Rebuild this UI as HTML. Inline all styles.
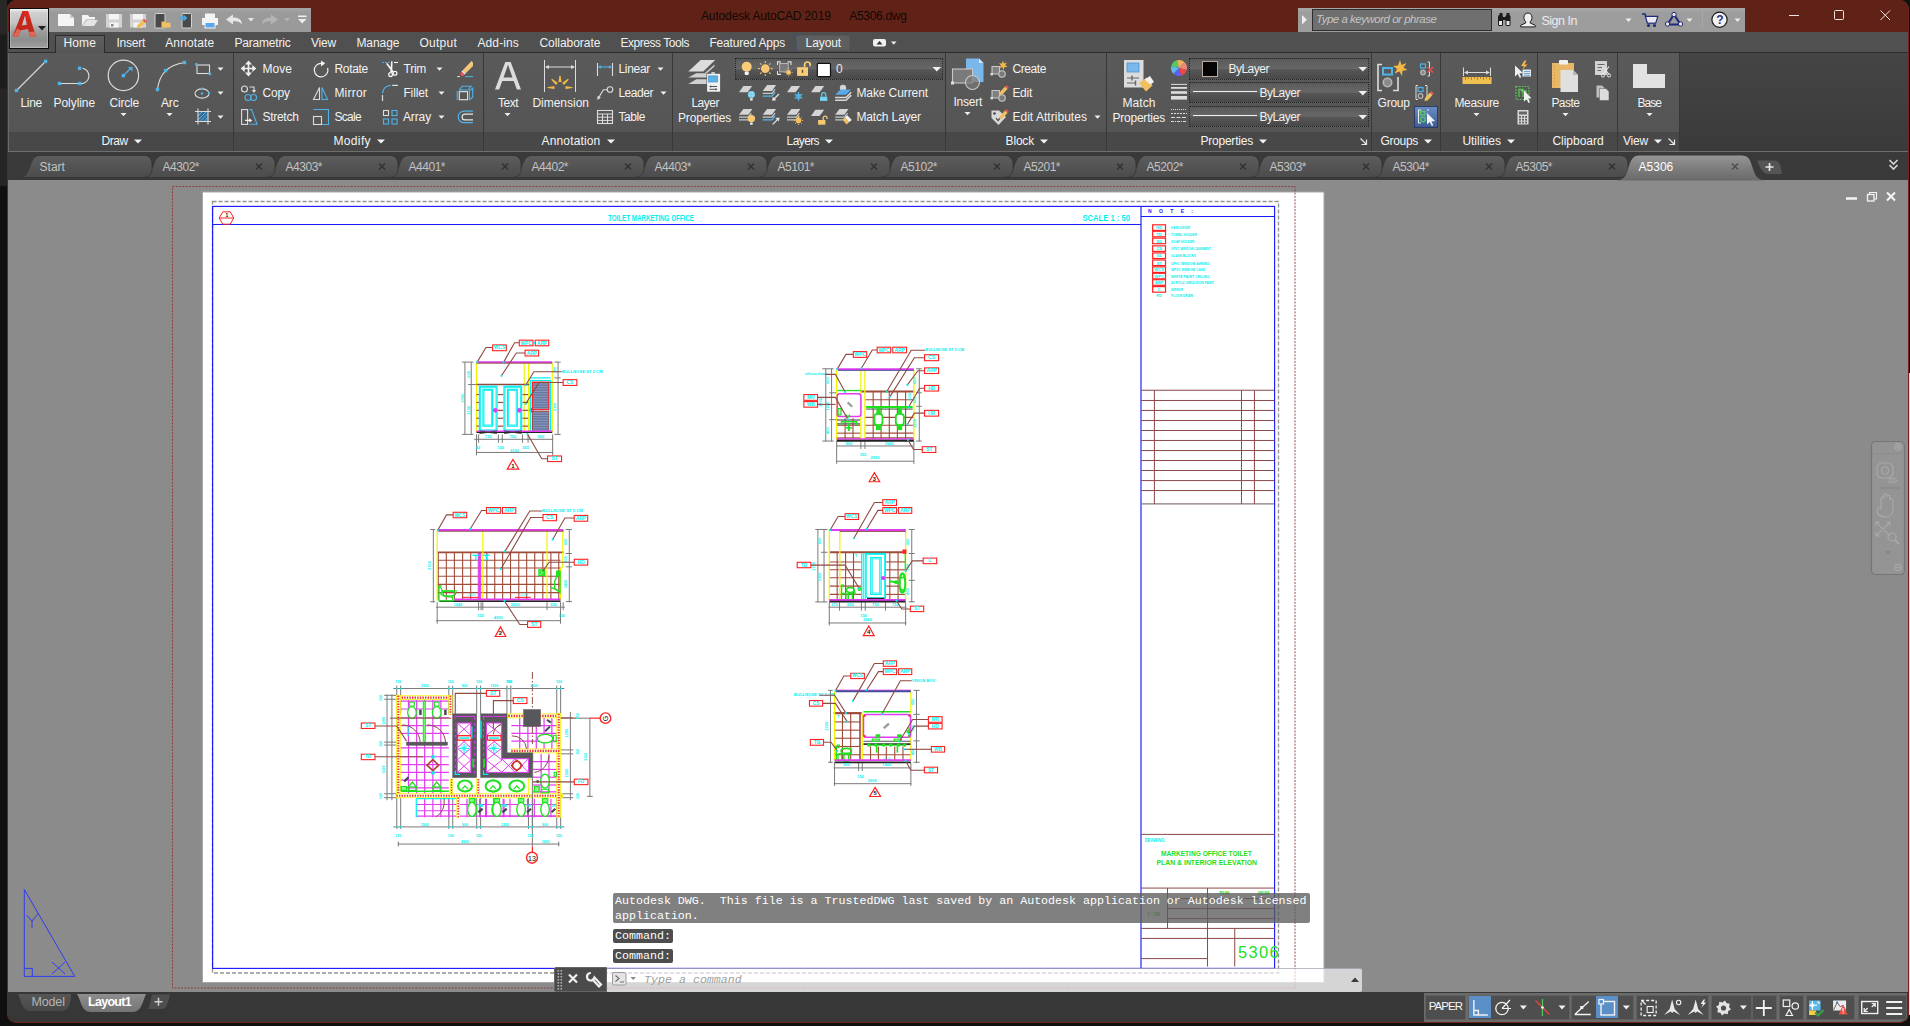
<!DOCTYPE html>
<html>
<head>
<meta charset="utf-8">
<title>Autodesk AutoCAD 2019 - A5306.dwg</title>
<style>
*{box-sizing:border-box;margin:0;padding:0}
html,body{width:1910px;height:1026px;overflow:hidden;background:#101010;font-family:"Liberation Sans",sans-serif;}
.a{position:absolute}
#win{position:absolute;left:7px;top:0;width:1902px;height:1023px;background:#3b3b3b;border-left:1px solid #6b2519;border-right:1px solid #6b2519;border-bottom:1px solid #6b2519;border-radius:9px;overflow:hidden}
#leftstrip{position:absolute;left:0;top:0;width:7px;height:1026px;background:#181818}
#inner{position:absolute;left:-8px;top:0;width:1910px;height:1026px}
.t{position:absolute;white-space:pre;line-height:14px;font-size:12px;color:#f2f2f2}
svg{position:absolute;left:0;top:0;overflow:visible}
</style>
</head>
<body>
<div id="leftstrip" style="background:linear-gradient(#282828 0,#282828 34px,#1c1c1c 35px,#1c1c1c 88px,#252525 89px,#252525 185px,#0f0f0f 187px)"></div>
<div id="rightstrip" style="position:absolute;left:1909px;top:373px;width:1px;height:642px;background:#d6d6d6"></div>
<div id="win"><div id="inner">
<div class="a" style="left:8px;top:0px;width:1901px;height:32px;background:#602217;"></div>
<div class="t" style="left:701px;top:8.53px;font-size:12px;line-height:14px;color:#120806;letter-spacing:-0.146px;">Autodesk AutoCAD 2019</div>
<div class="t" style="left:849.3px;top:8.53px;font-size:12px;line-height:14px;color:#120806;letter-spacing:-0.305px;">A5306.dwg</div>
<div class="a" style="left:49px;top:8px;width:262px;height:24px;background:linear-gradient(#a6a6a6,#9a9a9a 20%,#9a9a9a);"></div>
<div class="a" style="left:1298px;top:8px;width:447px;height:24px;background:linear-gradient(#a8a8a8,#9d9d9d 20%,#9d9d9d);"></div>
<div class="a" style="left:1312px;top:9px;width:180px;height:22px;background:#6f6f6f;border:1px solid #2e2e2e;"></div>
<div class="t" style="left:1316px;top:13.45px;font-size:11.5px;line-height:13.5px;color:#c4c4c4;letter-spacing:-0.488px;font-style:italic;">Type a keyword or phrase</div>
<div class="t" style="left:1541.4px;top:13.62px;font-size:12.5px;line-height:14.5px;color:#ececec;letter-spacing:-0.474px;">Sign In</div>
<div class="a" style="left:8px;top:32px;width:1901px;height:21px;background:#505050;"></div>
<div class="a" style="left:8px;top:52px;width:1901px;height:1px;background:#2c2c2c;"></div>
<div class="a" style="left:55px;top:35px;width:50px;height:18px;background:linear-gradient(#5e5e5e,#565656);border:1px solid #2c2c2c;border-bottom:none;"></div>
<div class="a" style="left:796px;top:35px;width:54px;height:16px;background:#5e5e5e;border:1px dotted #34507e;"></div>
<div class="t" style="left:63.5px;top:36.03px;font-size:12px;line-height:14px;color:#f0f0f0;letter-spacing:0.097px;">Home</div>
<div class="t" style="left:116.5px;top:36.03px;font-size:12px;line-height:14px;color:#f0f0f0;letter-spacing:-0.235px;">Insert</div>
<div class="t" style="left:165.2px;top:36.03px;font-size:12px;line-height:14px;color:#f0f0f0;letter-spacing:0.145px;">Annotate</div>
<div class="t" style="left:234.4px;top:36.03px;font-size:12px;line-height:14px;color:#f0f0f0;letter-spacing:-0.182px;">Parametric</div>
<div class="t" style="left:311px;top:36.03px;font-size:12px;line-height:14px;color:#f0f0f0;letter-spacing:-0.199px;">View</div>
<div class="t" style="left:356.4px;top:36.03px;font-size:12px;line-height:14px;color:#f0f0f0;letter-spacing:-0.061px;">Manage</div>
<div class="t" style="left:419.4px;top:36.03px;font-size:12px;line-height:14px;color:#f0f0f0;letter-spacing:0.263px;">Output</div>
<div class="t" style="left:477.4px;top:36.03px;font-size:12px;line-height:14px;color:#f0f0f0;letter-spacing:0.13px;">Add-ins</div>
<div class="t" style="left:539.4px;top:36.03px;font-size:12px;line-height:14px;color:#f0f0f0;letter-spacing:-0.034px;">Collaborate</div>
<div class="t" style="left:620.4px;top:36.03px;font-size:12px;line-height:14px;color:#f0f0f0;letter-spacing:-0.452px;">Express Tools</div>
<div class="t" style="left:709.4px;top:36.03px;font-size:12px;line-height:14px;color:#f0f0f0;letter-spacing:-0.189px;">Featured Apps</div>
<div class="t" style="left:805.6px;top:36.03px;font-size:12px;line-height:14px;color:#f0f0f0;letter-spacing:-0.105px;">Layout</div>
<div class="a" style="left:9px;top:8px;width:40px;height:41px;background:linear-gradient(#f2f2f2 0,#e0e0e0 4%,#cfcfcf 10%,#c4c4c4 35%,#9a9a9a 60%,#8e8e8e 80%,#a0a0a0 100%);border:1px solid #0c0c0c;box-shadow:inset 0 0 0 1px rgba(255,255,255,.25);"></div>
<svg width="1910" height="1026" viewBox="0 0 1910 1026"><path d="M12.6,36.5 L22.5,11 L28,11 L36,36.5 L30,36.5 L28,29 L20.5,30.5 L18.5,36.5 Z M21.8,25.6 L26.8,24.8 L25,15.5 Z" fill="#c4281d"/><path d="M12.6,36.5 L18.5,36.5 L20.5,30.5 L17.5,28.5 Z M30,36.5 L36,36.5 L34.4,31.5 L28.8,32Z" fill="#e5705c" opacity=".85"/><path d="M22.5,11 L28,11 L31,20 L26.5,18Z" fill="#e0281c" opacity=".9"/><path d="M38,26 L46,26 L42,30.5 Z" fill="#222"/><path d="M58,14 H70 L74,18 V26 H58 Z" fill="#f4f4f4"/><path d="M70,14 V18 H74Z" fill="#c8c8c8"/><path d="M82,26 V15 H88 L89.5,17 H95 V19.5 H86 L82,26Z" fill="#f4f4f4"/><path d="M82.5,26 L86.5,20 H98 L94,26Z" fill="#e4e4e4"/><path d="M106,14 H122 V27.5 H106Z" fill="#d2d2d2"/><rect x="109" y="14" width="10" height="5.5" fill="#f4f4f4"/><rect x="109.5" y="22.5" width="9" height="5" fill="#f4f4f4"/><rect x="111" y="24" width="2.5" height="2.5" fill="#8a8a8a"/><path d="M130,14 H146 V27.5 H130Z" fill="#d2d2d2"/><rect x="133" y="14" width="10" height="5.5" fill="#f4f4f4"/><rect x="133.5" y="22.5" width="9" height="5" fill="#f4f4f4"/><path d="M137,25.5 L142.5,20 L145.5,23 L140,28 L137,28.2Z" fill="#f0c060"/><path d="M142.5,20 L144,18.7 L146.8,21.6 L145.5,23Z" fill="#e8584a"/><rect x="155" y="13.5" width="10" height="14.5" rx="1" fill="#4a4a4a" stroke="#d2d2d2" stroke-width="1"/><path d="M161.5,27.5 V21.5 H165 L166,22.8 H170.5 V27.5Z" fill="#f2c260"/><rect x="182" y="13.5" width="9.5" height="14.5" rx="1" fill="#4a4a4a" stroke="#d2d2d2" stroke-width="1"/><path d="M179.5,16.5 H183.5 V14.5 L187.5,18 L183.5,21.5 V19.5 H179.5Z" fill="#4aa8e0"/><rect x="205" y="13.5" width="10" height="5" fill="#f4f4f4"/><rect x="202" y="18" width="16" height="7" fill="#f4f4f4"/><rect x="205" y="22.5" width="10" height="5.5" fill="#5aa8ee" stroke="#f4f4f4" stroke-width="1"/><path d="M226,19.5 L233,14.5 V17.5 C239,17.5 242,20 242,24.5 C240,21.5 237.5,21 233,21.3 V24.5Z" fill="#e6e6e6"/><path d="M248,18 H254 L251,21.5Z" fill="#e6e6e6"/><path d="M278,19.5 L271,14.5 V17.5 C265,17.5 262,20 262,24.5 C264,21.5 266.5,21 271,21.3 V24.5Z" fill="#b4b4b4"/><path d="M284,18 H290 L287,21.5Z" fill="#b4b4b4"/><rect x="298" y="15.5" width="8.5" height="1.6" fill="#eee"/><path d="M298,19 H306.5 L302.2,23.5Z" fill="#eee"/><path d="M1302,15 L1307,19.8 L1302,24.5Z" fill="#eee"/><g fill="#1c1c1c"><rect x="1498" y="15" width="5" height="11" rx="1.5"/><rect x="1505.5" y="15" width="5" height="11" rx="1.5"/><rect x="1499.5" y="13" width="3" height="3"/><rect x="1506.5" y="13" width="3" height="3"/><rect x="1502" y="17" width="5" height="3"/></g><rect x="1499" y="21" width="3" height="4" fill="#e8e8e8"/><rect x="1506.5" y="21" width="3" height="4" fill="#e8e8e8"/><path d="M1528,13 c2.6,0 4,2 4,4.5 c0,2 -1,3.5 -1.8,4.3 v1.2 l5,2.3 v1.6 h-14.5 v-1.6 l5,-2.3 v-1.2 c-.8,-.8 -1.8,-2.3 -1.8,-4.3 c0,-2.5 1.4,-4.5 4.1,-4.5z" fill="#f0f0f0" stroke="#1c1c1c" stroke-width="1"/><path d="M1625.5,18.5 H1631.5 L1628.5,22Z" fill="#eee"/><path d="M1642,14 H1645 L1647.5,23 H1655.5 L1657.5,16.5 H1646" fill="none" stroke="#1f2a7a" stroke-width="1.6"/><path d="M1646.3,17 H1657 L1655.3,22.5 H1647.8Z" fill="#e8e8ee"/><circle cx="1648.5" cy="25.5" r="1.6" fill="#1f2a7a"/><circle cx="1654.5" cy="25.5" r="1.6" fill="#1f2a7a"/><path d="M1674,14.5 L1680.5,24.5 H1667.5Z" fill="none" stroke="#1f2a7a" stroke-width="2.2" stroke-linejoin="round"/><circle cx="1674" cy="14.5" r="2.2" fill="#e8e8ee" stroke="#1f2a7a"/><circle cx="1667.5" cy="24" r="2.2" fill="#e8e8ee" stroke="#1f2a7a"/><circle cx="1680.5" cy="24" r="2.2" fill="#e8e8ee" stroke="#1f2a7a"/><path d="M1686.5,18.5 H1692.5 L1689.5,22Z" fill="#eee"/><line x1="1702.5" y1="11" x2="1702.5" y2="29" stroke="#b8b0b0" stroke-dasharray="1 1"/><circle cx="1719.5" cy="19.7" r="7.6" fill="#f2f2f2" stroke="#1c1c1c" stroke-width="1.2"/><path d="M1734.5,18.5 H1740.5 L1737.5,22Z" fill="#eee"/><g stroke="#f0e4e0" stroke-width="1" fill="none"><line x1="1789" y1="15.5" x2="1799" y2="15.5"/><rect x="1834.5" y="10.5" width="9" height="9" rx="1"/><path d="M1880.5,10.5 L1890,20 M1890,10.5 L1880.5,20"/></g><rect x="873" y="39" width="13" height="7.5" rx="2" fill="#f0f0f0"/><path d="M876.5,44.5 H882.5 L879.5,41Z" fill="#333"/><path d="M891,41.5 H896.5 L893.7,44.8Z" fill="#eee"/></svg><div class="t" style="left:1716.3px;top:13.03px;font-size:12px;line-height:14px;color:#2a2f8a;font-weight:bold;">?</div>
<div class="a" style="left:8px;top:53px;width:1901px;height:99px;background:#3d3d3d;"></div>
<div class="a" style="left:1680px;top:53px;width:1229px;height:98px;background:linear-gradient(#454545,#3a3a3a);"></div>
<div class="a" style="left:9px;top:53px;width:224px;height:79px;background:linear-gradient(#5a5a5a,#555555);"></div>
<div class="a" style="left:9px;top:132px;width:224px;height:19px;background:#484848;"></div>
<div class="a" style="left:233px;top:53px;width:1px;height:98px;background:#383838;"></div>
<div class="t" style="left:101.6px;top:134.03px;font-size:12px;line-height:14px;color:#f4f4f4;letter-spacing:-0.501px;">Draw</div>
<div class="a" style="left:234px;top:53px;width:249px;height:79px;background:linear-gradient(#5a5a5a,#555555);"></div>
<div class="a" style="left:234px;top:132px;width:249px;height:19px;background:#484848;"></div>
<div class="a" style="left:483px;top:53px;width:1px;height:98px;background:#383838;"></div>
<div class="t" style="left:333.4px;top:134.03px;font-size:12px;line-height:14px;color:#f4f4f4;letter-spacing:0.376px;">Modify</div>
<div class="a" style="left:484px;top:53px;width:188px;height:79px;background:linear-gradient(#5a5a5a,#555555);"></div>
<div class="a" style="left:484px;top:132px;width:188px;height:19px;background:#484848;"></div>
<div class="a" style="left:672px;top:53px;width:1px;height:98px;background:#383838;"></div>
<div class="t" style="left:541.6px;top:134.03px;font-size:12px;line-height:14px;color:#f4f4f4;letter-spacing:0.142px;">Annotation</div>
<div class="a" style="left:673px;top:53px;width:272px;height:79px;background:linear-gradient(#5a5a5a,#555555);"></div>
<div class="a" style="left:673px;top:132px;width:272px;height:19px;background:#484848;"></div>
<div class="a" style="left:945px;top:53px;width:1px;height:98px;background:#383838;"></div>
<div class="t" style="left:786.6px;top:134.03px;font-size:12px;line-height:14px;color:#f4f4f4;letter-spacing:-0.603px;">Layers</div>
<div class="a" style="left:946px;top:53px;width:160px;height:79px;background:linear-gradient(#5a5a5a,#555555);"></div>
<div class="a" style="left:946px;top:132px;width:160px;height:19px;background:#484848;"></div>
<div class="a" style="left:1106px;top:53px;width:1px;height:98px;background:#383838;"></div>
<div class="t" style="left:1005.6px;top:134.03px;font-size:12px;line-height:14px;color:#f4f4f4;letter-spacing:-0.189px;">Block</div>
<div class="a" style="left:1107px;top:53px;width:264px;height:79px;background:linear-gradient(#5a5a5a,#555555);"></div>
<div class="a" style="left:1107px;top:132px;width:264px;height:19px;background:#484848;"></div>
<div class="a" style="left:1371px;top:53px;width:1px;height:98px;background:#383838;"></div>
<div class="t" style="left:1200.4px;top:134.03px;font-size:12px;line-height:14px;color:#f4f4f4;letter-spacing:-0.209px;">Properties</div>
<div class="a" style="left:1372px;top:53px;width:68px;height:79px;background:linear-gradient(#5a5a5a,#555555);"></div>
<div class="a" style="left:1372px;top:132px;width:68px;height:19px;background:#484848;"></div>
<div class="a" style="left:1440px;top:53px;width:1px;height:98px;background:#383838;"></div>
<div class="t" style="left:1380.6px;top:134.03px;font-size:12px;line-height:14px;color:#f4f4f4;letter-spacing:-0.325px;">Groups</div>
<div class="a" style="left:1441px;top:53px;width:96px;height:79px;background:linear-gradient(#5a5a5a,#555555);"></div>
<div class="a" style="left:1441px;top:132px;width:96px;height:19px;background:#484848;"></div>
<div class="a" style="left:1537px;top:53px;width:1px;height:98px;background:#383838;"></div>
<div class="t" style="left:1462.4px;top:134.03px;font-size:12px;line-height:14px;color:#f4f4f4;letter-spacing:-0.008px;">Utilities</div>
<div class="a" style="left:1538px;top:53px;width:79px;height:79px;background:linear-gradient(#5a5a5a,#555555);"></div>
<div class="a" style="left:1538px;top:132px;width:79px;height:19px;background:#484848;"></div>
<div class="a" style="left:1617px;top:53px;width:1px;height:98px;background:#383838;"></div>
<div class="t" style="left:1552.4px;top:134.03px;font-size:12px;line-height:14px;color:#f4f4f4;letter-spacing:-0.018px;">Clipboard</div>
<div class="a" style="left:1618px;top:53px;width:61px;height:79px;background:linear-gradient(#5a5a5a,#555555);"></div>
<div class="a" style="left:1618px;top:132px;width:61px;height:19px;background:#484848;"></div>
<div class="a" style="left:1679px;top:53px;width:1px;height:98px;background:#383838;"></div>
<div class="t" style="left:1623px;top:134.03px;font-size:12px;line-height:14px;color:#f4f4f4;letter-spacing:-0.199px;">View</div>
<div class="a" style="left:8px;top:151px;width:1901px;height:1px;background:#6e6e6e;"></div>
<div class="a" style="left:8px;top:53px;width:1px;height:98px;background:#6a6a6a;"></div>
<div class="t" style="left:20.4px;top:96.03px;font-size:12px;line-height:14px;color:#f2f2f2;letter-spacing:-0.272px;">Line</div>
<div class="t" style="left:53.6px;top:96.03px;font-size:12px;line-height:14px;color:#f2f2f2;letter-spacing:-0.078px;">Polyline</div>
<div class="t" style="left:109.6px;top:96.03px;font-size:12px;line-height:14px;color:#f2f2f2;letter-spacing:-0.212px;">Circle</div>
<div class="t" style="left:161px;top:96.03px;font-size:12px;line-height:14px;color:#f2f2f2;letter-spacing:-0.134px;">Arc</div>
<div class="t" style="left:262.4px;top:62.03px;font-size:12px;line-height:14px;color:#f2f2f2;letter-spacing:0.064px;">Move</div>
<div class="t" style="left:262.4px;top:86.03px;font-size:12px;line-height:14px;color:#f2f2f2;letter-spacing:-0.104px;">Copy</div>
<div class="t" style="left:262.4px;top:110.03px;font-size:12px;line-height:14px;color:#f2f2f2;letter-spacing:-0.26px;">Stretch</div>
<div class="t" style="left:334.4px;top:62.03px;font-size:12px;line-height:14px;color:#f2f2f2;letter-spacing:-0.293px;">Rotate</div>
<div class="t" style="left:334.4px;top:86.03px;font-size:12px;line-height:14px;color:#f2f2f2;letter-spacing:0.212px;">Mirror</div>
<div class="t" style="left:334.4px;top:110.03px;font-size:12px;line-height:14px;color:#f2f2f2;letter-spacing:-0.684px;">Scale</div>
<div class="t" style="left:403.6px;top:62.03px;font-size:12px;line-height:14px;color:#f2f2f2;letter-spacing:-0.286px;">Trim</div>
<div class="t" style="left:403.4px;top:86.03px;font-size:12px;line-height:14px;color:#f2f2f2;letter-spacing:-0.123px;">Fillet</div>
<div class="t" style="left:403px;top:110.03px;font-size:12px;line-height:14px;color:#f2f2f2;letter-spacing:-0.134px;">Array</div>
<div class="t" style="left:498px;top:96.03px;font-size:12px;line-height:14px;color:#f2f2f2;letter-spacing:-0.502px;">Text</div>
<div class="t" style="left:532.4px;top:96.03px;font-size:12px;line-height:14px;color:#f2f2f2;letter-spacing:-0.01px;">Dimension</div>
<div class="t" style="left:618.4px;top:62.03px;font-size:12px;line-height:14px;color:#f2f2f2;letter-spacing:-0.293px;">Linear</div>
<div class="t" style="left:618.4px;top:86.03px;font-size:12px;line-height:14px;color:#f2f2f2;letter-spacing:-0.461px;">Leader</div>
<div class="t" style="left:618.4px;top:110.03px;font-size:12px;line-height:14px;color:#f2f2f2;letter-spacing:-0.418px;">Table</div>
<div class="t" style="left:691.4px;top:96.03px;font-size:12px;line-height:14px;color:#f2f2f2;letter-spacing:-0.484px;">Layer</div>
<div class="t" style="left:678px;top:111.03px;font-size:12px;line-height:14px;color:#f2f2f2;letter-spacing:-0.169px;">Properties</div>
<div class="t" style="left:856.4px;top:86.03px;font-size:12px;line-height:14px;color:#f2f2f2;letter-spacing:-0.091px;">Make Current</div>
<div class="t" style="left:856.4px;top:110.03px;font-size:12px;line-height:14px;color:#f2f2f2;letter-spacing:-0.13px;">Match Layer</div>
<div class="t" style="left:953.4px;top:95.03px;font-size:12px;line-height:14px;color:#f2f2f2;letter-spacing:-0.235px;">Insert</div>
<div class="t" style="left:1012.4px;top:62.03px;font-size:12px;line-height:14px;color:#f2f2f2;letter-spacing:-0.403px;">Create</div>
<div class="t" style="left:1012.4px;top:86.03px;font-size:12px;line-height:14px;color:#f2f2f2;letter-spacing:-0.27px;">Edit</div>
<div class="t" style="left:1012.4px;top:110.03px;font-size:12px;line-height:14px;color:#f2f2f2;letter-spacing:0.037px;">Edit Attributes</div>
<div class="t" style="left:1122.4px;top:96.03px;font-size:12px;line-height:14px;color:#f2f2f2;letter-spacing:0.104px;">Match</div>
<div class="t" style="left:1112.4px;top:111.03px;font-size:12px;line-height:14px;color:#f2f2f2;letter-spacing:-0.209px;">Properties</div>
<div class="t" style="left:1377.6px;top:96.03px;font-size:12px;line-height:14px;color:#f2f2f2;letter-spacing:-0.27px;">Group</div>
<div class="t" style="left:1454.4px;top:96.03px;font-size:12px;line-height:14px;color:#f2f2f2;letter-spacing:-0.298px;">Measure</div>
<div class="t" style="left:1551.4px;top:96.03px;font-size:12px;line-height:14px;color:#f2f2f2;letter-spacing:-0.537px;">Paste</div>
<div class="t" style="left:1637.4px;top:96.03px;font-size:12px;line-height:14px;color:#f2f2f2;letter-spacing:-0.938px;">Base</div>
<div class="a" style="left:735px;top:58px;width:208px;height:22px;background:linear-gradient(#5a5a5a,#676767 48%,#565656 54%,#484848);border:1px dotted #262626;"></div>
<div class="t" style="left:836px;top:62.03px;font-size:12px;line-height:14px;color:#e8e8e8;">0</div>
<div class="a" style="left:1189px;top:58px;width:180px;height:21.5px;background:linear-gradient(#5a5a5a,#676767 48%,#565656 54%,#484848);border:1px dotted #262626;"></div>
<div class="a" style="left:1189px;top:81.5px;width:180px;height:21.5px;background:linear-gradient(#5a5a5a,#676767 48%,#565656 54%,#484848);border:1px dotted #262626;"></div>
<div class="a" style="left:1189px;top:105.5px;width:180px;height:21.5px;background:linear-gradient(#5a5a5a,#676767 48%,#565656 54%,#484848);border:1px dotted #262626;"></div>
<div class="t" style="left:1228.4px;top:62.03px;font-size:12px;line-height:14px;color:#f0f0f0;letter-spacing:-0.489px;">ByLayer</div>
<div class="t" style="left:1259.4px;top:85.53px;font-size:12px;line-height:14px;color:#f0f0f0;letter-spacing:-0.489px;">ByLayer</div>
<div class="t" style="left:1259.4px;top:109.53px;font-size:12px;line-height:14px;color:#f0f0f0;letter-spacing:-0.489px;">ByLayer</div>
<div class="a" style="left:1414px;top:106px;width:24px;height:21.5px;background:linear-gradient(#6a8cc4,#3c5c98);border:1px solid #2c3c66;"></div>
<svg width="1910" height="1026" viewBox="0 0 1910 1026"><path d="M134,139.5 H142 L138,143.5Z" fill="#f4f4f4"/><path d="M377,139.5 H385 L381,143.5Z" fill="#f4f4f4"/><path d="M607,139.5 H615 L611,143.5Z" fill="#f4f4f4"/><path d="M825,139.5 H833 L829,143.5Z" fill="#f4f4f4"/><path d="M1040,139.5 H1048 L1044,143.5Z" fill="#f4f4f4"/><path d="M1259,139.5 H1267 L1263,143.5Z" fill="#f4f4f4"/><path d="M1424,139.5 H1432 L1428,143.5Z" fill="#f4f4f4"/><path d="M1507,139.5 H1515 L1511,143.5Z" fill="#f4f4f4"/><path d="M1654,139.5 H1662 L1658,143.5Z" fill="#f4f4f4"/><line x1="17" y1="90" x2="45.5" y2="61.5" stroke="#dcdcdc" stroke-width="1.1"/><rect x="14.8" y="88.8" width="3.4" height="3.4" fill="#4fb3e8"/><rect x="43.9" y="59.699999999999996" width="3.4" height="3.4" fill="#4fb3e8"/><path d="M59.5,83.5 H80 A7.6,7.6 0 0 0 82.5,68.3" fill="none" stroke="#dcdcdc" stroke-width="1.1"/><rect x="57.8" y="81.8" width="3.4" height="3.4" fill="#4fb3e8"/><rect x="77.89999999999999" y="81.8" width="3.4" height="3.4" fill="#4fb3e8"/><rect x="77.89999999999999" y="66.6" width="3.4" height="3.4" fill="#4fb3e8"/><circle cx="123.4" cy="75.4" r="15.2" fill="none" stroke="#dcdcdc" stroke-width="1.2"/><rect x="121.7" y="73.89999999999999" width="3.4" height="3.4" fill="#4fb3e8"/><path d="M125,74 L131,68" stroke="#4fb3e8" stroke-width="1.2"/><path d="M128,67 H132.5 V71.5Z" fill="#4fb3e8"/><path d="M157.5,89.5 Q160,66 184.5,62.5" fill="none" stroke="#dcdcdc" stroke-width="1.1"/><rect x="155.8" y="87.8" width="3.4" height="3.4" fill="#4fb3e8"/><rect x="163.9" y="68.89999999999999" width="3.4" height="3.4" fill="#4fb3e8"/><rect x="182.8" y="60.8" width="3.4" height="3.4" fill="#4fb3e8"/><rect x="197" y="65" width="12.5" height="8.5" fill="none" stroke="#dcdcdc" stroke-width="1.1"/><rect x="195.10000000000002" y="63.099999999999994" width="2.4" height="2.4" fill="#4fb3e8"/><rect x="208.8" y="72.8" width="2.4" height="2.4" fill="#4fb3e8"/><ellipse cx="202" cy="93.5" rx="7" ry="4.6" fill="none" stroke="#dcdcdc" stroke-width="1.1"/><rect x="200.9" y="87.60000000000001" width="2.2" height="2.2" fill="#4fb3e8"/><rect x="207.9" y="91.9" width="2.2" height="2.2" fill="#4fb3e8"/><rect x="200.9" y="92.4" width="2.2" height="2.2" fill="#4fb3e8"/><rect x="198" y="111.5" width="10" height="10" fill="#3a6a94"/><path d="M198,116 L202.5,111.5 M198,120 L206.5,111.5 M200,121.5 L208,113.5 M204,121.5 L208,117.5" stroke="#4fb3e8" stroke-width="1"/><path d="M195,111.5 H211 M195,121.5 H211 M198,108.5 V124.5 M208,108.5 V124.5" stroke="#dcdcdc" stroke-width="1.1"/><path d="M217.5,67.5 H223.5 L220.5,70.8Z" fill="#f0f0f0"/><path d="M217.5,91.5 H223.5 L220.5,94.8Z" fill="#f0f0f0"/><path d="M217.5,115.5 H223.5 L220.5,118.8Z" fill="#f0f0f0"/><path d="M120.5,113.0 H126.5 L123.5,116.3Z" fill="#f0f0f0"/><path d="M166.5,113.0 H172.5 L169.5,116.3Z" fill="#f0f0f0"/><path d="M243,68.5 H254 M248.5,63 V74" stroke="#f0f0f0" stroke-width="1.7" fill="none"/><path d="M248.5,60.6 L252,64.6 H245Z M248.5,76.4 L252,72.4 H245Z M240.7,68.5 L244.7,65 V72Z M256.3,68.5 L252.3,65 V72Z" fill="#f0f0f0"/><circle cx="244.5" cy="89" r="3" fill="none" stroke="#dcdcdc" stroke-width="1.1"/><path d="M249.5,87 H254 V91" fill="none" stroke="#dcdcdc" stroke-width="1.1"/><path d="M254,93 L251.8,90 H256.2Z" fill="#dcdcdc"/><circle cx="248" cy="97.5" r="3" fill="none" stroke="#4fb3e8" stroke-width="1.1"/><circle cx="253.5" cy="97.5" r="3" fill="none" stroke="#4fb3e8" stroke-width="1.1"/><rect x="241.6" y="109.6" width="6" height="14.8" fill="none" stroke="#dcdcdc" stroke-width="1.1"/><path d="M249.5,109.6 H251.6 L257,124.3 H249.5" fill="none" stroke="#4fb3e8" stroke-width="1.1"/><path d="M245,120.4 H250" stroke="#f0f0f0" stroke-width="1.2"/><path d="M252.3,120.4 L249.3,118.2 V122.6Z" fill="#f0f0f0"/><path d="M327.6,68 A6.8,6.8 0 1 1 321.5,63.3" fill="none" stroke="#f0f0f0" stroke-width="1.2"/><path d="M321,60.4 L325.3,63.3 L321,66.6Z" fill="#f0f0f0"/><path d="M319.5,87.5 V99.5 H313.5Z" fill="none" stroke="#dcdcdc" stroke-width="1.1"/><path d="M322,87.5 V99.5 H327.5Z" fill="none" stroke="#4fb3e8" stroke-width="1.1"/><path d="M313.5,109.5 H328.5 V124.5 H322" fill="none" stroke="#4fb3e8" stroke-width="1.1"/><rect x="313.5" y="116.5" width="8" height="8" fill="none" stroke="#dcdcdc" stroke-width="1.1"/><path d="M382,62.5 H390.5" stroke="#4fb3e8" stroke-width="1.1" stroke-dasharray="1.8 1"/><path d="M394,62.5 H398" stroke="#f0f0f0" stroke-width="1.1"/><path d="M385.8,63.6 L387.6,63.2 L394.2,72 L392.6,72.8Z M391.2,61 L392.6,61.6 L392.2,72.2 L390.2,72Z" fill="#f4f4f4"/><circle cx="390.6" cy="74.6" r="1.9" fill="none" stroke="#f4f4f4" stroke-width="1.3"/><circle cx="395" cy="73.2" r="1.9" fill="none" stroke="#f4f4f4" stroke-width="1.3"/><path d="M382.5,93.5 A8.3,8.3 0 0 1 390.8,85.3" fill="none" stroke="#4fb3e8" stroke-width="1.2"/><path d="M382.5,95 V101 M392.2,85.4 H398" stroke="#dcdcdc" stroke-width="1.2"/><rect x="383.5" y="110.5" width="5" height="5" fill="none" stroke="#dcdcdc" stroke-width="1.1"/><rect x="392" y="110.5" width="5" height="5" fill="none" stroke="#4fb3e8" stroke-width="1.1"/><rect x="383.5" y="119" width="5" height="5" fill="none" stroke="#4fb3e8" stroke-width="1.1"/><rect x="392" y="119" width="5" height="5" fill="none" stroke="#4fb3e8" stroke-width="1.1"/><path d="M436.5,67.5 H442.5 L439.5,70.8Z" fill="#f0f0f0"/><path d="M438.5,91.5 H444.5 L441.5,94.8Z" fill="#f0f0f0"/><path d="M438.5,115.5 H444.5 L441.5,118.8Z" fill="#f0f0f0"/><path d="M462.5,70.5 L471.5,61 L473,62.5 V66 L465.5,73.5Z" fill="#f4c878"/><path d="M461.5,71.6 L462.5,70.5 L465.5,73.5 L464.5,74.6Z" fill="#f8f8f8"/><path d="M460.3,73 L461.5,71.6 L464.5,74.6 L463.2,75.9 Q460.5,76.5 460.3,73Z" fill="#f05858"/><path d="M457.2,76.6 H460" stroke="#e8e8e8" stroke-width="1"/><path d="M465,76.6 H473" stroke="#4fb3e8" stroke-width="1"/><rect x="459.3" y="91.7" width="8.3" height="8" fill="none" stroke="#e4e4e4" stroke-width="1.1"/><path d="M459.3,90 L462.2,86.3 H471.2 L468,90Z M469.5,90.6 L472.7,88.2 V97.2 L469.5,99.7Z M457.2,91 V100" fill="none" stroke="#4fb3e8" stroke-width="1.1"/><path d="M473,111.2 H464 A5.75,5.75 0 0 0 464,122.7 H473" fill="none" stroke="#4fb3e8" stroke-width="1.2"/><path d="M473,114.100 H465 A2.9,2.9 0 0 0 465,119.9 H473" fill="none" stroke="#e8e8e8" stroke-width="1.2"/><path d="M495,89.5 L505.3,62 H510.7 L521,89.5 H516.8 L513.8,81 H502.2 L499.2,89.5Z M503.5,77.5 H512.5 L508,64.8Z" fill="#dcdcdc"/><path d="M504.5,113.0 H510.5 L507.5,116.3Z" fill="#f0f0f0"/><path d="M544.5,60 V92 M575.5,60 V92 M546,67 H574" stroke="#dcdcdc" stroke-width="1" fill="none"/><path d="M545,67 L549,65 V69Z M575,67 L571,65 V69Z" fill="#dcdcdc"/><path d="M560,76 L559,81.5 H561Z M552,79.5 L556,84 L557,83Z M568,79.5 L564,84 L563,83Z M548,87.5 L554,86.8 V88.3Z M572,87.5 L566,86.8 V88.3Z" fill="#f0b848" stroke="#f0b848" stroke-width="1.2" stroke-linejoin="round"/><path d="M597.5,63 V76 M612.5,63 V76" stroke="#dcdcdc" stroke-width="1.1"/><path d="M599,67 H611" stroke="#4fb3e8" stroke-width="1.1"/><path d="M598,67 L601,65.3 V68.7Z M612,67 L609,65.3 V68.7Z" fill="#4fb3e8"/><circle cx="610" cy="89.5" r="2.8" fill="none" stroke="#dcdcdc" stroke-width="1.1"/><path d="M607.3,89.7 H603.4 L598.6,97.6" fill="none" stroke="#dcdcdc" stroke-width="1.1"/><path d="M597.3,100 L597.6,95.8 L600.9,97.8Z" fill="#dcdcdc"/><rect x="597.5" y="110.5" width="15" height="13" fill="none" stroke="#dcdcdc" stroke-width="1.1"/><path d="M597.5,114 H612.5 M597.5,117.2 H612.5 M597.5,120.4 H612.5 M602.5,114 V123.5 M607.5,114 V123.5" stroke="#dcdcdc" stroke-width="1"/><path d="M657.5,67.5 H663.5 L660.5,70.8Z" fill="#f0f0f0"/><path d="M660.5,91.5 H666.5 L663.5,94.8Z" fill="#f0f0f0"/><path d="M688.3,71.4 L700.7,60.1 H715.1 L703.3,71.4Z" fill="#dcdcdc"/><path d="M688.3,77.6 L696.3,73.3 H706.5 V77.6Z" fill="#d0d0d0"/><path d="M704.5,73.3 L714.5,64.5 V66.5 L707,73.3Z" fill="#c8c8c8"/><path d="M688.3,84 L696.3,79.3 H706.5 V84Z" fill="#d0d0d0"/><rect x="711.3" y="72" width="3.6" height="2" fill="#c8c8c8"/><rect x="707.1" y="73.8" width="13" height="17.9" fill="#efefef"/><rect x="708.6" y="75.9" width="9" height="6.1" fill="#5ab4e8" stroke="#3a8ac4" stroke-width=".6"/><path d="M710,86.5 H717 M709.5,89.3 H716.5" stroke="#555" stroke-width="1"/><path d="M709,86.5 L711.2,85.2 V87.8Z M717.6,89.3 L715.4,88 V90.6Z" fill="#555"/><circle cx="746.7" cy="66.8" r="5" fill="#f8cc78"/><rect x="744.7" y="71.6" width="4" height="3.4" rx="1" fill="#f4f4f4"/><circle cx="765.3" cy="68.6" r="4.3" fill="#f8c870"/><path d="M765.3,61.2 V63 M765.3,74.2 V76 M758,68.6 H759.800 M770.8,68.6 H772.6 M760.1,63.4 L761.4,64.7 M769.2,72.5 L770.5,73.8 M760.1,73.8 L761.4,72.5 M769.2,64.7 L770.5,63.4" stroke="#f8c870" stroke-width="1.1"/><path d="M777.5,65 V61.9 H781 M787.5,61.9 H791 V65 M777.5,71 V74.4 H781" fill="none" stroke="#e0e0e0" stroke-width="1.1"/><rect x="779.7" y="63.4" width="8.500" height="8.500" fill="#7a7a7a" stroke="#c8c8c8" stroke-width=".8"/><circle cx="788.6" cy="72.4" r="2.4" fill="#f8c870"/><path d="M788.6,68.4 V69.3 M788.6,75.5 V76.4 M784.6,72.4 H785.5 M791.7,72.4 H792.6 M785.8,69.6 L786.4,70.2 M790.8,74.6 L791.4,75.2 M785.8,75.2 L786.4,74.6 M790.8,70.2 L791.4,69.6" stroke="#f8c870" stroke-width="1"/><rect x="797.1" y="67.2" width="10.900" height="8.700" fill="#f8cc78"/><path d="M804.6,67.2 V64.8 A2.8,2.8 0 0 1 810.2,64.8 V66.2" fill="none" stroke="#f8cc78" stroke-width="1.700"/><rect x="801.8" y="69.8" width="1.400" height="3" fill="#5a4a20"/><rect x="817.300" y="63.400" width="13.200" height="13.200" fill="#fff" stroke="#111" stroke-width="1.200" rx="1"/><path d="M932.5,67 H941 L936.8,71.5Z" fill="#f0f0f0"/><path d="M739,92.2 L743.4,85.9 H752.2 L747.6,92.2Z" fill="#d4d4d4"/><circle cx="751.4" cy="94.5" r="3.6" fill="#70ccec"/><path d="M748.5,93 H754.300 M748.2,95.5 H754.600 M750.2,91.200 V97.800 M752.600,91.200 V97.800" stroke="#a8e4f8" stroke-width=".5"/><rect x="750.1" y="98.2" width="2.600" height="2.300" rx=".6" fill="#f0f0f0"/><path d="M762.7,91.0 L767.1,85.1 H776.1 L772.0,91.0Z" fill="#d4d4d4"/><path d="M762.7,93.39999999999999 H772.0 L775.1,89.39999999999999" stroke="#c8c8c8" stroke-width="1.300" fill="none"/><path d="M762.7,96.1 H772.0 L775.1,92.1" stroke="#5ab4e8" stroke-width="1.300" fill="none"/><path d="M779,94 L773.5,99.5" stroke="#e8e8e8" stroke-width="1.200"/><path d="M772.2,100.800 L772.8,96.8 L776.300,100.200Z" fill="#e8e8e8"/><path d="M787,92.2 L791.4,85.9 H800.2 L795.6,92.2Z" fill="#d4d4d4"/><path d="M798.500,92 V100.800 M794.700,94.200 L802.300,98.600 M794.700,98.600 L802.300,94.200" stroke="#58b8e8" stroke-width="1.200"/><circle cx="798.500" cy="96.400" r="2.300" fill="none" stroke="#58b8e8" stroke-width=".9"/><path d="M811,92.2 L815.4,85.9 H824.2 L819.6,92.2Z" fill="#d4d4d4"/><rect x="820" y="96.700" width="7.300" height="4.300" fill="#62c8ec"/><path d="M821.700,96.700 V94.700 A2,2 0 0 1 825.700,94.700 V96.700" fill="none" stroke="#62c8ec" stroke-width="1.300"/><path d="M820.500,98 H827 M820.500,99.600 H827" stroke="#b0e8f8" stroke-width=".5"/><circle cx="843" cy="87.900" r="3.200" fill="#d4d4d4"/><path d="M835.100,94.700 L840.500,89.500 H851.200 L846,94.700Z" fill="#5aa8e4"/><path d="M835.100,97.500 H846 L851.200,92.300 M835.100,100.300 H846 L851.200,95.100" stroke="#d8d8d8" stroke-width="1.500" fill="none"/><path d="M739,114.80000000000001 L743.4,108.9 H752.4 L748.3,114.80000000000001Z" fill="#d4d4d4"/><path d="M739,117.2 H748.3 L751.4,113.2" stroke="#c8c8c8" stroke-width="1.300" fill="none"/><path d="M739,119.9 H748.3 L751.4,115.9" stroke="#c8c8c8" stroke-width="1.300" fill="none"/><circle cx="751.4" cy="118.600" r="3.700" fill="#f8c870"/><rect x="750.1" y="122.500" width="2.600" height="2.300" rx=".6" fill="#f0f0f0"/><path d="M762.7,114.80000000000001 L767.1,108.9 H776.1 L772.0,114.80000000000001Z" fill="#d4d4d4"/><path d="M762.7,117.2 H772.0 L775.1,113.2" stroke="#c8c8c8" stroke-width="1.300" fill="none"/><path d="M762.7,119.9 H772.0 L775.1,115.9" stroke="#5ab4e8" stroke-width="1.300" fill="none"/><path d="M772.700,124.300 L778.200,118.800" stroke="#e8e8e8" stroke-width="1.200"/><path d="M779.500,117.500 L778.900,121.500 L775.400,118.100Z" fill="#e8e8e8"/><path d="M787,114.80000000000001 L791.4,108.9 H800.4 L796.3,114.80000000000001Z" fill="#d4d4d4"/><path d="M787,117.2 H796.3 L799.4,113.2" stroke="#c8c8c8" stroke-width="1.300" fill="none"/><path d="M787,119.9 H796.3 L799.4,115.9" stroke="#c8c8c8" stroke-width="1.300" fill="none"/><circle cx="798.500" cy="120.400" r="2.800" fill="#f8c060"/><path d="M798.500,115.800 V116.800 M798.500,124 V125 M793.900,120.400 H794.900 M802.100,120.400 H803.100 M795.200,117.100 L795.900,117.800 M801.100,123 L801.800,123.700 M795.200,123.700 L795.900,123 M801.100,117.800 L801.800,117.100" stroke="#f8c060" stroke-width="1"/><path d="M811,116.1 L815.4,109.8 H824.2 L819.6,116.1Z" fill="#d4d4d4"/><rect x="818.100" y="120" width="7.300" height="4.700" fill="#f8c870"/><path d="M823.200,120 V118 A1.900,1.900 0 0 1 827,118 V118.900" fill="none" stroke="#f8c870" stroke-width="1.300"/><path d="M835.1,114.80000000000001 L839.5,108.9 H848.5 L844.4,114.80000000000001Z" fill="#d4d4d4"/><path d="M835.1,117.2 H844.4 L847.5,113.2" stroke="#c8c8c8" stroke-width="1.300" fill="none"/><path d="M835.1,119.9 H844.4 L847.5,115.9" stroke="#c8c8c8" stroke-width="1.300" fill="none"/><path d="M842.500,119.500 L846.500,124.500 L849,122.300 L845.200,117.300Z" fill="#f0c060"/><path d="M845.200,117.300 L847.300,115.300 L851.800,120 L849,122.300Z" fill="#f4f4f4"/><path d="M966,58.5 H979 L983.5,63 V82 H966Z" fill="#7ab8ec"/><path d="M979,58.5 V63 H983.5Z" fill="#d8e8f8"/><rect x="952.5" y="69" width="20" height="14" fill="#7a7a7a" stroke="#c8c8c8" stroke-width="1.1"/><circle cx="972.5" cy="82.5" r="7" fill="#7a7a7a" fill-opacity=".7" stroke="#c8c8c8" stroke-width="1.1"/><rect x="951" y="81.5" width="3" height="3" fill="#e0e0e0"/><path d="M964.5,112.0 H970.5 L967.5,115.3Z" fill="#f0f0f0"/><path d="M992,66.5 H999.5 V74 H992Z" fill="#808080" stroke="#c8c8c8" stroke-width="1.1"/><circle cx="1002" cy="74" r="3.2" fill="#7a7a7a" stroke="#c8c8c8" stroke-width="1.1"/><rect x="990.5" y="73" width="2.4" height="2.4" fill="#e0e0e0"/><path d="M1003,60.5 L1004,63.5 L1007,62.5 L1005.3,65 L1007.5,67 L1004.4,67 L1003.8,70 L1002.3,67.3 L999.3,68 L1001,65.5 L999,63.3 L1002,63.6Z" fill="#f4b848"/><path d="M992,90.5 H999.5 V98 H992Z" fill="#808080" stroke="#c8c8c8" stroke-width="1.1"/><circle cx="1002" cy="98" r="3.2" fill="#7a7a7a" stroke="#c8c8c8" stroke-width="1.1"/><rect x="990.5" y="97" width="2.4" height="2.4" fill="#e0e0e0"/><path d="M1000,92 L1005,86.5 L1007.5,89 L1002.5,94.5 L999.5,95Z" fill="#f0c060"/><path d="M1005,86.5 L1006.3,85 L1008.8,87.5 L1007.5,89Z" fill="#e8584a"/><path d="M991.5,110.5 H999 L1006,117 L998.5,125 L991.5,118Z" fill="#d8d8d8"/><circle cx="994.5" cy="113.5" r="1.3" fill="#444"/><path d="M996,118 L998,120.5 L1002,116" stroke="#444" stroke-width="1.2" fill="none"/><path d="M1000,116 L1005,110.5 L1007.5,113 L1002.5,118.5 L999.5,119Z" fill="#f0c060"/><path d="M1005,110.5 L1006.3,109 L1008.8,111.5 L1007.5,113Z" fill="#e8584a"/><path d="M1094.5,115.5 H1100.5 L1097.5,118.8Z" fill="#f0f0f0"/><rect x="1124" y="60" width="19.5" height="27.5" fill="#dcdcdc"/><rect x="1127" y="63" width="12" height="9" fill="#7ab8ec" stroke="#4a94d0" stroke-width=".8"/><path d="M1127,78 H1139 M1127,83 H1136" stroke="#666" stroke-width="1"/><path d="M1132,75.5 V80.5 M1135.5,80.5 V85.5" stroke="#666" stroke-width="1.4"/><path d="M1139,83 L1147,77.5 L1152.5,85.5 L1146,91.5Z" fill="#f0c060"/><path d="M1144.5,79.5 L1150,76 L1154,82 L1150.5,84.5Z" fill="#f2f2f2"/><path d="M1179,68 L1171.27,65.93 A8,8 0 0 1 1176.93,60.27Z" fill="#58c860"/><path d="M1179,68 L1176.93,60.27 A8,8 0 0 1 1184.66,62.34Z" fill="#f0b060"/><path d="M1179,68 L1184.66,62.34 A8,8 0 0 1 1186.73,70.07Z" fill="#f08878"/><path d="M1179,68 L1186.73,70.07 A8,8 0 0 1 1181.07,75.73Z" fill="#f04848"/><path d="M1179,68 L1181.07,75.73 A8,8 0 0 1 1173.34,73.66Z" fill="#6060f0"/><path d="M1179,68 L1173.34,73.66 A8,8 0 0 1 1171.27,65.93Z" fill="#60b8e8"/><rect x="1171" y="83.900" width="16" height="1" fill="#dcdcdc"/><rect x="1171" y="87" width="16" height="1.800" fill="#dcdcdc"/><rect x="1171" y="91.200" width="16" height="2.600" fill="#dcdcdc"/><rect x="1171" y="96" width="16" height="3.600" fill="#dcdcdc"/><path d="M1171,109.5 H1187" stroke="#dcdcdc" stroke-width="1" stroke-dasharray="1 1"/><path d="M1171,113.5 H1187" stroke="#dcdcdc" stroke-width="1" stroke-dasharray="2 1"/><path d="M1171,117.5 H1187" stroke="#dcdcdc" stroke-width="1" stroke-dasharray="4 1.5"/><path d="M1171,121.5 H1187" stroke="#dcdcdc" stroke-width="1" stroke-dasharray="3 1 1 1"/><rect x="1202.5" y="61.5" width="15" height="15" fill="#050505" stroke="#b8a8a0" stroke-width="1"/><path d="M1193,91.5 H1257 M1193,115.5 H1257" stroke="#f0f0f0" stroke-width="1"/><path d="M1358.5,67 H1367 L1362.8,71.5Z" fill="#f0f0f0"/><path d="M1358.5,91 H1367 L1362.8,95.5Z" fill="#f0f0f0"/><path d="M1358.5,115 H1367 L1362.8,119.5Z" fill="#f0f0f0"/><path d="M1360.5,138.5 L1366.0,144.0 M1366.5,139.5 V144.5 H1361.5" stroke="#e8e8e8" stroke-width="1.2" fill="none"/><path d="M1668.5,138.5 L1674.0,144.0 M1674.5,139.5 V144.5 H1669.5" stroke="#e8e8e8" stroke-width="1.2" fill="none"/><path d="M1382,64.5 H1378 V90.5 H1382 M1393,90.5 H1398 V77" fill="none" stroke="#dcdcdc" stroke-width="1.6"/><rect x="1383" y="68" width="9" height="6.5" fill="none" stroke="#4fb3e8" stroke-width="2"/><circle cx="1387.5" cy="82.5" r="4.2" fill="#8a8a8a" stroke="#b8b8b8" stroke-width="1.6"/><path d="M1400,60 L1401.5,65 L1406.5,63 L1403.5,67.5 L1407.5,70 L1402.5,70.8 L1402,76 L1399.5,71.5 L1394.5,73.5 L1397.2,69 L1393,66 L1398,65.5Z" fill="#f4b848"/><path d="M1427.500,62 H1429.500 V76 H1427.500" fill="none" stroke="#dcdcdc" stroke-width="1"/><rect x="1420.500" y="64" width="5" height="4" fill="none" stroke="#4fb3e8" stroke-width="1.2"/><circle cx="1423" cy="72.500" r="2.3" fill="#888" stroke="#b8b8b8" stroke-width="1.2"/><path d="M1427.5,67 L1433,72.5 M1433,67 L1427.5,72.5" stroke="#e85050" stroke-width="1.6"/><path d="M1418,85.5 H1416 V99.5 H1418 M1425,85.5 H1427 V99.5 H1425" fill="none" stroke="#dcdcdc" stroke-width="1"/><rect x="1418" y="87.5" width="5" height="4" fill="none" stroke="#4fb3e8" stroke-width="1.2"/><circle cx="1420.5" cy="96.0" r="2.3" fill="none" stroke="#b8b8b8" stroke-width="1.2"/><path d="M1425,98 L1430,92.5 L1432.5,95 L1427.5,100.5 L1424.5,101Z" fill="#f0c060"/><path d="M1430,92.5 L1431.3,91 L1433.8,93.5 L1432.5,95Z" fill="#e8584a"/><path d="M1421,110 H1418.5 V123 H1421 M1427,110 H1429" fill="none" stroke="#e8e8e8" stroke-width="1.1"/><rect x="1420.5" y="111.5" width="4.5" height="3.5" fill="none" stroke="#58d058" stroke-width="1.2"/><circle cx="1423" cy="119.5" r="2.3" fill="none" stroke="#58d058" stroke-width="1.2"/><path d="M1427,113 V124.5 L1429.8,122 L1431.8,126 L1433.3,125.2 L1431.4,121.4 L1435,121Z" fill="#f4f4f4"/><rect x="1462.5" y="77" width="29" height="7" fill="#f0c050"/><path d="M1465.5,77 V80 M1468.5,77 V79 M1471.5,77 V80 M1474.5,77 V79 M1477.5,77 V80 M1480.5,77 V79 M1483.5,77 V80 M1486.5,77 V79 M1489.5,77 V80" stroke="#a87818" stroke-width=".8"/><path d="M1463.5,67.5 V76 M1490.5,67.5 V76 M1465,72.5 H1489" stroke="#dcdcdc" stroke-width="1"/><path d="M1464,72.5 L1468,70.5 V74.5Z M1490,72.5 L1486,70.5 V74.5Z" fill="#dcdcdc"/><path d="M1473.5,113.0 H1479.5 L1476.5,116.3Z" fill="#f0f0f0"/><path d="M1515,65.5 V76.5 L1517.8,74 L1519.8,78 L1521.3,77.2 L1519.4,73.4 L1523,73Z" fill="#f0f0f0"/><rect x="1522.5" y="69.5" width="8.5" height="7" fill="#e8e8e8"/><path d="M1524,71.5 H1530 M1524,73.5 H1530 M1524,75.3 H1530" stroke="#58a0d8" stroke-width=".9"/><path d="M1524.5,60.5 L1521,66 H1524 L1522.5,69.5 L1527.5,64.5 H1524.5 L1526.5,60.5Z" fill="#f4b848"/><rect x="1516" y="86.5" width="13" height="13" fill="none" stroke="#58c858" stroke-width="1.2" stroke-dasharray="1.6 1.2"/><path d="M1519,97 V89.5 H1523 V97 M1521,91 H1526 V95" fill="none" stroke="#58c858" stroke-width="1.3"/><path d="M1524,90.5 V101.5 L1526.6,99.2 L1528.5,103 L1530,102.2 L1528.2,98.6 L1531.5,98.3Z" fill="#f0f0f0"/><rect x="1517.5" y="110" width="11" height="14.5" fill="#d8d8d8"/><rect x="1519" y="111.5" width="8" height="3" fill="#666"/><rect x="1519" y="116.0" width="2" height="1.8" fill="#666"/><rect x="1522" y="116.0" width="2" height="1.8" fill="#666"/><rect x="1525" y="116.0" width="2" height="1.8" fill="#666"/><rect x="1519" y="118.8" width="2" height="1.8" fill="#666"/><rect x="1522" y="118.8" width="2" height="1.8" fill="#666"/><rect x="1525" y="118.8" width="2" height="1.8" fill="#666"/><rect x="1519" y="121.6" width="2" height="1.8" fill="#666"/><rect x="1522" y="121.6" width="2" height="1.8" fill="#666"/><rect x="1525" y="121.6" width="2" height="1.8" fill="#666"/><rect x="1552" y="63" width="22" height="25" fill="#e8b868"/><rect x="1559" y="60" width="9" height="4.5" rx="1" fill="#f0f0f0"/><path d="M1560.5,70 H1573 L1578,75 V92 H1560.5Z" fill="#e0e0e0"/><path d="M1573,70 V75 H1578Z" fill="#b8b8b8"/><path d="M1554.5,66 V86" stroke="#c89848" stroke-width="1" stroke-dasharray="1 2"/><path d="M1562.5,113.0 H1568.5 L1565.5,116.3Z" fill="#f0f0f0"/><rect x="1595.500" y="61.5" width="11" height="13" fill="#d4d4d4" stroke="#d0d0d0" stroke-width="1"/><path d="M1597.5,64.5 H1604.5 M1597.5,67.5 H1602 M1597.5,70.5 H1601" stroke="#666" stroke-width="1"/><path d="M1603,66.5 L1609,74.5 M1609,66.5 L1603,74.5" stroke="#e8e8e8" stroke-width="1.2"/><circle cx="1603" cy="75.5" r="1.6" fill="none" stroke="#e8e8e8"/><circle cx="1609" cy="75.5" r="1.6" fill="none" stroke="#e8e8e8"/><path d="M1596.500,85.500 H1602 L1604.5,88 V97.5 H1596.500Z" fill="#c0c0c0"/><path d="M1599.500,88.500 H1606 L1609,91.5 V100.5 H1599.500Z" fill="#dcdcdc" stroke="#555" stroke-width=".5"/><path d="M1633,64 H1647 V74 H1665 V88 H1633Z" fill="#e2e2e2"/><path d="M1646.5,113.0 H1652.5 L1649.5,116.3Z" fill="#f0f0f0"/></svg><div class="a" style="left:8px;top:152px;width:1901px;height:28px;background:#3a3a3a;"></div>
<div class="a" style="left:8px;top:180px;width:1901px;height:812px;background:#8b8b8b;"></div>
<svg width="1910" height="1026" viewBox="0 0 1910 1026"><defs><linearGradient id="tg" x1="0" y1="0" x2="0" y2="1"><stop offset="0" stop-color="#5d5d5d"/><stop offset="1" stop-color="#4b4b4b"/></linearGradient><linearGradient id="tga" x1="0" y1="0" x2="0" y2="1"><stop offset="0" stop-color="#959595"/><stop offset=".35" stop-color="#858585"/><stop offset="1" stop-color="#696969"/></linearGradient></defs><path d="M1495,177.5 C1503,177.5 1504,170 1506,166 C1508,160 1510,155.5 1516,155.5 H1620 C1625,155.5 1628,159 1628,164 V169 C1628,174 1625,177.5 1618,177.5Z" fill="url(#tg)" stroke="#333" stroke-width="0.8"/><path d="M1372,177.5 C1380,177.5 1381,170 1383,166 C1385,160 1387,155.5 1393,155.5 H1497 C1502,155.5 1505,159 1505,164 V169 C1505,174 1502,177.5 1495,177.5Z" fill="url(#tg)" stroke="#333" stroke-width="0.8"/><path d="M1249,177.5 C1257,177.5 1258,170 1260,166 C1262,160 1264,155.5 1270,155.5 H1374 C1379,155.5 1382,159 1382,164 V169 C1382,174 1379,177.5 1372,177.5Z" fill="url(#tg)" stroke="#333" stroke-width="0.8"/><path d="M1126,177.5 C1134,177.5 1135,170 1137,166 C1139,160 1141,155.5 1147,155.5 H1251 C1256,155.5 1259,159 1259,164 V169 C1259,174 1256,177.5 1249,177.5Z" fill="url(#tg)" stroke="#333" stroke-width="0.8"/><path d="M1003,177.5 C1011,177.5 1012,170 1014,166 C1016,160 1018,155.5 1024,155.5 H1128 C1133,155.5 1136,159 1136,164 V169 C1136,174 1133,177.5 1126,177.5Z" fill="url(#tg)" stroke="#333" stroke-width="0.8"/><path d="M880,177.5 C888,177.5 889,170 891,166 C893,160 895,155.5 901,155.5 H1005 C1010,155.5 1013,159 1013,164 V169 C1013,174 1010,177.5 1003,177.5Z" fill="url(#tg)" stroke="#333" stroke-width="0.8"/><path d="M757,177.5 C765,177.5 766,170 768,166 C770,160 772,155.5 778,155.5 H882 C887,155.5 890,159 890,164 V169 C890,174 887,177.5 880,177.5Z" fill="url(#tg)" stroke="#333" stroke-width="0.8"/><path d="M634,177.5 C642,177.5 643,170 645,166 C647,160 649,155.5 655,155.5 H759 C764,155.5 767,159 767,164 V169 C767,174 764,177.5 757,177.5Z" fill="url(#tg)" stroke="#333" stroke-width="0.8"/><path d="M511,177.5 C519,177.5 520,170 522,166 C524,160 526,155.5 532,155.5 H636 C641,155.5 644,159 644,164 V169 C644,174 641,177.5 634,177.5Z" fill="url(#tg)" stroke="#333" stroke-width="0.8"/><path d="M388,177.5 C396,177.5 397,170 399,166 C401,160 403,155.5 409,155.5 H513 C518,155.5 521,159 521,164 V169 C521,174 518,177.5 511,177.5Z" fill="url(#tg)" stroke="#333" stroke-width="0.8"/><path d="M265,177.5 C273,177.5 274,170 276,166 C278,160 280,155.5 286,155.5 H390 C395,155.5 398,159 398,164 V169 C398,174 395,177.5 388,177.5Z" fill="url(#tg)" stroke="#333" stroke-width="0.8"/><path d="M142,177.5 C150,177.5 151,170 153,166 C155,160 157,155.5 163,155.5 H267 C272,155.5 275,159 275,164 V169 C275,174 272,177.5 265,177.5Z" fill="url(#tg)" stroke="#333" stroke-width="0.8"/><path d="M19,177.5 C27,177.5 28,170 30,166 C32,160 34,155.5 40,155.5 H144 C149,155.5 152,159 152,164 V169 C152,174 149,177.5 142,177.5Z" fill="url(#tg)" stroke="#333" stroke-width="0.8"/><path d="M1616,180.5 C1626,180.5 1627,172 1629,166 C1631,160 1633,155.5 1639,155.5 H1741 C1749,155.5 1750,160 1752,166 C1754,172 1756,180.5 1765,180.5 V180.5 H1616Z" fill="url(#tga)"/><path d="M1757,160.5 H1774 C1779,160.5 1781,165 1782,174 H1768 C1763,174 1760,168 1757,160.5Z" fill="#555"/><path d="M1765.500,167 H1773.500 M1769.500,163 V171" stroke="#e8e8e8" stroke-width="1.6"/><path d="M1889.500,160 L1893.500,164 L1897.500,160 M1889.500,165 L1893.500,169 L1897.500,165" stroke="#d8d8d8" stroke-width="1.6" fill="none"/><path d="M256,163.500 L262,169.500 M262,163.500 L256,169.500" stroke="#333" stroke-width="1.6"/><path d="M379,163.500 L385,169.500 M385,163.500 L379,169.500" stroke="#333" stroke-width="1.6"/><path d="M502,163.500 L508,169.500 M508,163.500 L502,169.500" stroke="#333" stroke-width="1.6"/><path d="M625,163.500 L631,169.500 M631,163.500 L625,169.500" stroke="#333" stroke-width="1.6"/><path d="M748,163.500 L754,169.500 M754,163.500 L748,169.500" stroke="#333" stroke-width="1.6"/><path d="M871,163.500 L877,169.500 M877,163.500 L871,169.500" stroke="#333" stroke-width="1.6"/><path d="M994,163.500 L1000,169.500 M1000,163.500 L994,169.500" stroke="#333" stroke-width="1.6"/><path d="M1117,163.500 L1123,169.500 M1123,163.500 L1117,169.500" stroke="#333" stroke-width="1.6"/><path d="M1240,163.500 L1246,169.500 M1246,163.500 L1240,169.500" stroke="#333" stroke-width="1.6"/><path d="M1363,163.500 L1369,169.500 M1369,163.500 L1363,169.500" stroke="#333" stroke-width="1.6"/><path d="M1486,163.500 L1492,169.500 M1492,163.500 L1486,169.500" stroke="#333" stroke-width="1.6"/><path d="M1609,163.500 L1615,169.500 M1615,163.500 L1609,169.500" stroke="#333" stroke-width="1.6"/><path d="M1732,163.500 L1738,169.500 M1738,163.500 L1732,169.500" stroke="#505050" stroke-width="1.6"/><rect x="202" y="191.5" width="1122.5" height="791.5" fill="#a6a6a6"/><rect x="203" y="192.5" width="1120.5" height="789.5" fill="#ffffff"/><rect x="172.5" y="186.5" width="1122.5" height="801.5" fill="none" stroke="#8c3838" stroke-width="0.9" stroke-dasharray="2 1.3"/><rect x="212.5" y="201.5" width="1066" height="771.5" fill="none" stroke="#949494" stroke-width="1.4" stroke-dasharray="4.1 1.9"/><g stroke="#1a1aff" stroke-width="1.15" fill="none"><rect x="212.600" y="206.400" width="1062" height="762"/><path d="M212.600,224.500 H1141 M1141,206.400 V968.400 M1141,216.500 H1274.600"/></g><path d="M219.200,218 L222.800,211.800 H230.200 L233.800,218 L230.200,224.200 H222.800Z M219.200,218 H233.800" fill="none" stroke="#ff2020" stroke-width="1"/></svg><div class="t" style="left:39.6px;top:159.83px;font-size:12px;line-height:14px;color:#c2c2c2;">Start</div>
<div class="t" style="left:162.6px;top:159.83px;font-size:12px;line-height:14px;color:#c2c2c2;letter-spacing:-0.495px;">A4302*</div>
<div class="t" style="left:285.6px;top:159.83px;font-size:12px;line-height:14px;color:#c2c2c2;letter-spacing:-0.495px;">A4303*</div>
<div class="t" style="left:408.6px;top:159.83px;font-size:12px;line-height:14px;color:#c2c2c2;letter-spacing:-0.495px;">A4401*</div>
<div class="t" style="left:531.6px;top:159.83px;font-size:12px;line-height:14px;color:#c2c2c2;letter-spacing:-0.495px;">A4402*</div>
<div class="t" style="left:654.6px;top:159.83px;font-size:12px;line-height:14px;color:#c2c2c2;letter-spacing:-0.495px;">A4403*</div>
<div class="t" style="left:777.6px;top:159.83px;font-size:12px;line-height:14px;color:#c2c2c2;letter-spacing:-0.495px;">A5101*</div>
<div class="t" style="left:900.6px;top:159.83px;font-size:12px;line-height:14px;color:#c2c2c2;letter-spacing:-0.495px;">A5102*</div>
<div class="t" style="left:1023.6px;top:159.83px;font-size:12px;line-height:14px;color:#c2c2c2;letter-spacing:-0.495px;">A5201*</div>
<div class="t" style="left:1146.6px;top:159.83px;font-size:12px;line-height:14px;color:#c2c2c2;letter-spacing:-0.495px;">A5202*</div>
<div class="t" style="left:1269.6px;top:159.83px;font-size:12px;line-height:14px;color:#c2c2c2;letter-spacing:-0.495px;">A5303*</div>
<div class="t" style="left:1392.6px;top:159.83px;font-size:12px;line-height:14px;color:#c2c2c2;letter-spacing:-0.495px;">A5304*</div>
<div class="t" style="left:1515.6px;top:159.83px;font-size:12px;line-height:14px;color:#c2c2c2;letter-spacing:-0.495px;">A5305*</div>
<div class="t" style="left:1638.6px;top:159.83px;font-size:12px;line-height:14px;color:#ffffff;">A5306</div>
<svg width="1910" height="1026" viewBox="0 0 1910 1026"><path d="M464.91,362.11 L464.91,434.39" fill="none" stroke="#7a7a7a" stroke-width="1" /><path d="M471.23,362.11 L471.23,434.39" fill="none" stroke="#7a7a7a" stroke-width="1" /><path d="M461.93,362.11 L473.33,362.11" fill="none" stroke="#7a7a7a" stroke-width="1" /><path d="M461.93,434.39 L473.33,434.39" fill="none" stroke="#7a7a7a" stroke-width="1" /><path d="M468.07,384.56 L478.6,384.56" fill="none" stroke="#7a7a7a" stroke-width="1" /><path d="M558.07,362.11 L558.07,434.39" fill="none" stroke="#7a7a7a" stroke-width="1" /><path d="M554.39,362.11 L560.7,362.11" fill="none" stroke="#7a7a7a" stroke-width="1" /><path d="M554.39,434.39 L560.7,434.39" fill="none" stroke="#7a7a7a" stroke-width="1" /><path d="M554.39,377.89 L560.7,377.89" fill="none" stroke="#7a7a7a" stroke-width="1" /><path d="M474.21,439.3 L553.16,439.3" fill="none" stroke="#7a7a7a" stroke-width="1" /><path d="M476.49,452.46 L553.16,452.46" fill="none" stroke="#7a7a7a" stroke-width="1" /><path d="M476.49,434.39 L476.49,442.81" fill="none" stroke="#7a7a7a" stroke-width="1" /><path d="M478.6,434.39 L478.6,442.81" fill="none" stroke="#7a7a7a" stroke-width="1" /><path d="M498.42,434.39 L498.42,442.81" fill="none" stroke="#7a7a7a" stroke-width="1" /><path d="M502.28,434.39 L502.28,442.81" fill="none" stroke="#7a7a7a" stroke-width="1" /><path d="M522.46,434.39 L522.46,442.81" fill="none" stroke="#7a7a7a" stroke-width="1" /><path d="M528.07,434.39 L528.07,442.81" fill="none" stroke="#7a7a7a" stroke-width="1" /><path d="M552.63,434.39 L552.63,442.81" fill="none" stroke="#7a7a7a" stroke-width="1" /><path d="M476.49,442.81 L476.49,455.44" fill="none" stroke="#7a7a7a" stroke-width="1" /><path d="M552.63,442.81 L552.63,455.44" fill="none" stroke="#7a7a7a" stroke-width="1" /><path d="M476.49,362.98 L476.49,432.28" fill="none" stroke="#f4f400" stroke-width="1.2" /><path d="M524.21,362.98 L524.21,432.28" fill="none" stroke="#f4f400" stroke-width="1.2" /><path d="M528.6,362.98 L528.6,432.28" fill="none" stroke="#f4f400" stroke-width="1.2" /><path d="M552.28,362.98 L552.28,432.28" fill="none" stroke="#f4f400" stroke-width="1.2" /><path d="M476.49,362.11 L552.28,362.11" fill="none" stroke="#e23cf2" stroke-width="1.6" /><path d="M476.49,363.16 L552.28,363.16" fill="none" stroke="#8f4a44" stroke-width="1" /><path d="M476.49,384.56 L529.12,384.56" fill="none" stroke="#8f4a44" stroke-width="1.4" /><rect x="479.47" y="386.32" width="17.54" height="44.56" fill="none" stroke="#00f0f0" stroke-width="1.3" /><rect x="480.53" y="387.37" width="15.44" height="42.46" fill="none" stroke="#00f0f0" stroke-width="0.8" /><rect x="482.98" y="389.3" width="9.65" height="36.84" fill="none" stroke="#00f0f0" stroke-width="1.3" /><rect x="484.04" y="390.53" width="7.54" height="34.39" fill="none" stroke="#00f0f0" stroke-width="0.8" /><rect x="504.04" y="386.32" width="17.54" height="44.56" fill="none" stroke="#00f0f0" stroke-width="1.3" /><rect x="505.09" y="387.37" width="15.44" height="42.46" fill="none" stroke="#00f0f0" stroke-width="0.8" /><rect x="507.54" y="389.3" width="9.65" height="36.84" fill="none" stroke="#00f0f0" stroke-width="1.3" /><rect x="508.6" y="390.53" width="7.54" height="34.39" fill="none" stroke="#00f0f0" stroke-width="0.8" /><path d="M476.49,394.56 L478.95,394.56" fill="none" stroke="#a04a38" stroke-width="1.2" /><path d="M497.89,394.56 L503.16,394.56" fill="none" stroke="#a04a38" stroke-width="1.2" /><path d="M522.46,394.56 L528.07,394.56" fill="none" stroke="#a04a38" stroke-width="1.2" /><path d="M476.49,402.46 L478.95,402.46" fill="none" stroke="#a04a38" stroke-width="1.2" /><path d="M497.89,402.46 L503.16,402.46" fill="none" stroke="#a04a38" stroke-width="1.2" /><path d="M522.46,402.46 L528.07,402.46" fill="none" stroke="#a04a38" stroke-width="1.2" /><path d="M476.49,410.35 L478.95,410.35" fill="none" stroke="#a04a38" stroke-width="1.2" /><path d="M497.89,410.35 L503.16,410.35" fill="none" stroke="#a04a38" stroke-width="1.2" /><path d="M522.46,410.35 L528.07,410.35" fill="none" stroke="#a04a38" stroke-width="1.2" /><path d="M476.49,418.25 L478.95,418.25" fill="none" stroke="#a04a38" stroke-width="1.2" /><path d="M497.89,418.25 L503.16,418.25" fill="none" stroke="#a04a38" stroke-width="1.2" /><path d="M522.46,418.25 L528.07,418.25" fill="none" stroke="#a04a38" stroke-width="1.2" /><path d="M476.49,426.14 L478.95,426.14" fill="none" stroke="#a04a38" stroke-width="1.2" /><path d="M497.89,426.14 L503.16,426.14" fill="none" stroke="#a04a38" stroke-width="1.2" /><path d="M522.46,426.14 L528.07,426.14" fill="none" stroke="#a04a38" stroke-width="1.2" /><circle cx="495.26" cy="410.35" r="1.58" fill="#e23cf2" stroke="#e23cf2" stroke-width="1.5"/><circle cx="519.3" cy="410.35" r="1.58" fill="#e23cf2" stroke="#e23cf2" stroke-width="1.5"/><circle cx="531.58" cy="410.35" r="1.58" fill="#e23cf2" stroke="#e23cf2" stroke-width="1.5"/><rect x="530.35" y="380.53" width="20.18" height="51.75" fill="none" stroke="#00f0f0" stroke-width="1.2" /><rect x="532.46" y="382.28" width="16.32" height="27.19" fill="#6878a0" stroke="#ff2222" stroke-width="1.5" /><rect x="532.46" y="411.23" width="16.32" height="20.18" fill="#6878a0" stroke="#a04848" stroke-width="1" /><path d="M532.98,384.04 L548.42,384.04" fill="none" stroke="#9aa8c8" stroke-width="0.7" /><path d="M532.98,386.49 L548.42,386.49" fill="none" stroke="#9aa8c8" stroke-width="0.7" /><path d="M532.98,388.95 L548.42,388.95" fill="none" stroke="#9aa8c8" stroke-width="0.7" /><path d="M532.98,391.4 L548.42,391.4" fill="none" stroke="#9aa8c8" stroke-width="0.7" /><path d="M532.98,393.86 L548.42,393.86" fill="none" stroke="#9aa8c8" stroke-width="0.7" /><path d="M532.98,396.32 L548.42,396.32" fill="none" stroke="#9aa8c8" stroke-width="0.7" /><path d="M532.98,398.77 L548.42,398.77" fill="none" stroke="#9aa8c8" stroke-width="0.7" /><path d="M532.98,401.23 L548.42,401.23" fill="none" stroke="#9aa8c8" stroke-width="0.7" /><path d="M532.98,403.68 L548.42,403.68" fill="none" stroke="#9aa8c8" stroke-width="0.7" /><path d="M532.98,406.14 L548.42,406.14" fill="none" stroke="#9aa8c8" stroke-width="0.7" /><path d="M532.98,408.6 L548.42,408.6" fill="none" stroke="#9aa8c8" stroke-width="0.7" /><path d="M532.98,412.98 L548.42,412.98" fill="none" stroke="#9aa8c8" stroke-width="0.7" /><path d="M532.98,415.44 L548.42,415.44" fill="none" stroke="#9aa8c8" stroke-width="0.7" /><path d="M532.98,417.89 L548.42,417.89" fill="none" stroke="#9aa8c8" stroke-width="0.7" /><path d="M532.98,420.35 L548.42,420.35" fill="none" stroke="#9aa8c8" stroke-width="0.7" /><path d="M532.98,422.81 L548.42,422.81" fill="none" stroke="#9aa8c8" stroke-width="0.7" /><path d="M532.98,425.26 L548.42,425.26" fill="none" stroke="#9aa8c8" stroke-width="0.7" /><path d="M532.98,427.72 L548.42,427.72" fill="none" stroke="#9aa8c8" stroke-width="0.7" /><path d="M532.98,430.18 L548.42,430.18" fill="none" stroke="#9aa8c8" stroke-width="0.7" /><path d="M530.35,377.89 L550.53,377.89" fill="none" stroke="#00f0f0" stroke-width="1.2" /><path d="M476.49,432.28 L552.28,432.28" fill="none" stroke="#222" stroke-width="1.6" /><path d="M476.49,431.23 L552.28,431.23" fill="none" stroke="#e23cf2" stroke-width="1.4" /><path d="M479.47,430.88 L497.02,433.68" fill="none" stroke="#333" stroke-width="0.8" /><path d="M479.47,433.68 L497.02,430.88" fill="none" stroke="#333" stroke-width="0.8" /><path d="M504.04,430.88 L521.58,433.68" fill="none" stroke="#333" stroke-width="0.8" /><path d="M504.04,433.68 L521.58,430.88" fill="none" stroke="#333" stroke-width="0.8" /><text x="470.18" y="374.39" font-family="Liberation Sans,sans-serif" font-size="4" fill="#00f0f0" text-anchor="middle" font-weight="bold" transform="rotate(-90 470.18 374.39)">600</text><text x="470.18" y="410.35" font-family="Liberation Sans,sans-serif" font-size="4" fill="#00f0f0" text-anchor="middle" font-weight="bold" transform="rotate(-90 470.18 410.35)">2100</text><text x="463.68" y="398.07" font-family="Liberation Sans,sans-serif" font-size="4" fill="#00f0f0" text-anchor="middle" font-weight="bold" transform="rotate(-90 463.68 398.07)">2700</text><text x="556.14" y="406.84" font-family="Liberation Sans,sans-serif" font-size="4" fill="#00f0f0" text-anchor="middle" font-weight="bold" transform="rotate(-90 556.14 406.84)">2100</text><text x="556.14" y="370.0" font-family="Liberation Sans,sans-serif" font-size="4" fill="#00f0f0" text-anchor="middle" font-weight="bold" transform="rotate(-90 556.14 370.0)">300</text><text x="488.25" y="438.42" font-family="Liberation Sans,sans-serif" font-size="4" fill="#00f0f0" text-anchor="middle" font-weight="bold">750</text><text x="512.81" y="438.42" font-family="Liberation Sans,sans-serif" font-size="4" fill="#00f0f0" text-anchor="middle" font-weight="bold">750</text><text x="540.88" y="438.42" font-family="Liberation Sans,sans-serif" font-size="4" fill="#00f0f0" text-anchor="middle" font-weight="bold">900</text><text x="478.07" y="449.47" font-family="Liberation Sans,sans-serif" font-size="4" fill="#00f0f0" text-anchor="middle" font-weight="bold">42</text><text x="500.53" y="449.47" font-family="Liberation Sans,sans-serif" font-size="4" fill="#00f0f0" text-anchor="middle" font-weight="bold">150</text><text x="525.61" y="449.47" font-family="Liberation Sans,sans-serif" font-size="4" fill="#00f0f0" text-anchor="middle" font-weight="bold">265</text><text x="514.56" y="451.58" font-family="Liberation Sans,sans-serif" font-size="4" fill="#00f0f0" text-anchor="middle" font-weight="bold">3150</text><path d="M492.63,347.54 L485.96,347.54 L477.19,362.11" fill="none" stroke="#8f4a44" stroke-width="1.1" /><path d="M519.3,342.81 L514.56,342.81 L503.68,362.11" fill="none" stroke="#8f4a44" stroke-width="1.1" /><path d="M525.09,352.98 L516.32,352.98 L501.4,375.79" fill="none" stroke="#8f4a44" stroke-width="1.1" /><path d="M561.93,371.75 L533.86,371.75 L525.61,385.26" fill="none" stroke="#8f4a44" stroke-width="1.1" /><path d="M563.16,382.46 L539.12,382.46 L525.61,403.86" fill="none" stroke="#8f4a44" stroke-width="1.1" /><path d="M547.54,458.77 L541.75,458.77 L527.37,434.04" fill="none" stroke="#8f4a44" stroke-width="1.1" /><circle cx="477.19" cy="362.11" r="1.1" fill="#00f0f0"/><circle cx="503.68" cy="362.11" r="1.1" fill="#00f0f0"/><circle cx="501.4" cy="375.79" r="1.1" fill="#00f0f0"/><circle cx="525.61" cy="385.26" r="1.1" fill="#00f0f0"/><circle cx="525.61" cy="403.86" r="1.1" fill="#00f0f0"/><circle cx="527.37" cy="434.04" r="1.1" fill="#00f0f0"/><rect x="492.63" y="344.91" width="13.68" height="5.79" fill="#fff" stroke="#ff2222" stroke-width="1.1" /><text x="499.47" y="349.43" font-family="Liberation Sans,sans-serif" font-size="4.92" fill="#00f0f0" text-anchor="middle" font-weight="bold">WCS</text><rect x="519.3" y="340.18" width="13.68" height="5.61" fill="#fff" stroke="#ff2222" stroke-width="1.1" /><text x="526.14" y="344.55" font-family="Liberation Sans,sans-serif" font-size="4.77" fill="#00f0f0" text-anchor="middle" font-weight="bold">WPC</text><rect x="535.26" y="340.18" width="13.51" height="5.61" fill="#fff" stroke="#ff2222" stroke-width="1.1" /><text x="542.02" y="344.55" font-family="Liberation Sans,sans-serif" font-size="4.77" fill="#00f0f0" text-anchor="middle" font-weight="bold">ARP</text><rect x="525.09" y="350.18" width="13.51" height="5.79" fill="#fff" stroke="#ff2222" stroke-width="1.1" /><text x="531.84" y="354.69" font-family="Liberation Sans,sans-serif" font-size="4.92" fill="#00f0f0" text-anchor="middle" font-weight="bold">ARP</text><rect x="563.16" y="379.65" width="13.68" height="5.79" fill="#fff" stroke="#ff2222" stroke-width="1.1" /><text x="570.0" y="384.16" font-family="Liberation Sans,sans-serif" font-size="4.92" fill="#00f0f0" text-anchor="middle" font-weight="bold">CS</text><rect x="547.54" y="455.96" width="14.04" height="5.61" fill="#fff" stroke="#ff2222" stroke-width="1.1" /><text x="554.56" y="460.34" font-family="Liberation Sans,sans-serif" font-size="4.77" fill="#00f0f0" text-anchor="middle" font-weight="bold">ST</text><circle cx="534.21" cy="342.98" r="0.9" fill="#00f0f0"/><text x="561.93" y="373.16" font-family="Liberation Sans,sans-serif" font-size="4.2" fill="#00f0f0" text-anchor="start" font-weight="bold">BULLNOSE  ST  5 CM</text><path d="M512.98,459.47 L518.77,469.12 L507.19,469.12Z" fill="#fff" stroke="#ff2222" stroke-width="1.2"/><text x="512.98" y="467.96" font-family="Liberation Sans,sans-serif" font-size="5.98" fill="#111" text-anchor="middle" font-weight="bold">1</text><path d="M433.33,529.47 L433.33,602.28" fill="none" stroke="#7a7a7a" stroke-width="1" /><path d="M430.18,529.47 L435.09,529.47" fill="none" stroke="#7a7a7a" stroke-width="1" /><path d="M430.18,601.75 L435.09,601.75" fill="none" stroke="#7a7a7a" stroke-width="1" /><path d="M569.3,529.47 L569.3,602.28" fill="none" stroke="#7a7a7a" stroke-width="1" /><path d="M565.79,529.47 L571.93,529.47" fill="none" stroke="#7a7a7a" stroke-width="1" /><path d="M565.79,553.51 L571.93,553.51" fill="none" stroke="#7a7a7a" stroke-width="1" /><path d="M565.79,566.84 L571.93,566.84" fill="none" stroke="#7a7a7a" stroke-width="1" /><path d="M565.79,601.58 L571.93,601.58" fill="none" stroke="#7a7a7a" stroke-width="1" /><path d="M435.96,607.19 L564.91,607.19" fill="none" stroke="#7a7a7a" stroke-width="1" /><path d="M435.96,620.7 L561.05,620.7" fill="none" stroke="#7a7a7a" stroke-width="1" /><path d="M437.19,602.28 L437.19,610.18" fill="none" stroke="#7a7a7a" stroke-width="1" /><path d="M478.6,602.28 L478.6,610.18" fill="none" stroke="#7a7a7a" stroke-width="1" /><path d="M481.05,602.28 L481.05,610.18" fill="none" stroke="#7a7a7a" stroke-width="1" /><path d="M482.81,602.28 L482.81,610.18" fill="none" stroke="#7a7a7a" stroke-width="1" /><path d="M547.02,602.28 L547.02,610.18" fill="none" stroke="#7a7a7a" stroke-width="1" /><path d="M560.53,602.28 L560.53,610.18" fill="none" stroke="#7a7a7a" stroke-width="1" /><path d="M563.16,602.28 L563.16,610.18" fill="none" stroke="#7a7a7a" stroke-width="1" /><path d="M437.19,610.18 L437.19,623.68" fill="none" stroke="#7a7a7a" stroke-width="1" /><path d="M560.53,610.18 L560.53,623.68" fill="none" stroke="#7a7a7a" stroke-width="1" /><path d="M438.25,552.28 L438.25,599.65" fill="none" stroke="#a04a38" stroke-width="1.1" /><path d="M446.32,552.28 L446.32,599.65" fill="none" stroke="#a04a38" stroke-width="1.1" /><path d="M454.39,552.28 L454.39,599.65" fill="none" stroke="#a04a38" stroke-width="1.1" /><path d="M462.63,552.28 L462.63,599.65" fill="none" stroke="#a04a38" stroke-width="1.1" /><path d="M470.7,552.28 L470.7,599.65" fill="none" stroke="#a04a38" stroke-width="1.1" /><path d="M486.84,552.28 L486.84,599.65" fill="none" stroke="#a04a38" stroke-width="1.1" /><path d="M494.74,552.28 L494.74,599.65" fill="none" stroke="#a04a38" stroke-width="1.1" /><path d="M502.63,552.28 L502.63,599.65" fill="none" stroke="#a04a38" stroke-width="1.1" /><path d="M510.53,552.28 L510.53,599.65" fill="none" stroke="#a04a38" stroke-width="1.1" /><path d="M518.77,552.28 L518.77,599.65" fill="none" stroke="#a04a38" stroke-width="1.1" /><path d="M526.67,552.28 L526.67,599.65" fill="none" stroke="#a04a38" stroke-width="1.1" /><path d="M534.74,552.28 L534.74,599.65" fill="none" stroke="#a04a38" stroke-width="1.1" /><path d="M542.81,552.28 L542.81,599.65" fill="none" stroke="#a04a38" stroke-width="1.1" /><path d="M550.88,552.28 L550.88,599.65" fill="none" stroke="#a04a38" stroke-width="1.1" /><path d="M558.77,552.28 L558.77,599.65" fill="none" stroke="#a04a38" stroke-width="1.1" /><path d="M437.19,560.18 L560.53,560.18" fill="none" stroke="#a04a38" stroke-width="1.1" /><path d="M437.19,568.07 L560.53,568.07" fill="none" stroke="#a04a38" stroke-width="1.1" /><path d="M437.19,576.32 L560.53,576.32" fill="none" stroke="#a04a38" stroke-width="1.1" /><path d="M437.19,584.39 L560.53,584.39" fill="none" stroke="#a04a38" stroke-width="1.1" /><path d="M437.19,592.63 L560.53,592.63" fill="none" stroke="#a04a38" stroke-width="1.1" /><path d="M437.19,552.28 L563.51,552.28" fill="none" stroke="#a04a38" stroke-width="1.8" /><path d="M437.19,530.7 L437.19,600.18" fill="none" stroke="#f4f400" stroke-width="1.2" /><path d="M482.81,530.7 L482.81,600.18" fill="none" stroke="#f4f400" stroke-width="1.2" /><path d="M547.02,530.7 L547.02,600.18" fill="none" stroke="#f4f400" stroke-width="1.2" /><path d="M562.81,530.7 L562.81,566.84 L560.53,568.07 L560.53,600.18" fill="none" stroke="#f4f400" stroke-width="1.2" /><path d="M437.19,530.0 L563.51,530.0" fill="none" stroke="#e23cf2" stroke-width="1.8" /><path d="M438.25,531.23 L563.51,531.23" fill="none" stroke="#8f4a44" stroke-width="1" /><rect x="478.25" y="553.51" width="2.46" height="45.26" fill="#e23cf2" stroke="#e23cf2" stroke-width="1" /><path d="M454.39,599.47 L560.53,599.47" fill="none" stroke="#e23cf2" stroke-width="2" /><path d="M439.47,601.23 L560.53,601.23" fill="none" stroke="#222" stroke-width="1.6" /><path d="M462.28,597.37 L478.07,597.37" fill="none" stroke="#ff2222" stroke-width="1" /><path d="M514.91,597.37 L530.7,597.37" fill="none" stroke="#ff2222" stroke-width="1" /><text x="471.05" y="596.32" font-family="Liberation Sans,sans-serif" font-size="3.4" fill="#00f0f0" text-anchor="middle" >+0.00</text><text x="522.81" y="596.32" font-family="Liberation Sans,sans-serif" font-size="3.4" fill="#00f0f0" text-anchor="middle" >+0.00</text><path d="M472.28,555.26 L479.3,555.26" fill="none" stroke="#00f0f0" stroke-width="1.2" /><path d="M475.79,555.26 L475.79,560.53" fill="none" stroke="#00f0f0" stroke-width="1.2" /><path d="M482.81,555.26 L489.82,555.26" fill="none" stroke="#00f0f0" stroke-width="1.2" /><path d="M486.32,555.26 L486.32,560.53" fill="none" stroke="#00f0f0" stroke-width="1.2" /><path d="M438.95,586.49 L438.95,600.88 L452.63,600.88 L452.63,595.26" fill="none" stroke="#20e020" stroke-width="1.3" /><ellipse cx="448.25" cy="593.51" rx="7.37" ry="2.46" fill="none" stroke="#20e020" stroke-width="1.4"/><path d="M441.23,588.25 L443.86,596.14 L452.63,597.37" fill="none" stroke="#20e020" stroke-width="1.3" /><circle cx="440.0" cy="586.49" r="1.05" fill="none" stroke="#20e020" stroke-width="1.2"/><path d="M442.11,590.88 L457.02,590.88" fill="none" stroke="#20e020" stroke-width="1.2" /><path d="M556.67,570.7 L556.67,576.84 L554.74,581.23 L554.74,588.25 L560.0,592.63 L560.0,570.7" fill="none" stroke="#20e020" stroke-width="1.4" /><rect x="557.37" y="571.05" width="2.28" height="4.91" fill="#20e020" stroke="#20e020" stroke-width="1.2" /><path d="M550.88,587.37 L558.77,590.88" fill="none" stroke="#20e020" stroke-width="1.4" /><rect x="538.95" y="569.82" width="5.61" height="5.61" fill="none" stroke="#20e020" stroke-width="1.4" /><rect x="540.35" y="571.23" width="2.81" height="2.81" fill="#8f8" stroke="#20e020" stroke-width="1" /><text x="430.7" y="565.44" font-family="Liberation Sans,sans-serif" font-size="4" fill="#00f0f0" text-anchor="middle" font-weight="bold" transform="rotate(-90 430.7 565.44)">2700</text><text x="567.02" y="541.75" font-family="Liberation Sans,sans-serif" font-size="4" fill="#00f0f0" text-anchor="middle" font-weight="bold" transform="rotate(-90 567.02 541.75)">600</text><text x="567.02" y="559.3" font-family="Liberation Sans,sans-serif" font-size="4" fill="#00f0f0" text-anchor="middle" font-weight="bold" transform="rotate(-90 567.02 559.3)">300</text><text x="567.02" y="583.86" font-family="Liberation Sans,sans-serif" font-size="4" fill="#00f0f0" text-anchor="middle" font-weight="bold" transform="rotate(-90 567.02 583.86)">1800</text><text x="457.89" y="605.79" font-family="Liberation Sans,sans-serif" font-size="4" fill="#00f0f0" text-anchor="middle" font-weight="bold">1040</text><text x="514.91" y="605.79" font-family="Liberation Sans,sans-serif" font-size="4" fill="#00f0f0" text-anchor="middle" font-weight="bold">3000</text><text x="553.51" y="605.79" font-family="Liberation Sans,sans-serif" font-size="4" fill="#00f0f0" text-anchor="middle" font-weight="bold">520</text><text x="480.7" y="617.19" font-family="Liberation Sans,sans-serif" font-size="4" fill="#00f0f0" text-anchor="middle" font-weight="bold">150</text><text x="498.25" y="619.47" font-family="Liberation Sans,sans-serif" font-size="4" fill="#00f0f0" text-anchor="middle" font-weight="bold">4950</text><text x="561.75" y="617.19" font-family="Liberation Sans,sans-serif" font-size="4" fill="#00f0f0" text-anchor="middle" font-weight="bold">100</text><path d="M453.16,514.91 L446.49,514.91 L437.89,530.0" fill="none" stroke="#8f4a44" stroke-width="1.1" /><path d="M486.49,510.53 L481.58,510.53 L470.18,528.95" fill="none" stroke="#8f4a44" stroke-width="1.1" /><path d="M542.11,511.05 L529.82,511.05 L504.91,551.4" fill="none" stroke="#8f4a44" stroke-width="1.1" /><path d="M542.98,517.54 L530.7,517.54 L500.88,568.95" fill="none" stroke="#8f4a44" stroke-width="1.1" /><path d="M574.21,518.07 L564.91,518.07 L552.63,539.47" fill="none" stroke="#8f4a44" stroke-width="1.1" /><path d="M574.21,562.28 L549.12,562.28 L542.98,571.05" fill="none" stroke="#8f4a44" stroke-width="1.1" /><path d="M527.54,624.56 L519.82,624.56 L504.39,600.88" fill="none" stroke="#8f4a44" stroke-width="1.1" /><circle cx="437.89" cy="530.0" r="1.1" fill="#00f0f0"/><circle cx="470.18" cy="528.95" r="1.1" fill="#00f0f0"/><circle cx="504.91" cy="551.4" r="1.1" fill="#00f0f0"/><circle cx="500.88" cy="568.95" r="1.1" fill="#00f0f0"/><circle cx="552.63" cy="539.47" r="1.1" fill="#00f0f0"/><circle cx="504.39" cy="600.88" r="1.1" fill="#00f0f0"/><rect x="453.16" y="512.28" width="13.51" height="5.44" fill="#fff" stroke="#ff2222" stroke-width="1.1" /><text x="459.91" y="516.52" font-family="Liberation Sans,sans-serif" font-size="4.62" fill="#00f0f0" text-anchor="middle" font-weight="bold">WCS</text><rect x="486.49" y="507.54" width="13.86" height="5.79" fill="#fff" stroke="#ff2222" stroke-width="1.1" /><text x="493.42" y="512.06" font-family="Liberation Sans,sans-serif" font-size="4.92" fill="#00f0f0" text-anchor="middle" font-weight="bold">WPC</text><rect x="502.46" y="507.54" width="13.33" height="5.79" fill="#fff" stroke="#ff2222" stroke-width="1.1" /><text x="509.12" y="512.06" font-family="Liberation Sans,sans-serif" font-size="4.92" fill="#00f0f0" text-anchor="middle" font-weight="bold">ARP</text><rect x="542.98" y="514.56" width="13.51" height="6.14" fill="#fff" stroke="#ff2222" stroke-width="1.1" /><text x="549.74" y="519.35" font-family="Liberation Sans,sans-serif" font-size="5.22" fill="#00f0f0" text-anchor="middle" font-weight="bold">CS</text><rect x="574.21" y="515.44" width="13.51" height="5.79" fill="#fff" stroke="#ff2222" stroke-width="1.1" /><text x="580.96" y="519.95" font-family="Liberation Sans,sans-serif" font-size="4.92" fill="#00f0f0" text-anchor="middle" font-weight="bold">ARP</text><rect x="574.21" y="559.3" width="13.51" height="5.79" fill="#fff" stroke="#ff2222" stroke-width="1.1" /><text x="580.96" y="563.81" font-family="Liberation Sans,sans-serif" font-size="4.92" fill="#00f0f0" text-anchor="middle" font-weight="bold">HD</text><rect x="527.54" y="621.58" width="13.16" height="5.79" fill="#fff" stroke="#ff2222" stroke-width="1.1" /><text x="534.12" y="626.09" font-family="Liberation Sans,sans-serif" font-size="4.92" fill="#00f0f0" text-anchor="middle" font-weight="bold">ST</text><circle cx="501.4" cy="510.53" r="0.9" fill="#00f0f0"/><text x="542.11" y="512.46" font-family="Liberation Sans,sans-serif" font-size="4.2" fill="#00f0f0" text-anchor="start" font-weight="bold">BULLNOSE  ST  5 CM</text><path d="M500.53,626.84 L505.79,636.49 L495.26,636.49Z" fill="#fff" stroke="#ff2222" stroke-width="1.2"/><text x="500.53" y="635.33" font-family="Liberation Sans,sans-serif" font-size="5.98" fill="#111" text-anchor="middle" font-weight="bold">2</text><path d="M825.79,368.77 L825.79,441.4" fill="none" stroke="#7a7a7a" stroke-width="1" /><path d="M831.58,368.77 L831.58,441.4" fill="none" stroke="#7a7a7a" stroke-width="1" /><path d="M822.28,368.77 L833.68,368.77" fill="none" stroke="#7a7a7a" stroke-width="1" /><path d="M822.28,441.05 L833.68,441.05" fill="none" stroke="#7a7a7a" stroke-width="1" /><path d="M829.3,392.81 L837.19,392.81" fill="none" stroke="#7a7a7a" stroke-width="1" /><path d="M829.3,419.65 L837.19,419.65" fill="none" stroke="#7a7a7a" stroke-width="1" /><path d="M919.3,368.77 L919.3,441.4" fill="none" stroke="#7a7a7a" stroke-width="1" /><path d="M916.14,368.77 L921.75,368.77" fill="none" stroke="#7a7a7a" stroke-width="1" /><path d="M916.14,392.81 L921.75,392.81" fill="none" stroke="#7a7a7a" stroke-width="1" /><path d="M916.14,406.32 L921.75,406.32" fill="none" stroke="#7a7a7a" stroke-width="1" /><path d="M916.14,441.05 L921.75,441.05" fill="none" stroke="#7a7a7a" stroke-width="1" /><path d="M836.67,445.96 L913.86,445.96" fill="none" stroke="#7a7a7a" stroke-width="1" /><path d="M836.67,461.23 L913.86,461.23" fill="none" stroke="#7a7a7a" stroke-width="1" /><path d="M836.67,441.05 L836.67,448.95" fill="none" stroke="#7a7a7a" stroke-width="1" /><path d="M860.88,441.05 L860.88,448.95" fill="none" stroke="#7a7a7a" stroke-width="1" /><path d="M864.91,441.05 L864.91,448.95" fill="none" stroke="#7a7a7a" stroke-width="1" /><path d="M913.86,441.05 L913.86,448.95" fill="none" stroke="#7a7a7a" stroke-width="1" /><path d="M836.67,448.95 L836.67,463.86" fill="none" stroke="#7a7a7a" stroke-width="1" /><path d="M913.86,448.95 L913.86,463.86" fill="none" stroke="#7a7a7a" stroke-width="1" /><path d="M873.16,391.58 L873.16,439.3" fill="none" stroke="#a04a38" stroke-width="1.1" /><path d="M881.05,391.58 L881.05,439.3" fill="none" stroke="#a04a38" stroke-width="1.1" /><path d="M889.3,391.58 L889.3,439.3" fill="none" stroke="#a04a38" stroke-width="1.1" /><path d="M897.37,391.58 L897.37,439.3" fill="none" stroke="#a04a38" stroke-width="1.1" /><path d="M905.61,391.58 L905.61,439.3" fill="none" stroke="#a04a38" stroke-width="1.1" /><path d="M864.91,399.82 L913.86,399.82" fill="none" stroke="#a04a38" stroke-width="1.1" /><path d="M864.91,417.37 L913.86,417.37" fill="none" stroke="#a04a38" stroke-width="1.1" /><path d="M864.91,425.26 L913.86,425.26" fill="none" stroke="#a04a38" stroke-width="1.1" /><path d="M864.91,433.16 L913.86,433.16" fill="none" stroke="#a04a38" stroke-width="1.1" /><path d="M864.91,437.89 L913.86,437.89" fill="none" stroke="#a04a38" stroke-width="1.1" /><path d="M845.09,418.25 L845.09,439.3" fill="none" stroke="#a04a38" stroke-width="1.1" /><path d="M852.98,418.25 L852.98,439.3" fill="none" stroke="#a04a38" stroke-width="1.1" /><path d="M836.67,425.26 L860.88,425.26" fill="none" stroke="#a04a38" stroke-width="1.1" /><path d="M836.67,433.16 L860.88,433.16" fill="none" stroke="#a04a38" stroke-width="1.1" /><path d="M836.67,437.89 L860.88,437.89" fill="none" stroke="#a04a38" stroke-width="1.1" /><path d="M860.88,391.58 L914.39,391.58" fill="none" stroke="#a04a38" stroke-width="2" /><path d="M836.67,370.0 L836.67,439.65" fill="none" stroke="#f4f400" stroke-width="1.3" /><path d="M860.88,370.0 L860.88,439.65" fill="none" stroke="#f4f400" stroke-width="1.3" /><path d="M864.91,370.0 L864.91,439.65" fill="none" stroke="#f4f400" stroke-width="1.3" /><path d="M913.86,370.0 L913.86,439.65" fill="none" stroke="#f4f400" stroke-width="1.3" /><path d="M836.67,369.12 L913.86,369.12" fill="none" stroke="#e23cf2" stroke-width="1.8" /><path d="M838.07,370.35 L913.86,370.35" fill="none" stroke="#4a4a9a" stroke-width="1" /><path d="M837.19,390.53 L860.88,390.53" fill="none" stroke="#20e020" stroke-width="1.3" /><rect x="837.19" y="393.68" width="23.68" height="22.81" fill="#fff" stroke="#e23cf2" stroke-width="1.5" rx="2.5"/><path d="M847.72,402.46 L852.11,406.84" fill="none" stroke="#999" stroke-width="2.2" /><path d="M848.6,402.11 L852.63,405.96" fill="none" stroke="#bbb" stroke-width="1" /><rect x="838.07" y="408.6" width="2.98" height="6.14" fill="none" stroke="#20e020" stroke-width="1.3" /><path d="M837.19,420.0 L860.0,420.0" fill="none" stroke="#555" stroke-width="1.2" /><path d="M837.19,423.86 L860.0,423.86" fill="none" stroke="#555" stroke-width="1.2" /><path d="M841.58,425.26 L841.58,421.75 L856.49,421.75 L856.49,425.26" fill="none" stroke="#20e020" stroke-width="1.5" /><path d="M848.95,423.51 L848.95,430.88" fill="none" stroke="#20e020" stroke-width="1.8" /><path d="M845.96,427.89 L852.11,427.89" fill="none" stroke="#20e020" stroke-width="1.5" /><path d="M845.96,414.74 L847.72,417.37 L849.82,414.74" fill="none" stroke="#20e020" stroke-width="1.4" /><path d="M866.14,407.19 L912.63,407.19" fill="none" stroke="#20e020" stroke-width="2.2" /><path d="M866.14,409.12 L912.63,409.12" fill="none" stroke="#555" stroke-width="1" /><rect x="874.39" y="413.86" width="8.07" height="11.4" fill="#fff" stroke="#20e020" stroke-width="1.8" rx="3"/><rect x="877.02" y="407.72" width="2.81" height="6.14" fill="#20e020" stroke="#20e020" stroke-width="1.3" /><rect x="876.67" y="425.26" width="3.51" height="4.21" fill="#20e020" stroke="#20e020" stroke-width="1.3" /><rect x="895.79" y="413.86" width="8.07" height="11.4" fill="#fff" stroke="#20e020" stroke-width="1.8" rx="3"/><rect x="898.42" y="407.72" width="2.81" height="6.14" fill="#20e020" stroke="#20e020" stroke-width="1.3" /><rect x="898.07" y="425.26" width="3.51" height="4.21" fill="#20e020" stroke="#20e020" stroke-width="1.3" /><path d="M836.67,438.95 L913.86,438.95" fill="none" stroke="#e23cf2" stroke-width="1.6" /><path d="M836.67,440.7 L913.86,440.7" fill="none" stroke="#222" stroke-width="2" /><text x="822.28" y="402.46" font-family="Liberation Sans,sans-serif" font-size="4" fill="#00f0f0" text-anchor="middle" font-weight="bold" transform="rotate(-90 822.28 402.46)">2700</text><text x="829.3" y="380.53" font-family="Liberation Sans,sans-serif" font-size="4" fill="#00f0f0" text-anchor="middle" font-weight="bold" transform="rotate(-90 829.3 380.53)">600</text><text x="829.3" y="405.96" font-family="Liberation Sans,sans-serif" font-size="4" fill="#00f0f0" text-anchor="middle" font-weight="bold" transform="rotate(-90 829.3 405.96)">1000</text><text x="829.3" y="430.53" font-family="Liberation Sans,sans-serif" font-size="4" fill="#00f0f0" text-anchor="middle" font-weight="bold" transform="rotate(-90 829.3 430.53)">400</text><text x="916.49" y="380.53" font-family="Liberation Sans,sans-serif" font-size="4" fill="#00f0f0" text-anchor="middle" font-weight="bold" transform="rotate(-90 916.49 380.53)">600</text><text x="916.49" y="399.82" font-family="Liberation Sans,sans-serif" font-size="4" fill="#00f0f0" text-anchor="middle" font-weight="bold" transform="rotate(-90 916.49 399.82)">600</text><text x="916.49" y="423.51" font-family="Liberation Sans,sans-serif" font-size="4" fill="#00f0f0" text-anchor="middle" font-weight="bold" transform="rotate(-90 916.49 423.51)">1200</text><text x="910.53" y="396.32" font-family="Liberation Sans,sans-serif" font-size="4" fill="#00f0f0" text-anchor="middle" font-weight="bold" transform="rotate(-90 910.53 396.32)">500</text><text x="848.95" y="444.56" font-family="Liberation Sans,sans-serif" font-size="4" fill="#00f0f0" text-anchor="middle" font-weight="bold">900</text><text x="888.95" y="444.56" font-family="Liberation Sans,sans-serif" font-size="4" fill="#00f0f0" text-anchor="middle" font-weight="bold">1900</text><text x="862.98" y="455.96" font-family="Liberation Sans,sans-serif" font-size="4" fill="#00f0f0" text-anchor="middle" font-weight="bold">150</text><text x="874.91" y="459.47" font-family="Liberation Sans,sans-serif" font-size="4" fill="#00f0f0" text-anchor="middle" font-weight="bold">2950</text><text x="804.74" y="375.44" font-family="Liberation Sans,sans-serif" font-size="3.8" fill="#00f0f0" text-anchor="start" font-weight="bold">silicon drain</text><path d="M824.91,374.39 L835.44,374.39 L845.09,391.93" fill="none" stroke="#8f4a44" stroke-width="1.1" /><path d="M853.33,354.39 L845.96,354.39 L837.19,369.12" fill="none" stroke="#8f4a44" stroke-width="1.1" /><path d="M877.19,350.0 L872.28,350.0 L861.4,368.25" fill="none" stroke="#8f4a44" stroke-width="1.1" /><path d="M925.26,350.18 L911.23,350.18 L886.84,391.58" fill="none" stroke="#8f4a44" stroke-width="1.1" /><path d="M924.56,357.72 L914.39,357.72 L889.82,396.84" fill="none" stroke="#8f4a44" stroke-width="1.1" /><path d="M924.56,370.7 L917.89,370.7 L907.37,384.91" fill="none" stroke="#8f4a44" stroke-width="1.1" /><path d="M924.56,388.25 L919.65,388.25 L908.77,406.84" fill="none" stroke="#8f4a44" stroke-width="1.1" /><path d="M924.56,413.16 L914.39,413.16 L907.37,424.39" fill="none" stroke="#8f4a44" stroke-width="1.1" /><path d="M922.28,449.47 L913.51,449.47 L907.89,439.82" fill="none" stroke="#8f4a44" stroke-width="1.1" /><path d="M817.54,397.37 L835.44,397.37 L847.72,419.12" fill="none" stroke="#8f4a44" stroke-width="1.1" /><path d="M817.54,404.39 L835.44,404.39" fill="none" stroke="#8f4a44" stroke-width="1.1" /><circle cx="845.09" cy="391.93" r="1.1" fill="#00f0f0"/><circle cx="837.19" cy="369.12" r="1.1" fill="#00f0f0"/><circle cx="861.4" cy="368.25" r="1.1" fill="#00f0f0"/><circle cx="886.84" cy="391.58" r="1.1" fill="#00f0f0"/><circle cx="889.82" cy="396.84" r="1.1" fill="#00f0f0"/><circle cx="907.37" cy="384.91" r="1.1" fill="#00f0f0"/><circle cx="908.77" cy="406.84" r="1.1" fill="#00f0f0"/><circle cx="907.37" cy="424.39" r="1.1" fill="#00f0f0"/><circle cx="907.89" cy="439.82" r="1.1" fill="#00f0f0"/><circle cx="847.72" cy="419.12" r="1.1" fill="#00f0f0"/><rect x="853.33" y="351.58" width="13.33" height="5.79" fill="#fff" stroke="#ff2222" stroke-width="1.1" /><text x="860.0" y="356.09" font-family="Liberation Sans,sans-serif" font-size="4.92" fill="#00f0f0" text-anchor="middle" font-weight="bold">WPC</text><rect x="877.19" y="347.19" width="13.51" height="5.61" fill="#fff" stroke="#ff2222" stroke-width="1.1" /><text x="883.95" y="351.57" font-family="Liberation Sans,sans-serif" font-size="4.77" fill="#00f0f0" text-anchor="middle" font-weight="bold">WPC</text><rect x="892.81" y="347.19" width="13.68" height="5.61" fill="#fff" stroke="#ff2222" stroke-width="1.1" /><text x="899.65" y="351.57" font-family="Liberation Sans,sans-serif" font-size="4.77" fill="#00f0f0" text-anchor="middle" font-weight="bold">ARP</text><rect x="924.56" y="354.74" width="14.04" height="5.96" fill="#fff" stroke="#ff2222" stroke-width="1.1" /><text x="931.58" y="359.39" font-family="Liberation Sans,sans-serif" font-size="5.07" fill="#00f0f0" text-anchor="middle" font-weight="bold">CS</text><rect x="924.56" y="367.89" width="14.04" height="5.61" fill="#fff" stroke="#ff2222" stroke-width="1.1" /><text x="931.58" y="372.27" font-family="Liberation Sans,sans-serif" font-size="4.77" fill="#00f0f0" text-anchor="middle" font-weight="bold">ARP</text><rect x="924.56" y="385.44" width="14.04" height="5.61" fill="#fff" stroke="#ff2222" stroke-width="1.1" /><text x="931.58" y="389.82" font-family="Liberation Sans,sans-serif" font-size="4.77" fill="#00f0f0" text-anchor="middle" font-weight="bold">HD</text><rect x="924.56" y="410.35" width="14.04" height="5.79" fill="#fff" stroke="#ff2222" stroke-width="1.1" /><text x="931.58" y="414.87" font-family="Liberation Sans,sans-serif" font-size="4.92" fill="#00f0f0" text-anchor="middle" font-weight="bold">UR</text><rect x="922.28" y="446.67" width="13.51" height="5.79" fill="#fff" stroke="#ff2222" stroke-width="1.1" /><text x="929.04" y="451.18" font-family="Liberation Sans,sans-serif" font-size="4.92" fill="#00f0f0" text-anchor="middle" font-weight="bold">ST</text><rect x="803.86" y="394.56" width="13.68" height="5.79" fill="#fff" stroke="#ff2222" stroke-width="1.1" /><text x="810.7" y="399.08" font-family="Liberation Sans,sans-serif" font-size="4.92" fill="#00f0f0" text-anchor="middle" font-weight="bold">MR</text><rect x="803.86" y="401.58" width="13.68" height="5.61" fill="#fff" stroke="#ff2222" stroke-width="1.1" /><text x="810.7" y="405.96" font-family="Liberation Sans,sans-serif" font-size="4.77" fill="#00f0f0" text-anchor="middle" font-weight="bold">WB</text><circle cx="891.75" cy="350.0" r="0.9" fill="#00f0f0"/><text x="925.26" y="351.23" font-family="Liberation Sans,sans-serif" font-size="4.0" fill="#00f0f0" text-anchor="start" font-weight="bold">BULLNOSE  ST  5 CM</text><path d="M874.39,472.63 L879.65,481.75 L869.12,481.75Z" fill="#fff" stroke="#ff2222" stroke-width="1.2"/><text x="874.39" y="480.66" font-family="Liberation Sans,sans-serif" font-size="5.66" fill="#111" text-anchor="middle" font-weight="bold">3</text><path d="M817.89,529.47 L817.89,602.28" fill="none" stroke="#7a7a7a" stroke-width="1" /><path d="M824.04,529.47 L824.04,602.28" fill="none" stroke="#7a7a7a" stroke-width="1" /><path d="M815.26,529.47 L827.54,529.47" fill="none" stroke="#7a7a7a" stroke-width="1" /><path d="M815.26,601.93 L827.54,601.93" fill="none" stroke="#7a7a7a" stroke-width="1" /><path d="M821.05,552.28 L827.54,552.28" fill="none" stroke="#7a7a7a" stroke-width="1" /><path d="M911.75,529.47 L911.75,602.28" fill="none" stroke="#7a7a7a" stroke-width="1" /><path d="M908.77,529.47 L914.74,529.47" fill="none" stroke="#7a7a7a" stroke-width="1" /><path d="M908.77,553.51 L914.74,553.51" fill="none" stroke="#7a7a7a" stroke-width="1" /><path d="M908.77,580.35 L914.74,580.35" fill="none" stroke="#7a7a7a" stroke-width="1" /><path d="M908.77,601.75 L914.74,601.75" fill="none" stroke="#7a7a7a" stroke-width="1" /><path d="M828.42,607.19 L906.49,607.19" fill="none" stroke="#7a7a7a" stroke-width="1" /><path d="M828.42,622.98 L906.49,622.98" fill="none" stroke="#7a7a7a" stroke-width="1" /><path d="M829.3,602.28 L829.3,610.7" fill="none" stroke="#7a7a7a" stroke-width="1" /><path d="M839.47,602.28 L839.47,610.7" fill="none" stroke="#7a7a7a" stroke-width="1" /><path d="M861.4,602.28 L861.4,610.7" fill="none" stroke="#7a7a7a" stroke-width="1" /><path d="M865.26,602.28 L865.26,610.7" fill="none" stroke="#7a7a7a" stroke-width="1" /><path d="M885.44,602.28 L885.44,610.7" fill="none" stroke="#7a7a7a" stroke-width="1" /><path d="M905.61,602.28 L905.61,610.7" fill="none" stroke="#7a7a7a" stroke-width="1" /><path d="M829.3,610.7 L829.3,625.44" fill="none" stroke="#7a7a7a" stroke-width="1" /><path d="M905.61,610.7 L905.61,625.44" fill="none" stroke="#7a7a7a" stroke-width="1" /><path d="M837.19,552.28 L837.19,600.18" fill="none" stroke="#a04a38" stroke-width="1.1" /><path d="M845.61,552.28 L845.61,600.18" fill="none" stroke="#a04a38" stroke-width="1.1" /><path d="M853.51,552.28 L853.51,600.18" fill="none" stroke="#a04a38" stroke-width="1.1" /><path d="M829.3,561.93 L861.75,561.93" fill="none" stroke="#a04a38" stroke-width="1.1" /><path d="M829.3,569.82 L861.75,569.82" fill="none" stroke="#a04a38" stroke-width="1.1" /><path d="M829.3,577.72 L861.75,577.72" fill="none" stroke="#a04a38" stroke-width="1.1" /><path d="M829.3,586.14 L861.75,586.14" fill="none" stroke="#a04a38" stroke-width="1.1" /><path d="M829.3,594.39 L861.75,594.39" fill="none" stroke="#a04a38" stroke-width="1.1" /><path d="M889.82,552.28 L889.82,600.18" fill="none" stroke="#a04a38" stroke-width="1.1" /><path d="M898.07,552.28 L898.07,600.18" fill="none" stroke="#a04a38" stroke-width="1.1" /><path d="M885.44,561.93 L905.61,561.93" fill="none" stroke="#a04a38" stroke-width="1.1" /><path d="M885.44,569.82 L905.61,569.82" fill="none" stroke="#a04a38" stroke-width="1.1" /><path d="M885.44,577.72 L905.61,577.72" fill="none" stroke="#a04a38" stroke-width="1.1" /><path d="M885.44,586.14 L905.61,586.14" fill="none" stroke="#a04a38" stroke-width="1.1" /><path d="M885.44,594.39 L905.61,594.39" fill="none" stroke="#a04a38" stroke-width="1.1" /><path d="M829.3,552.28 L905.61,552.28" fill="none" stroke="#a04a38" stroke-width="2" /><path d="M829.3,530.7 L829.3,600.18" fill="none" stroke="#f4f400" stroke-width="1.3" /><path d="M839.82,530.7 L839.82,600.18" fill="none" stroke="#f4f400" stroke-width="1.3" /><path d="M905.61,530.7 L905.61,600.18" fill="none" stroke="#f4f400" stroke-width="1.3" /><path d="M829.3,530.0 L905.96,530.0" fill="none" stroke="#e23cf2" stroke-width="1.8" /><path d="M839.82,531.4 L905.61,531.4" fill="none" stroke="#8f4a44" stroke-width="1" /><path d="M861.75,553.16 L861.75,600.53" fill="none" stroke="#00f0f0" stroke-width="1.3" /><path d="M863.51,553.16 L863.51,600.53" fill="none" stroke="#00f0f0" stroke-width="0.8" /><rect x="865.26" y="553.51" width="20.18" height="47.02" fill="none" stroke="#00f0f0" stroke-width="1.2" /><rect x="866.32" y="554.56" width="18.07" height="42.81" fill="none" stroke="#00f0f0" stroke-width="0.8" /><rect x="870.88" y="557.54" width="10.18" height="36.84" fill="none" stroke="#00f0f0" stroke-width="1.3" /><rect x="872.28" y="558.95" width="7.37" height="34.04" fill="none" stroke="#00f0f0" stroke-width="0.8" /><circle cx="883.16" cy="578.07" r="1.4" fill="#e23cf2" stroke="#e23cf2" stroke-width="1.4"/><path d="M867.02,598.42 L884.56,598.42" fill="none" stroke="#222" stroke-width="1.2" /><path d="M867.02,600.53 L875.79,598.77 L884.56,600.53" fill="none" stroke="#333" stroke-width="0.8" /><path d="M841.58,584.74 L841.58,600.53" fill="none" stroke="#20e020" stroke-width="1.4" /><path d="M841.58,593.51 L845.96,593.51 L845.96,600.88" fill="none" stroke="#20e020" stroke-width="1.3" /><ellipse cx="850.35" cy="590.0" rx="3.86" ry="2.46" fill="none" stroke="#20e020" stroke-width="1.6"/><rect x="848.25" y="593.51" width="4.21" height="7.37" fill="none" stroke="#20e020" stroke-width="1.5" /><circle cx="859.47" cy="589.12" r="1.4" fill="none" stroke="#20e020" stroke-width="1.4"/><circle cx="842.81" cy="585.61" r="0.88" fill="none" stroke="#20e020" stroke-width="1.2"/><path d="M854.39,590.88 L855.61,595.26" fill="none" stroke="#20e020" stroke-width="1.4" /><path d="M905.26,550.53 L905.26,570.7" fill="none" stroke="#20e020" stroke-width="1.2" /><rect x="902.98" y="550.0" width="2.98" height="3.16" fill="#ff2222" stroke="#ff2222" stroke-width="1" /><ellipse cx="902.46" cy="582.98" rx="2.81" ry="9.65" fill="#fff" stroke="#20e020" stroke-width="2"/><path d="M889.82,581.23 L900.35,582.98" fill="none" stroke="#20e020" stroke-width="2.2" /><circle cx="902.46" cy="575.96" r="1.75" fill="none" stroke="#20e020" stroke-width="1.6"/><circle cx="901.75" cy="590.88" r="1.4" fill="none" stroke="#20e020" stroke-width="1.6"/><circle cx="895.96" cy="582.11" r="1.23" fill="none" stroke="#20e020" stroke-width="1.5"/><path d="M829.3,600.0 L905.61,600.0" fill="none" stroke="#e23cf2" stroke-width="1.8" /><path d="M829.3,601.58 L905.61,601.58" fill="none" stroke="#222" stroke-width="1.8" /><text x="815.26" y="566.32" font-family="Liberation Sans,sans-serif" font-size="4" fill="#00f0f0" text-anchor="middle" font-weight="bold" transform="rotate(-90 815.26 566.32)">2700</text><text x="821.4" y="540.88" font-family="Liberation Sans,sans-serif" font-size="4" fill="#00f0f0" text-anchor="middle" font-weight="bold" transform="rotate(-90 821.4 540.88)">600</text><text x="821.4" y="576.84" font-family="Liberation Sans,sans-serif" font-size="4" fill="#00f0f0" text-anchor="middle" font-weight="bold" transform="rotate(-90 821.4 576.84)">2100</text><text x="909.12" y="541.75" font-family="Liberation Sans,sans-serif" font-size="4" fill="#00f0f0" text-anchor="middle" font-weight="bold" transform="rotate(-90 909.12 541.75)">600</text><text x="909.12" y="567.19" font-family="Liberation Sans,sans-serif" font-size="4" fill="#00f0f0" text-anchor="middle" font-weight="bold" transform="rotate(-90 909.12 567.19)">700</text><text x="909.12" y="591.4" font-family="Liberation Sans,sans-serif" font-size="4" fill="#00f0f0" text-anchor="middle" font-weight="bold" transform="rotate(-90 909.12 591.4)">800</text><text x="834.56" y="605.79" font-family="Liberation Sans,sans-serif" font-size="4" fill="#00f0f0" text-anchor="middle" font-weight="bold">270</text><text x="850.35" y="605.79" font-family="Liberation Sans,sans-serif" font-size="4" fill="#00f0f0" text-anchor="middle" font-weight="bold">600</text><text x="875.44" y="605.79" font-family="Liberation Sans,sans-serif" font-size="4" fill="#00f0f0" text-anchor="middle" font-weight="bold">750</text><text x="895.44" y="605.79" font-family="Liberation Sans,sans-serif" font-size="4" fill="#00f0f0" text-anchor="middle" font-weight="bold">750</text><text x="863.51" y="616.67" font-family="Liberation Sans,sans-serif" font-size="4" fill="#00f0f0" text-anchor="middle" font-weight="bold">150</text><text x="867.37" y="620.88" font-family="Liberation Sans,sans-serif" font-size="4" fill="#00f0f0" text-anchor="middle" font-weight="bold">2950</text><text x="854.74" y="556.67" font-family="Liberation Sans,sans-serif" font-size="4" fill="#00f0f0" text-anchor="start" font-weight="bold">T</text><path d="M882.81,502.46 L874.39,502.46 L853.86,538.25" fill="none" stroke="#8f4a44" stroke-width="1.1" /><path d="M882.81,510.35 L877.89,510.35 L866.67,528.95" fill="none" stroke="#8f4a44" stroke-width="1.1" /><path d="M845.09,516.49 L838.07,516.49 L830.18,530.0" fill="none" stroke="#8f4a44" stroke-width="1.1" /><path d="M923.16,560.88 L912.28,560.88 L905.61,571.05" fill="none" stroke="#8f4a44" stroke-width="1.1" /><path d="M810.88,565.09 L845.09,565.09 L859.12,588.25" fill="none" stroke="#8f4a44" stroke-width="1.1" /><path d="M910.35,608.95 L901.75,608.95 L896.49,600.53" fill="none" stroke="#8f4a44" stroke-width="1.1" /><circle cx="853.86" cy="538.25" r="1.1" fill="#00f0f0"/><circle cx="866.67" cy="528.95" r="1.1" fill="#00f0f0"/><circle cx="830.18" cy="530.0" r="1.1" fill="#00f0f0"/><circle cx="905.61" cy="571.05" r="1.1" fill="#00f0f0"/><circle cx="859.12" cy="588.25" r="1.1" fill="#00f0f0"/><circle cx="896.49" cy="600.53" r="1.1" fill="#00f0f0"/><rect x="882.81" y="499.65" width="13.68" height="5.79" fill="#fff" stroke="#ff2222" stroke-width="1.1" /><text x="889.65" y="504.16" font-family="Liberation Sans,sans-serif" font-size="4.92" fill="#00f0f0" text-anchor="middle" font-weight="bold">ARP</text><rect x="882.81" y="507.54" width="13.68" height="5.79" fill="#fff" stroke="#ff2222" stroke-width="1.1" /><text x="889.65" y="512.06" font-family="Liberation Sans,sans-serif" font-size="4.92" fill="#00f0f0" text-anchor="middle" font-weight="bold">WPC</text><rect x="898.6" y="507.54" width="13.16" height="5.79" fill="#fff" stroke="#ff2222" stroke-width="1.1" /><text x="905.18" y="512.06" font-family="Liberation Sans,sans-serif" font-size="4.92" fill="#00f0f0" text-anchor="middle" font-weight="bold">ARP</text><rect x="845.09" y="513.68" width="13.51" height="5.79" fill="#fff" stroke="#ff2222" stroke-width="1.1" /><text x="851.84" y="518.2" font-family="Liberation Sans,sans-serif" font-size="4.92" fill="#00f0f0" text-anchor="middle" font-weight="bold">WCS</text><rect x="923.16" y="558.07" width="13.51" height="5.61" fill="#fff" stroke="#ff2222" stroke-width="1.1" /><text x="929.91" y="562.45" font-family="Liberation Sans,sans-serif" font-size="4.77" fill="#00f0f0" text-anchor="middle" font-weight="bold">C</text><rect x="797.19" y="562.28" width="13.68" height="5.44" fill="#fff" stroke="#ff2222" stroke-width="1.1" /><text x="804.04" y="566.52" font-family="Liberation Sans,sans-serif" font-size="4.62" fill="#00f0f0" text-anchor="middle" font-weight="bold">TB</text><rect x="910.35" y="606.14" width="13.33" height="5.44" fill="#fff" stroke="#ff2222" stroke-width="1.1" /><text x="917.02" y="610.38" font-family="Liberation Sans,sans-serif" font-size="4.62" fill="#00f0f0" text-anchor="middle" font-weight="bold">ST</text><circle cx="897.54" cy="510.35" r="0.9" fill="#00f0f0"/><path d="M868.77,625.96 L874.21,635.61 L863.33,635.61Z" fill="#fff" stroke="#ff2222" stroke-width="1.2"/><text x="868.77" y="634.46" font-family="Liberation Sans,sans-serif" font-size="5.98" fill="#111" text-anchor="middle" font-weight="bold">4</text><path d="M830.53,690.0 L830.53,763.16" fill="none" stroke="#7a7a7a" stroke-width="1" /><path d="M828.07,690.35 L832.81,690.35" fill="none" stroke="#7a7a7a" stroke-width="1" /><path d="M828.07,762.28 L832.81,762.28" fill="none" stroke="#7a7a7a" stroke-width="1" /><path d="M916.49,690.0 L916.49,763.16" fill="none" stroke="#7a7a7a" stroke-width="1" /><path d="M913.51,690.35 L919.65,690.35" fill="none" stroke="#7a7a7a" stroke-width="1" /><path d="M913.51,714.39 L919.65,714.39" fill="none" stroke="#7a7a7a" stroke-width="1" /><path d="M913.51,740.88 L919.65,740.88" fill="none" stroke="#7a7a7a" stroke-width="1" /><path d="M913.51,762.28 L919.65,762.28" fill="none" stroke="#7a7a7a" stroke-width="1" /><path d="M833.68,767.89 L911.23,767.89" fill="none" stroke="#7a7a7a" stroke-width="1" /><path d="M833.68,783.68 L911.23,783.68" fill="none" stroke="#7a7a7a" stroke-width="1" /><path d="M834.56,762.63 L834.56,771.05" fill="none" stroke="#7a7a7a" stroke-width="1" /><path d="M858.6,762.63 L858.6,771.05" fill="none" stroke="#7a7a7a" stroke-width="1" /><path d="M862.28,762.63 L862.28,771.05" fill="none" stroke="#7a7a7a" stroke-width="1" /><path d="M910.88,762.63 L910.88,771.05" fill="none" stroke="#7a7a7a" stroke-width="1" /><path d="M834.56,771.05 L834.56,785.96" fill="none" stroke="#7a7a7a" stroke-width="1" /><path d="M910.88,771.05 L910.88,785.96" fill="none" stroke="#7a7a7a" stroke-width="1" /><path d="M842.46,713.16 L842.46,760.18" fill="none" stroke="#a04a38" stroke-width="1.1" /><path d="M850.7,713.16 L850.7,760.18" fill="none" stroke="#a04a38" stroke-width="1.1" /><path d="M834.56,721.93 L860.0,721.93" fill="none" stroke="#a04a38" stroke-width="1.1" /><path d="M834.56,730.18 L860.0,730.18" fill="none" stroke="#a04a38" stroke-width="1.1" /><path d="M834.56,738.25 L860.0,738.25" fill="none" stroke="#a04a38" stroke-width="1.1" /><path d="M834.56,746.49 L860.0,746.49" fill="none" stroke="#a04a38" stroke-width="1.1" /><path d="M834.56,754.74 L860.0,754.74" fill="none" stroke="#a04a38" stroke-width="1.1" /><path d="M870.53,746.49 L870.53,760.18" fill="none" stroke="#a04a38" stroke-width="1.1" /><path d="M878.42,746.49 L878.42,760.18" fill="none" stroke="#a04a38" stroke-width="1.1" /><path d="M886.32,746.49 L886.32,760.18" fill="none" stroke="#a04a38" stroke-width="1.1" /><path d="M894.74,746.49 L894.74,760.18" fill="none" stroke="#a04a38" stroke-width="1.1" /><path d="M902.98,746.49 L902.98,760.18" fill="none" stroke="#a04a38" stroke-width="1.1" /><path d="M862.28,754.74 L910.88,754.74" fill="none" stroke="#a04a38" stroke-width="1.1" /><path d="M833.68,713.16 L861.75,713.16" fill="none" stroke="#a04a38" stroke-width="2.2" /><path d="M860.0,713.16 L860.0,759.65" fill="none" stroke="#a04a38" stroke-width="1.6" /><path d="M834.56,691.4 L834.56,760.53" fill="none" stroke="#f4f400" stroke-width="1.3" /><path d="M862.28,713.16 L862.28,760.53" fill="none" stroke="#f4f400" stroke-width="1.3" /><path d="M910.88,691.4 L910.88,760.53" fill="none" stroke="#f4f400" stroke-width="1.3" /><path d="M835.79,690.18 L910.88,690.18" fill="none" stroke="#e23cf2" stroke-width="1" /><path d="M835.79,691.23 L910.88,691.23" fill="none" stroke="#4a4a9a" stroke-width="1.8" /><path d="M863.51,711.75 L910.0,711.75" fill="none" stroke="#20e020" stroke-width="1.3" /><rect x="863.51" y="714.56" width="47.02" height="22.63" fill="#fff" stroke="#e23cf2" stroke-width="1.5" rx="2.5"/><circle cx="864.74" cy="715.79" r="0.7" fill="none" stroke="#ff2222" stroke-width="1"/><circle cx="909.3" cy="715.79" r="0.7" fill="none" stroke="#ff2222" stroke-width="1"/><circle cx="864.74" cy="735.96" r="0.7" fill="none" stroke="#ff2222" stroke-width="1"/><circle cx="909.3" cy="735.96" r="0.7" fill="none" stroke="#ff2222" stroke-width="1"/><path d="M883.68,728.07 L888.95,723.68" fill="none" stroke="#999" stroke-width="2.2" /><path d="M884.91,728.42 L889.47,724.56" fill="none" stroke="#bbb" stroke-width="1" /><path d="M863.51,741.23 L910.53,741.23" fill="none" stroke="#555" stroke-width="1.2" /><path d="M863.51,744.21 L910.53,744.21" fill="none" stroke="#333" stroke-width="1.8" /><circle cx="868.77" cy="745.09" r="1.05" fill="#20e020" stroke="#20e020" stroke-width="1.4"/><circle cx="875.79" cy="745.09" r="1.05" fill="#20e020" stroke="#20e020" stroke-width="1.4"/><circle cx="883.68" cy="745.09" r="1.05" fill="#20e020" stroke="#20e020" stroke-width="1.4"/><circle cx="890.7" cy="745.09" r="1.05" fill="#20e020" stroke="#20e020" stroke-width="1.4"/><circle cx="898.6" cy="745.09" r="1.05" fill="#20e020" stroke="#20e020" stroke-width="1.4"/><circle cx="904.74" cy="745.09" r="1.05" fill="#20e020" stroke="#20e020" stroke-width="1.4"/><path d="M867.89,745.09 L905.61,745.09" fill="none" stroke="#20e020" stroke-width="1.4" /><path d="M876.67,746.14 L876.67,752.63" fill="none" stroke="#20e020" stroke-width="1.6" /><path d="M897.37,746.14 L897.37,752.63" fill="none" stroke="#20e020" stroke-width="1.6" /><rect x="876.14" y="734.91" width="3.51" height="2.11" fill="#20e020" stroke="#20e020" stroke-width="1.2" /><rect x="897.72" y="734.91" width="3.51" height="2.11" fill="#20e020" stroke="#20e020" stroke-width="1.2" /><rect x="872.28" y="739.12" width="7.02" height="2.11" fill="none" stroke="#20e020" stroke-width="1.2" /><rect x="894.21" y="739.12" width="7.02" height="2.11" fill="none" stroke="#20e020" stroke-width="1.2" /><path d="M909.12,727.19 L909.12,737.72" fill="none" stroke="#20e020" stroke-width="1.6" /><circle cx="908.25" cy="731.58" r="1.23" fill="none" stroke="#20e020" stroke-width="1.4"/><text x="886.67" y="759.65" font-family="Liberation Sans,sans-serif" font-size="3.2" fill="#00f0f0" text-anchor="middle" >+0.00</text><path d="M836.32,745.61 L836.32,760.88" fill="none" stroke="#20e020" stroke-width="1.4" /><circle cx="838.42" cy="746.14" r="1.23" fill="none" stroke="#20e020" stroke-width="1.4"/><ellipse cx="846.32" cy="750.88" rx="5.26" ry="2.46" fill="none" stroke="#20e020" stroke-width="1.6"/><rect x="843.86" y="753.86" width="4.91" height="7.02" fill="none" stroke="#20e020" stroke-width="1.5" /><path d="M838.07,753.86 L852.11,753.86" fill="none" stroke="#20e020" stroke-width="1.5" /><path d="M838.07,755.26 L838.07,760.53 L841.58,760.53 L841.58,755.26" fill="none" stroke="#20e020" stroke-width="1.3" /><path d="M834.56,760.18 L910.88,760.18" fill="none" stroke="#e23cf2" stroke-width="1.8" /><path d="M834.56,762.28 L910.88,762.28" fill="none" stroke="#222" stroke-width="1.8" /><text x="827.54" y="726.32" font-family="Liberation Sans,sans-serif" font-size="4" fill="#00f0f0" text-anchor="middle" font-weight="bold" transform="rotate(-90 827.54 726.32)">2700</text><text x="914.04" y="701.75" font-family="Liberation Sans,sans-serif" font-size="4" fill="#00f0f0" text-anchor="middle" font-weight="bold" transform="rotate(-90 914.04 701.75)">600</text><text x="914.04" y="728.07" font-family="Liberation Sans,sans-serif" font-size="4" fill="#00f0f0" text-anchor="middle" font-weight="bold" transform="rotate(-90 914.04 728.07)">600</text><text x="914.04" y="751.75" font-family="Liberation Sans,sans-serif" font-size="4" fill="#00f0f0" text-anchor="middle" font-weight="bold" transform="rotate(-90 914.04 751.75)">800</text><text x="846.32" y="766.49" font-family="Liberation Sans,sans-serif" font-size="4" fill="#00f0f0" text-anchor="middle" font-weight="bold">900</text><text x="886.67" y="766.49" font-family="Liberation Sans,sans-serif" font-size="4" fill="#00f0f0" text-anchor="middle" font-weight="bold">1900</text><text x="860.53" y="777.72" font-family="Liberation Sans,sans-serif" font-size="4" fill="#00f0f0" text-anchor="middle" font-weight="bold">150</text><text x="872.28" y="781.58" font-family="Liberation Sans,sans-serif" font-size="4" fill="#00f0f0" text-anchor="middle" font-weight="bold">2950</text><text x="793.86" y="696.49" font-family="Liberation Sans,sans-serif" font-size="4.2" fill="#00f0f0" text-anchor="start" font-weight="bold">BULLNOSE  ST  5 CM</text><text x="911.75" y="682.11" font-family="Liberation Sans,sans-serif" font-size="4.0" fill="#00f0f0" text-anchor="start" font-weight="bold">VISION BOX</text><text x="837.19" y="717.54" font-family="Liberation Sans,sans-serif" font-size="4" fill="#00f0f0" text-anchor="start" font-weight="bold">T</text><path d="M819.65,695.26 L834.56,695.26 L845.96,713.16" fill="none" stroke="#8f4a44" stroke-width="1.1" /><path d="M911.75,680.7 L900.35,680.7 L881.93,714.04" fill="none" stroke="#8f4a44" stroke-width="1.1" /><path d="M883.33,663.51 L874.39,663.51 L852.98,700.88" fill="none" stroke="#8f4a44" stroke-width="1.1" /><path d="M883.33,671.58 L878.42,671.58 L866.67,690.0" fill="none" stroke="#8f4a44" stroke-width="1.1" /><path d="M850.7,675.96 L843.86,675.96 L835.44,690.7" fill="none" stroke="#8f4a44" stroke-width="1.1" /><path d="M822.63,703.33 L835.44,703.33 L847.19,721.58" fill="none" stroke="#8f4a44" stroke-width="1.1" /><path d="M928.42,719.47 L912.63,719.47 L899.47,741.58" fill="none" stroke="#8f4a44" stroke-width="1.1" /><path d="M928.42,726.14 L914.39,726.14 L909.12,734.21" fill="none" stroke="#8f4a44" stroke-width="1.1" /><path d="M823.51,742.28 L831.05,742.28 L837.19,750.88" fill="none" stroke="#8f4a44" stroke-width="1.1" /><path d="M931.4,749.3 L904.21,749.3" fill="none" stroke="#8f4a44" stroke-width="1.1" /><path d="M924.39,770.18 L910.88,770.18 L905.61,760.88" fill="none" stroke="#8f4a44" stroke-width="1.1" /><circle cx="845.96" cy="713.16" r="1.1" fill="#00f0f0"/><circle cx="881.93" cy="714.04" r="1.1" fill="#00f0f0"/><circle cx="852.98" cy="700.88" r="1.1" fill="#00f0f0"/><circle cx="866.67" cy="690.0" r="1.1" fill="#00f0f0"/><circle cx="835.44" cy="690.7" r="1.1" fill="#00f0f0"/><circle cx="847.19" cy="721.58" r="1.1" fill="#00f0f0"/><circle cx="899.47" cy="741.58" r="1.1" fill="#00f0f0"/><circle cx="909.12" cy="734.21" r="1.1" fill="#00f0f0"/><circle cx="837.19" cy="750.88" r="1.1" fill="#00f0f0"/><circle cx="904.21" cy="749.3" r="1.1" fill="#00f0f0"/><circle cx="905.61" cy="760.88" r="1.1" fill="#00f0f0"/><rect x="883.33" y="660.88" width="13.16" height="5.44" fill="#fff" stroke="#ff2222" stroke-width="1.1" /><text x="889.91" y="665.12" font-family="Liberation Sans,sans-serif" font-size="4.62" fill="#00f0f0" text-anchor="middle" font-weight="bold">ARP</text><rect x="883.33" y="668.77" width="13.16" height="5.79" fill="#fff" stroke="#ff2222" stroke-width="1.1" /><text x="889.91" y="673.29" font-family="Liberation Sans,sans-serif" font-size="4.92" fill="#00f0f0" text-anchor="middle" font-weight="bold">WPC</text><rect x="898.6" y="668.77" width="13.16" height="5.79" fill="#fff" stroke="#ff2222" stroke-width="1.1" /><text x="905.18" y="673.29" font-family="Liberation Sans,sans-serif" font-size="4.92" fill="#00f0f0" text-anchor="middle" font-weight="bold">ARP</text><rect x="850.7" y="673.33" width="13.68" height="5.26" fill="#fff" stroke="#ff2222" stroke-width="1.1" /><text x="857.54" y="677.44" font-family="Liberation Sans,sans-serif" font-size="4.47" fill="#00f0f0" text-anchor="middle" font-weight="bold">WCS</text><rect x="809.47" y="700.53" width="13.16" height="5.61" fill="#fff" stroke="#ff2222" stroke-width="1.1" /><text x="816.05" y="704.91" font-family="Liberation Sans,sans-serif" font-size="4.77" fill="#00f0f0" text-anchor="middle" font-weight="bold">CS</text><rect x="928.42" y="716.67" width="13.68" height="5.61" fill="#fff" stroke="#ff2222" stroke-width="1.1" /><text x="935.26" y="721.05" font-family="Liberation Sans,sans-serif" font-size="4.77" fill="#00f0f0" text-anchor="middle" font-weight="bold">MR</text><rect x="928.42" y="723.33" width="13.68" height="5.61" fill="#fff" stroke="#ff2222" stroke-width="1.1" /><text x="935.26" y="727.71" font-family="Liberation Sans,sans-serif" font-size="4.77" fill="#00f0f0" text-anchor="middle" font-weight="bold">HD</text><rect x="810.35" y="739.47" width="13.16" height="5.79" fill="#fff" stroke="#ff2222" stroke-width="1.1" /><text x="816.93" y="743.99" font-family="Liberation Sans,sans-serif" font-size="4.92" fill="#00f0f0" text-anchor="middle" font-weight="bold">TB</text><rect x="931.4" y="746.49" width="13.16" height="5.61" fill="#fff" stroke="#ff2222" stroke-width="1.1" /><text x="937.98" y="750.87" font-family="Liberation Sans,sans-serif" font-size="4.77" fill="#00f0f0" text-anchor="middle" font-weight="bold">WB</text><rect x="924.39" y="767.19" width="13.16" height="5.61" fill="#fff" stroke="#ff2222" stroke-width="1.1" /><text x="930.96" y="771.57" font-family="Liberation Sans,sans-serif" font-size="4.77" fill="#00f0f0" text-anchor="middle" font-weight="bold">ST</text><circle cx="897.54" cy="671.58" r="0.9" fill="#00f0f0"/><path d="M875.09,787.37 L880.53,796.49 L869.65,796.49Z" fill="#fff" stroke="#ff2222" stroke-width="1.2"/><text x="875.09" y="795.4" font-family="Liberation Sans,sans-serif" font-size="5.66" fill="#111" text-anchor="middle" font-weight="bold">5</text><path d="M393.27,688.52 L564.42,688.52" fill="none" stroke="#7a7a7a" stroke-width="1" /><path d="M396.78,685.59 L396.78,713.86" fill="none" stroke="#7a7a7a" stroke-width="1" /><path d="M400.68,685.59 L400.68,713.86" fill="none" stroke="#7a7a7a" stroke-width="1" /><path d="M448.83,685.59 L448.83,713.86" fill="none" stroke="#7a7a7a" stroke-width="1" /><path d="M452.73,685.59 L452.73,713.86" fill="none" stroke="#7a7a7a" stroke-width="1" /><path d="M476.71,685.59 L476.71,713.86" fill="none" stroke="#7a7a7a" stroke-width="1" /><path d="M480.6,685.59 L480.6,713.86" fill="none" stroke="#7a7a7a" stroke-width="1" /><path d="M506.92,685.59 L506.92,713.86" fill="none" stroke="#7a7a7a" stroke-width="1" /><path d="M510.82,685.59 L510.82,713.86" fill="none" stroke="#7a7a7a" stroke-width="1" /><path d="M556.74,685.59 L556.74,713.86" fill="none" stroke="#7a7a7a" stroke-width="1" /><path d="M560.64,685.59 L560.64,713.86" fill="none" stroke="#7a7a7a" stroke-width="1" /><path d="M393.27,826.92 L564.42,826.92" fill="none" stroke="#7a7a7a" stroke-width="1" /><path d="M396.78,797.68 L396.78,828.87" fill="none" stroke="#7a7a7a" stroke-width="1" /><path d="M400.68,797.68 L400.68,828.87" fill="none" stroke="#7a7a7a" stroke-width="1" /><path d="M448.83,797.68 L448.83,828.87" fill="none" stroke="#7a7a7a" stroke-width="1" /><path d="M452.73,797.68 L452.73,828.87" fill="none" stroke="#7a7a7a" stroke-width="1" /><path d="M476.71,797.68 L476.71,828.87" fill="none" stroke="#7a7a7a" stroke-width="1" /><path d="M480.6,797.68 L480.6,828.87" fill="none" stroke="#7a7a7a" stroke-width="1" /><path d="M528.48,797.68 L528.48,828.87" fill="none" stroke="#7a7a7a" stroke-width="1" /><path d="M532.38,797.68 L532.38,828.87" fill="none" stroke="#7a7a7a" stroke-width="1" /><path d="M556.74,797.68 L556.74,828.87" fill="none" stroke="#7a7a7a" stroke-width="1" /><path d="M560.64,797.68 L560.64,828.87" fill="none" stroke="#7a7a7a" stroke-width="1" /><path d="M397.76,844.07 L559.55,844.07" fill="none" stroke="#7a7a7a" stroke-width="1" /><path d="M398.34,841.54 L398.34,846.41" fill="none" stroke="#7a7a7a" stroke-width="1" /><path d="M558.69,841.54 L558.69,846.41" fill="none" stroke="#7a7a7a" stroke-width="1" /><path d="M387.04,694.37 L387.04,800.21" fill="none" stroke="#7a7a7a" stroke-width="1" /><path d="M391.91,694.37 L391.91,800.21" fill="none" stroke="#7a7a7a" stroke-width="1" /><path d="M384.11,695.34 L396.78,695.34" fill="none" stroke="#7a7a7a" stroke-width="1" /><path d="M384.11,699.24 L396.78,699.24" fill="none" stroke="#7a7a7a" stroke-width="1" /><path d="M384.11,742.12 L396.78,742.12" fill="none" stroke="#7a7a7a" stroke-width="1" /><path d="M384.11,745.05 L396.78,745.05" fill="none" stroke="#7a7a7a" stroke-width="1" /><path d="M384.11,793.78 L396.78,793.78" fill="none" stroke="#7a7a7a" stroke-width="1" /><path d="M384.11,797.68 L396.78,797.68" fill="none" stroke="#7a7a7a" stroke-width="1" /><path d="M570.39,711.91 L570.39,800.21" fill="none" stroke="#7a7a7a" stroke-width="1" /><path d="M560.64,717.76 L573.31,717.76" fill="none" stroke="#7a7a7a" stroke-width="1" /><path d="M560.64,749.92 L573.31,749.92" fill="none" stroke="#7a7a7a" stroke-width="1" /><path d="M560.64,753.82 L573.31,753.82" fill="none" stroke="#7a7a7a" stroke-width="1" /><path d="M560.64,793.78 L573.31,793.78" fill="none" stroke="#7a7a7a" stroke-width="1" /><path d="M560.64,797.68 L573.31,797.68" fill="none" stroke="#7a7a7a" stroke-width="1" /><path d="M589.88,717.76 L589.88,796.71" fill="none" stroke="#7a7a7a" stroke-width="1" /><path d="M586.96,796.32 L592.81,796.32" fill="none" stroke="#7a7a7a" stroke-width="1" /><path d="M575.26,718.15 L589.88,718.15" fill="none" stroke="#7a7a7a" stroke-width="1" /><path d="M408.48,699.63 L408.48,793.78" fill="none" stroke="#e23cf2" stroke-width="1.2" /><path d="M416.67,699.63 L416.67,793.78" fill="none" stroke="#e23cf2" stroke-width="1.2" /><path d="M424.66,699.63 L424.66,793.78" fill="none" stroke="#e23cf2" stroke-width="1.2" /><path d="M432.85,699.63 L432.85,793.78" fill="none" stroke="#e23cf2" stroke-width="1.2" /><path d="M440.84,699.63 L440.84,793.78" fill="none" stroke="#e23cf2" stroke-width="1.2" /><path d="M400.29,701.19 L448.83,701.19" fill="none" stroke="#e23cf2" stroke-width="1.2" /><path d="M400.29,708.99 L448.83,708.99" fill="none" stroke="#e23cf2" stroke-width="1.2" /><path d="M400.29,717.76 L448.83,717.76" fill="none" stroke="#e23cf2" stroke-width="1.2" /><path d="M400.29,725.56 L448.83,725.56" fill="none" stroke="#e23cf2" stroke-width="1.2" /><path d="M400.29,733.35 L448.83,733.35" fill="none" stroke="#e23cf2" stroke-width="1.2" /><path d="M400.29,747.97 L448.83,747.97" fill="none" stroke="#e23cf2" stroke-width="1.2" /><path d="M400.29,756.74 L448.83,756.74" fill="none" stroke="#e23cf2" stroke-width="1.2" /><path d="M400.29,764.54 L448.83,764.54" fill="none" stroke="#e23cf2" stroke-width="1.2" /><path d="M400.29,772.34 L448.83,772.34" fill="none" stroke="#e23cf2" stroke-width="1.2" /><path d="M400.29,780.14 L448.83,780.14" fill="none" stroke="#e23cf2" stroke-width="1.2" /><path d="M400.29,787.93 L448.83,787.93" fill="none" stroke="#e23cf2" stroke-width="1.2" /><path d="M424.66,798.65 L424.66,817.17" fill="none" stroke="#e23cf2" stroke-width="1.2" /><path d="M432.85,798.65 L432.85,817.17" fill="none" stroke="#e23cf2" stroke-width="1.2" /><path d="M440.84,798.65 L440.84,817.17" fill="none" stroke="#e23cf2" stroke-width="1.2" /><path d="M448.83,798.65 L448.83,817.17" fill="none" stroke="#e23cf2" stroke-width="1.2" /><path d="M416.28,804.5 L456.82,804.5" fill="none" stroke="#e23cf2" stroke-width="1.2" /><path d="M416.28,810.74 L456.82,810.74" fill="none" stroke="#e23cf2" stroke-width="1.2" /><path d="M416.28,816.2 L456.82,816.2" fill="none" stroke="#e23cf2" stroke-width="1.2" /><path d="M416.28,798.65 L456.82,798.65" fill="none" stroke="#00f0f0" stroke-width="1.2" /><path d="M416.28,798.65 L416.28,817.17" fill="none" stroke="#00f0f0" stroke-width="1.2" /><path d="M466.96,798.65 L466.96,817.17" fill="none" stroke="#e23cf2" stroke-width="1.2" /><path d="M479.63,798.65 L479.63,817.17" fill="none" stroke="#e23cf2" stroke-width="1.2" /><path d="M486.45,798.65 L486.45,817.17" fill="none" stroke="#e23cf2" stroke-width="1.2" /><path d="M504.0,798.65 L504.0,817.17" fill="none" stroke="#e23cf2" stroke-width="1.2" /><path d="M459.55,804.5 L559.55,804.5" fill="none" stroke="#e23cf2" stroke-width="1.2" /><path d="M459.55,816.2 L559.55,816.2" fill="none" stroke="#e23cf2" stroke-width="1.2" /><path d="M485.59,798.65 L485.59,817.17" fill="none" stroke="#e23cf2" stroke-width="1.2" /><path d="M503.14,798.65 L503.14,817.17" fill="none" stroke="#e23cf2" stroke-width="1.2" /><path d="M509.96,798.65 L509.96,817.17" fill="none" stroke="#e23cf2" stroke-width="1.2" /><path d="M527.5,798.65 L527.5,817.17" fill="none" stroke="#e23cf2" stroke-width="1.2" /><path d="M534.33,798.65 L534.33,817.17" fill="none" stroke="#e23cf2" stroke-width="1.2" /><path d="M550.9,798.65 L550.9,817.17" fill="none" stroke="#e23cf2" stroke-width="1.2" /><path d="M479.75,804.5 L556.74,804.5" fill="none" stroke="#e23cf2" stroke-width="1.2" /><path d="M479.75,816.2 L556.74,816.2" fill="none" stroke="#e23cf2" stroke-width="1.2" /><path d="M519.71,717.76 L519.71,748.95" fill="none" stroke="#e23cf2" stroke-width="1.2" /><path d="M527.89,717.76 L527.89,748.95" fill="none" stroke="#e23cf2" stroke-width="1.2" /><path d="M536.28,717.76 L536.28,748.95" fill="none" stroke="#e23cf2" stroke-width="1.2" /><path d="M544.07,717.76 L544.07,748.95" fill="none" stroke="#e23cf2" stroke-width="1.2" /><path d="M551.87,717.76 L551.87,748.95" fill="none" stroke="#e23cf2" stroke-width="1.2" /><path d="M511.33,725.56 L556.74,725.56" fill="none" stroke="#e23cf2" stroke-width="1.2" /><path d="M511.33,733.35 L556.74,733.35" fill="none" stroke="#e23cf2" stroke-width="1.2" /><path d="M511.33,741.15 L556.74,741.15" fill="none" stroke="#e23cf2" stroke-width="1.2" /><path d="M541.15,753.82 L541.15,793.78" fill="none" stroke="#e23cf2" stroke-width="1.2" /><path d="M548.95,753.82 L548.95,793.78" fill="none" stroke="#e23cf2" stroke-width="1.2" /><path d="M532.77,761.62 L556.74,761.62" fill="none" stroke="#e23cf2" stroke-width="1.2" /><path d="M532.77,769.42 L556.74,769.42" fill="none" stroke="#e23cf2" stroke-width="1.2" /><path d="M532.77,777.21 L556.74,777.21" fill="none" stroke="#e23cf2" stroke-width="1.2" /><path d="M532.77,785.01 L556.74,785.01" fill="none" stroke="#e23cf2" stroke-width="1.2" /><path d="M532.77,791.83 L556.74,791.83" fill="none" stroke="#e23cf2" stroke-width="1.2" /><rect x="396.39" y="695.73" width="55.56" height="3.9" fill="#fff" stroke="#f4f400" stroke-width="0.8" /><path d="M396.39,697.68 L451.95,697.68" fill="none" stroke="#f03030" stroke-width="2.1442495126705654" stroke-dasharray="1.4 1.2"/><rect x="396.39" y="695.73" width="3.9" height="101.95" fill="#fff" stroke="#f4f400" stroke-width="0.8" /><path d="M398.34,695.73 L398.34,797.68" fill="none" stroke="#f03030" stroke-width="2.1442495126705654" stroke-dasharray="1.4 1.2"/><rect x="396.39" y="793.78" width="166.08" height="3.9" fill="#fff" stroke="#f4f400" stroke-width="0.8" /><path d="M396.39,795.73 L562.48,795.73" fill="none" stroke="#f03030" stroke-width="2.1442495126705654" stroke-dasharray="1.4 1.2"/><rect x="448.83" y="695.73" width="3.12" height="18.71" fill="#fff" stroke="#f4f400" stroke-width="0.8" /><path d="M450.39,695.73 L450.39,714.44" fill="none" stroke="#f03030" stroke-width="1.7153996101364526" stroke-dasharray="1.4 1.2"/><rect x="508.4" y="713.86" width="52.24" height="3.9" fill="#fff" stroke="#f4f400" stroke-width="0.8" /><path d="M508.4,715.81 L560.64,715.81" fill="none" stroke="#f03030" stroke-width="2.1442495126705654" stroke-dasharray="1.4 1.2"/><rect x="556.74" y="713.86" width="3.9" height="103.31" fill="#fff" stroke="#f4f400" stroke-width="0.8" /><path d="M558.69,713.86 L558.69,817.17" fill="none" stroke="#f03030" stroke-width="2.1442495126705654" stroke-dasharray="1.4 1.2"/><rect x="511.33" y="748.95" width="49.32" height="3.9" fill="#fff" stroke="#f4f400" stroke-width="0.8" /><path d="M511.33,750.9 L560.64,750.9" fill="none" stroke="#f03030" stroke-width="2.1442495126705654" stroke-dasharray="1.4 1.2"/><rect x="456.82" y="797.68" width="2.73" height="19.49" fill="#fff" stroke="#f4f400" stroke-width="0.8" /><path d="M458.19,797.68 L458.19,817.17" fill="none" stroke="#f03030" stroke-width="1.5009746588693957" stroke-dasharray="1.4 1.2"/><rect x="450.39" y="779.16" width="2.34" height="15.59" fill="#fff" stroke="#f4f400" stroke-width="0.8" /><path d="M451.56,779.16 L451.56,794.76" fill="none" stroke="#f03030" stroke-width="1.286549707602339" stroke-dasharray="1.4 1.2"/><rect x="476.71" y="779.16" width="2.92" height="15.59" fill="#fff" stroke="#f4f400" stroke-width="0.8" /><path d="M478.17,779.16 L478.17,794.76" fill="none" stroke="#f03030" stroke-width="1.6081871345029242" stroke-dasharray="1.4 1.2"/><rect x="528.48" y="779.16" width="4.29" height="15.59" fill="#fff" stroke="#f4f400" stroke-width="0.8" /><rect x="406.53" y="742.12" width="40.94" height="3.12" fill="#58585c" stroke="#58585c" stroke-width="0.5" /><rect x="452.73" y="713.86" width="23.98" height="63.74" fill="#58585c" stroke="#58585c" stroke-width="0.5" /><rect x="457.21" y="723.02" width="13.65" height="49.32" fill="#fff" stroke="#e23cf2" stroke-width="1" /><path d="M457.21,723.02 L470.86,735.3" fill="none" stroke="#e23cf2" stroke-width="1" /><path d="M470.86,723.02 L457.21,735.3" fill="none" stroke="#e23cf2" stroke-width="1" /><path d="M457.21,735.3 L470.86,747.97" fill="none" stroke="#e23cf2" stroke-width="1" /><path d="M470.86,735.3 L457.21,747.97" fill="none" stroke="#e23cf2" stroke-width="1" /><path d="M457.21,747.97 L470.86,760.06" fill="none" stroke="#e23cf2" stroke-width="1" /><path d="M470.86,747.97 L457.21,760.06" fill="none" stroke="#e23cf2" stroke-width="1" /><path d="M457.21,760.06 L470.86,772.34" fill="none" stroke="#e23cf2" stroke-width="1" /><path d="M470.86,760.06 L457.21,772.34" fill="none" stroke="#e23cf2" stroke-width="1" /><path d="M480.6,713.86 L507.12,713.86 L507.12,752.85 L532.85,752.85 L532.85,777.6 L480.6,777.6Z" fill="#58585c" stroke="#58585c" stroke-width="0.5"/><path d="M486.45,723.02 L501.66,723.02 L501.66,758.69 L528.56,758.69 L528.56,772.34 L486.45,772.34Z" fill="#fff" stroke="#e23cf2" stroke-width="1"/><path d="M486.45,723.02 L502.05,735.3" fill="none" stroke="#e23cf2" stroke-width="1" /><path d="M502.05,723.02 L486.45,735.3" fill="none" stroke="#e23cf2" stroke-width="1" /><path d="M486.45,735.3 L502.05,747.97" fill="none" stroke="#e23cf2" stroke-width="1" /><path d="M502.05,735.3 L486.45,747.97" fill="none" stroke="#e23cf2" stroke-width="1" /><path d="M486.45,747.97 L502.05,760.06" fill="none" stroke="#e23cf2" stroke-width="1" /><path d="M502.05,747.97 L486.45,760.06" fill="none" stroke="#e23cf2" stroke-width="1" /><path d="M486.45,760.06 L502.05,772.34" fill="none" stroke="#e23cf2" stroke-width="1" /><path d="M502.05,760.06 L486.45,772.34" fill="none" stroke="#e23cf2" stroke-width="1" /><path d="M501.66,758.69 L515.11,772.34" fill="none" stroke="#e23cf2" stroke-width="1" /><path d="M515.11,758.69 L501.66,772.34" fill="none" stroke="#e23cf2" stroke-width="1" /><path d="M515.11,758.69 L528.56,772.34" fill="none" stroke="#e23cf2" stroke-width="1" /><path d="M528.56,758.69 L515.11,772.34" fill="none" stroke="#e23cf2" stroke-width="1" /><path d="M454.29,716.39 L474.76,716.39" fill="none" stroke="#e23cf2" stroke-width="1" /><path d="M482.55,716.39 L505.95,716.39" fill="none" stroke="#e23cf2" stroke-width="1" /><path d="M455.26,716.78 L455.26,775.26" fill="none" stroke="#e23cf2" stroke-width="1" stroke-dasharray="3 3"/><path d="M474.76,716.78 L474.76,775.26" fill="none" stroke="#e23cf2" stroke-width="1" stroke-dasharray="3 3"/><path d="M483.53,716.78 L483.53,775.26" fill="none" stroke="#e23cf2" stroke-width="1" stroke-dasharray="3 3"/><rect x="523.61" y="709.57" width="16.96" height="16.96" fill="#58585c" stroke="#58585c" stroke-width="0.5" /><path d="M532.38,671.95 L532.38,708.99" fill="none" stroke="#8f4a44" stroke-width="1" stroke-dasharray="7 2 1.5 2"/><path d="M532.38,726.53 L532.38,744.07" fill="none" stroke="#8f4a44" stroke-width="1" stroke-dasharray="7 2 1.5 2"/><path d="M532.38,763.57 L532.38,846.41" fill="none" stroke="#7a7a7a" stroke-width="1" /><path d="M532.38,846.41 L532.38,852.26" fill="none" stroke="#ff2222" stroke-width="1.2" /><circle cx="531.99" cy="857.72" r="5.46" fill="#fff" stroke="#ff2222" stroke-width="1.4"/><text x="531.99" y="860.64" font-family="Liberation Sans,sans-serif" font-size="7.2" fill="#111" text-anchor="middle" >13</text><circle cx="605.48" cy="718.15" r="5.26" fill="#fff" stroke="#ff2222" stroke-width="1.4"/><text x="605.48" y="720.88" font-family="Liberation Sans,sans-serif" font-size="7" fill="#111" text-anchor="middle" transform="rotate(-90 605.48 718.54)">G</text><path d="M589.88,718.15 L600.21,718.15" fill="none" stroke="#ff2222" stroke-width="1.2" /><rect x="457.6" y="735.69" width="13.65" height="4.48" fill="#fff" stroke="#ff2222" stroke-width="1.3" /><path d="M459.16,738.03 L469.3,738.03" fill="none" stroke="#00f0f0" stroke-width="1.5" /><rect x="487.43" y="735.69" width="13.65" height="4.48" fill="#fff" stroke="#ff2222" stroke-width="1.3" /><path d="M488.99,738.03 L499.12,738.03" fill="none" stroke="#00f0f0" stroke-width="1.5" /><path d="M459.16,748.36 L468.91,748.36" fill="none" stroke="#00f0f0" stroke-width="1.1" /><path d="M464.04,743.68 L464.04,753.43" fill="none" stroke="#00f0f0" stroke-width="1.1" /><path d="M461.11,745.63 L466.96,751.09" fill="none" stroke="#00f0f0" stroke-width="0.8" /><path d="M466.96,745.63 L461.11,751.09" fill="none" stroke="#00f0f0" stroke-width="0.8" /><path d="M488.99,748.36 L498.73,748.36" fill="none" stroke="#00f0f0" stroke-width="1.1" /><path d="M493.86,743.68 L493.86,753.43" fill="none" stroke="#00f0f0" stroke-width="1.1" /><path d="M490.94,745.63 L496.78,751.09" fill="none" stroke="#00f0f0" stroke-width="0.8" /><path d="M496.78,745.63 L490.94,751.09" fill="none" stroke="#00f0f0" stroke-width="0.8" /><path d="M455.26,770.39 L455.26,774.29 L460.14,774.29" fill="none" stroke="#00f0f0" stroke-width="1.2" /><path d="M483.53,770.39 L483.53,774.29 L488.4,774.29" fill="none" stroke="#00f0f0" stroke-width="1.2" /><path d="M471.83,726.53 L471.83,738.23" fill="none" stroke="#00f0f0" stroke-width="1.3" /><path d="M480.99,720.68 L480.99,738.23" fill="none" stroke="#00f0f0" stroke-width="1.3" /><path d="M408.09,726.53 L408.09,736.28" fill="none" stroke="#00f0f0" stroke-width="1.2" /><ellipse cx="411.99" cy="712.5" rx="4.29" ry="5.85" fill="#fff" stroke="#20e020" stroke-width="1.3"/><rect x="409.65" y="702.16" width="4.68" height="3.9" fill="none" stroke="#20e020" stroke-width="1.1" /><ellipse cx="436.74" cy="712.5" rx="4.29" ry="5.85" fill="#fff" stroke="#20e020" stroke-width="1.3"/><rect x="434.41" y="702.16" width="4.68" height="3.9" fill="none" stroke="#20e020" stroke-width="1.1" /><rect x="423.29" y="701.19" width="1.95" height="39.96" fill="#8f8" stroke="#20e020" stroke-width="1" /><path d="M401.07,791.25 L448.83,791.25" fill="none" stroke="#20e020" stroke-width="1.4" /><path d="M407.5,787.93 L412.38,782.09 L417.25,787.93" fill="none" stroke="#20e020" stroke-width="1.4" /><rect x="408.87" y="786.96" width="7.02" height="3.51" fill="none" stroke="#20e020" stroke-width="1.2" /><path d="M431.87,787.93 L436.74,782.09 L441.62,787.93" fill="none" stroke="#20e020" stroke-width="1.4" /><rect x="433.24" y="786.96" width="7.02" height="3.51" fill="none" stroke="#20e020" stroke-width="1.2" /><rect x="401.07" y="786.57" width="5.46" height="3.9" fill="#8f8" stroke="#20e020" stroke-width="1.2" /><ellipse cx="465.01" cy="785.98" rx="7.02" ry="5.46" fill="#fff" stroke="#20e020" stroke-width="2"/><path d="M462.09,788.91 L465.01,785.98 L467.93,788.91" fill="none" stroke="#20e020" stroke-width="1.3" /><ellipse cx="493.27" cy="785.98" rx="7.02" ry="5.46" fill="#fff" stroke="#20e020" stroke-width="2"/><path d="M490.35,788.91 L493.27,785.98 L496.2,788.91" fill="none" stroke="#20e020" stroke-width="1.3" /><ellipse cx="493.0" cy="785.98" rx="7.41" ry="5.46" fill="#fff" stroke="#20e020" stroke-width="2"/><path d="M490.08,788.91 L493.0,785.98 L495.93,788.91" fill="none" stroke="#20e020" stroke-width="1.3" /><ellipse cx="516.78" cy="785.98" rx="7.41" ry="5.46" fill="#fff" stroke="#20e020" stroke-width="2"/><path d="M513.86,788.91 L516.78,785.98 L519.71,788.91" fill="none" stroke="#20e020" stroke-width="1.3" /><ellipse cx="472.42" cy="809.38" rx="4.29" ry="7.02" fill="#fff" stroke="#20e020" stroke-width="1.4"/><rect x="469.69" y="798.65" width="5.46" height="3.51" fill="#8f8" stroke="#20e020" stroke-width="1.1" /><ellipse cx="496.2" cy="809.38" rx="4.29" ry="7.02" fill="#fff" stroke="#20e020" stroke-width="1.4"/><rect x="493.47" y="798.65" width="5.46" height="3.51" fill="#8f8" stroke="#20e020" stroke-width="1.1" /><ellipse cx="471.95" cy="809.38" rx="4.29" ry="7.02" fill="#fff" stroke="#20e020" stroke-width="1.4"/><rect x="469.22" y="798.65" width="5.46" height="3.51" fill="#8f8" stroke="#20e020" stroke-width="1.1" /><ellipse cx="496.9" cy="809.38" rx="4.29" ry="7.02" fill="#fff" stroke="#20e020" stroke-width="1.4"/><rect x="494.17" y="798.65" width="5.46" height="3.51" fill="#8f8" stroke="#20e020" stroke-width="1.1" /><ellipse cx="521.07" cy="809.38" rx="4.29" ry="7.02" fill="#fff" stroke="#20e020" stroke-width="1.4"/><rect x="518.34" y="798.65" width="5.46" height="3.51" fill="#8f8" stroke="#20e020" stroke-width="1.1" /><ellipse cx="545.05" cy="809.38" rx="4.29" ry="7.02" fill="#fff" stroke="#20e020" stroke-width="1.4"/><rect x="542.32" y="798.65" width="5.46" height="3.51" fill="#8f8" stroke="#20e020" stroke-width="1.1" /><ellipse cx="545.05" cy="738.62" rx="7.8" ry="4.29" fill="#fff" stroke="#20e020" stroke-width="1.4"/><rect x="553.43" y="735.3" width="2.73" height="6.43" fill="none" stroke="#20e020" stroke-width="1.1" /><ellipse cx="545.05" cy="781.11" rx="4.29" ry="7.02" fill="#fff" stroke="#20e020" stroke-width="1.4"/><rect x="541.73" y="789.3" width="6.63" height="3.51" fill="none" stroke="#20e020" stroke-width="1.1" /><rect x="534.33" y="786.57" width="4.87" height="5.26" fill="#8f8" stroke="#20e020" stroke-width="1.2" /><rect x="554.21" y="772.34" width="2.34" height="3.9" fill="none" stroke="#20e020" stroke-width="1.1" /><path d="M473.2,758.69 L473.2,767.47" fill="none" stroke="#20e020" stroke-width="1.8" /><path d="M484.11,758.69 L484.11,767.47" fill="none" stroke="#20e020" stroke-width="1.8" /><path d="M404.19,781.5 L408.48,777.21" fill="none" stroke="#445" stroke-width="2.2" /><path d="M478.65,812.3 L482.55,808.79" fill="none" stroke="#445" stroke-width="2.2" /><path d="M502.63,812.3 L506.53,808.79" fill="none" stroke="#445" stroke-width="2.2" /><path d="M478.38,812.3 L482.28,808.79" fill="none" stroke="#445" stroke-width="2.2" /><path d="M502.75,812.3 L506.65,808.79" fill="none" stroke="#445" stroke-width="2.2" /><path d="M527.12,812.3 L531.01,808.79" fill="none" stroke="#445" stroke-width="2.2" /><path d="M551.48,812.3 L555.38,808.79" fill="none" stroke="#445" stroke-width="2.2" /><path d="M545.05,731.4 L549.92,726.53" fill="none" stroke="#445" stroke-width="2" /><path d="M547.0,719.71 L550.9,722.63" fill="none" stroke="#445" stroke-width="2" /><rect x="419.4" y="709.96" width="1.95" height="4.87" fill="#445" stroke="#445" stroke-width="0.5" /><rect x="444.35" y="709.96" width="1.95" height="4.87" fill="#445" stroke="#445" stroke-width="0.5" /><circle cx="537.64" cy="781.5" r="1.17" fill="#445" stroke="#445" stroke-width="0.5"/><text x="480.21" y="807.43" font-family="Liberation Sans,sans-serif" font-size="3" fill="#00f0f0" text-anchor="middle" font-weight="bold">UR</text><text x="504.0" y="807.43" font-family="Liberation Sans,sans-serif" font-size="3" fill="#00f0f0" text-anchor="middle" font-weight="bold">UR</text><text x="480.72" y="807.43" font-family="Liberation Sans,sans-serif" font-size="3" fill="#00f0f0" text-anchor="middle" font-weight="bold">UR</text><text x="504.7" y="807.43" font-family="Liberation Sans,sans-serif" font-size="3" fill="#00f0f0" text-anchor="middle" font-weight="bold">UR</text><text x="528.48" y="807.43" font-family="Liberation Sans,sans-serif" font-size="3" fill="#00f0f0" text-anchor="middle" font-weight="bold">UR</text><text x="553.43" y="807.43" font-family="Liberation Sans,sans-serif" font-size="3" fill="#00f0f0" text-anchor="middle" font-weight="bold">UR</text><path d="M402.24,724.97 A17.93,17.93 0 0 1 420.18,742.51" fill="none" stroke="#8f4a44" stroke-width="1"/><path d="M427.0,724.97 A17.93,17.93 0 0 1 445.52,742.51" fill="none" stroke="#8f4a44" stroke-width="1"/><path d="M444.15,798.65 A19.49,19.49 0 0 1 435.77,817.17" fill="none" stroke="#8f4a44" stroke-width="1"/><path d="M511.91,735.89 A14.04,14.04 0 0 1 526.53,748.95" fill="none" stroke="#8f4a44" stroke-width="1"/><path d="M548.95,755.77 A16.57,16.57 0 0 1 534.33,772.34" fill="none" stroke="#8f4a44" stroke-width="1"/><path d="M501.07,724.58 A11.7,11.7 0 0 0 493.27,734.33" fill="none" stroke="#8f4a44" stroke-width="1"/><path d="M389.96,718.15 L451.36,718.15" fill="none" stroke="#8f4a44" stroke-width="1" /><path d="M560.64,718.15 L576.24,718.15" fill="none" stroke="#8f4a44" stroke-width="1" /><path d="M432.85,759.67 L438.69,765.13 L432.85,770.58 L427.0,765.13Z" fill="none" stroke="#b04030" stroke-width="1.6"/><rect x="431.48" y="755.77" width="2.73" height="2.34" fill="#00f0f0" stroke="#00f0f0" stroke-width="0.6" /><rect x="431.48" y="771.75" width="2.73" height="2.34" fill="#00f0f0" stroke="#00f0f0" stroke-width="0.6" /><circle cx="516.78" cy="765.52" r="4.29" fill="#fff" stroke="#ff2222" stroke-width="1.6"/><path d="M516.78,760.06 L522.24,765.52 L516.78,770.97 L511.33,765.52Z" fill="none" stroke="#b04030" stroke-width="1.2"/><path d="M374.95,725.95 L396.78,725.95 L406.53,741.15" fill="none" stroke="#8f4a44" stroke-width="1.1" /><path d="M374.95,756.74 L423.1,756.74" fill="none" stroke="#8f4a44" stroke-width="1.1" /><path d="M486.45,693.39 L455.26,693.39 L455.26,728.48" fill="none" stroke="#8f4a44" stroke-width="1.1" /><path d="M513.27,700.6 L493.39,700.6 L493.39,728.48" fill="none" stroke="#8f4a44" stroke-width="1.1" /><path d="M574.29,781.89 L532.38,781.89" fill="none" stroke="#8f4a44" stroke-width="1.1" /><rect x="361.31" y="723.02" width="13.65" height="5.46" fill="#fff" stroke="#ff2222" stroke-width="1.1" /><text x="368.13" y="727.28" font-family="Liberation Sans,sans-serif" font-size="4.64" fill="#00f0f0" text-anchor="middle" font-weight="bold">ST</text><rect x="361.31" y="754.21" width="13.65" height="5.46" fill="#fff" stroke="#ff2222" stroke-width="1.1" /><text x="368.13" y="758.47" font-family="Liberation Sans,sans-serif" font-size="4.64" fill="#00f0f0" text-anchor="middle" font-weight="bold">TD</text><rect x="486.45" y="690.47" width="13.26" height="5.85" fill="#fff" stroke="#ff2222" stroke-width="1.1" /><text x="493.08" y="695.03" font-family="Liberation Sans,sans-serif" font-size="4.97" fill="#00f0f0" text-anchor="middle" font-weight="bold">ST</text><rect x="513.27" y="697.68" width="13.65" height="5.85" fill="#fff" stroke="#ff2222" stroke-width="1.1" /><text x="520.1" y="702.24" font-family="Liberation Sans,sans-serif" font-size="4.97" fill="#00f0f0" text-anchor="middle" font-weight="bold">CS</text><rect x="574.29" y="779.16" width="13.65" height="5.46" fill="#fff" stroke="#ff2222" stroke-width="1.1" /><text x="581.11" y="783.42" font-family="Liberation Sans,sans-serif" font-size="4.64" fill="#00f0f0" text-anchor="middle" font-weight="bold">FD</text><text x="398.34" y="683.06" font-family="Liberation Sans,sans-serif" font-size="3.6" fill="#00f0f0" text-anchor="middle" font-weight="bold">150</text><text x="450.78" y="683.06" font-family="Liberation Sans,sans-serif" font-size="3.6" fill="#00f0f0" text-anchor="middle" font-weight="bold">150</text><text x="479.04" y="683.06" font-family="Liberation Sans,sans-serif" font-size="3.6" fill="#00f0f0" text-anchor="middle" font-weight="bold">150</text><text x="508.87" y="683.06" font-family="Liberation Sans,sans-serif" font-size="3.6" fill="#00f0f0" text-anchor="middle" font-weight="bold">150</text><text x="509.38" y="683.06" font-family="Liberation Sans,sans-serif" font-size="3.6" fill="#00f0f0" text-anchor="middle" font-weight="bold">150</text><text x="559.08" y="683.06" font-family="Liberation Sans,sans-serif" font-size="3.6" fill="#00f0f0" text-anchor="middle" font-weight="bold">150</text><text x="425.05" y="686.96" font-family="Liberation Sans,sans-serif" font-size="3.6" fill="#00f0f0" text-anchor="middle" font-weight="bold">1500</text><text x="464.62" y="686.96" font-family="Liberation Sans,sans-serif" font-size="3.6" fill="#00f0f0" text-anchor="middle" font-weight="bold">900</text><text x="494.25" y="686.96" font-family="Liberation Sans,sans-serif" font-size="3.6" fill="#00f0f0" text-anchor="middle" font-weight="bold">1200</text><text x="533.94" y="686.96" font-family="Liberation Sans,sans-serif" font-size="3.6" fill="#00f0f0" text-anchor="middle" font-weight="bold">1500</text><text x="424.66" y="825.56" font-family="Liberation Sans,sans-serif" font-size="3.6" fill="#00f0f0" text-anchor="middle" font-weight="bold">1500</text><text x="465.01" y="825.56" font-family="Liberation Sans,sans-serif" font-size="3.6" fill="#00f0f0" text-anchor="middle" font-weight="bold">900</text><text x="505.09" y="825.56" font-family="Liberation Sans,sans-serif" font-size="3.6" fill="#00f0f0" text-anchor="middle" font-weight="bold">1200</text><text x="545.05" y="825.56" font-family="Liberation Sans,sans-serif" font-size="3.6" fill="#00f0f0" text-anchor="middle" font-weight="bold">900</text><text x="398.34" y="837.06" font-family="Liberation Sans,sans-serif" font-size="3.6" fill="#00f0f0" text-anchor="middle" font-weight="bold">150</text><text x="450.78" y="837.06" font-family="Liberation Sans,sans-serif" font-size="3.6" fill="#00f0f0" text-anchor="middle" font-weight="bold">150</text><text x="479.04" y="837.06" font-family="Liberation Sans,sans-serif" font-size="3.6" fill="#00f0f0" text-anchor="middle" font-weight="bold">150</text><text x="530.43" y="837.06" font-family="Liberation Sans,sans-serif" font-size="3.6" fill="#00f0f0" text-anchor="middle" font-weight="bold">150</text><text x="559.08" y="837.06" font-family="Liberation Sans,sans-serif" font-size="3.6" fill="#00f0f0" text-anchor="middle" font-weight="bold">150</text><text x="465.01" y="842.51" font-family="Liberation Sans,sans-serif" font-size="3.6" fill="#00f0f0" text-anchor="middle" font-weight="bold">4950</text><text x="545.63" y="842.51" font-family="Liberation Sans,sans-serif" font-size="3.6" fill="#00f0f0" text-anchor="middle" font-weight="bold">1650</text><text x="381.58" y="697.88" font-family="Liberation Sans,sans-serif" font-size="3.6" fill="#00f0f0" text-anchor="middle" font-weight="bold" transform="rotate(-90 381.58 697.88)">150</text><text x="381.58" y="743.68" font-family="Liberation Sans,sans-serif" font-size="3.6" fill="#00f0f0" text-anchor="middle" font-weight="bold" transform="rotate(-90 381.58 743.68)">150</text><text x="381.58" y="796.12" font-family="Liberation Sans,sans-serif" font-size="3.6" fill="#00f0f0" text-anchor="middle" font-weight="bold" transform="rotate(-90 381.58 796.12)">150</text><text x="385.48" y="720.68" font-family="Liberation Sans,sans-serif" font-size="3.6" fill="#00f0f0" text-anchor="middle" font-weight="bold" transform="rotate(-90 385.48 720.68)">1200</text><text x="385.48" y="769.42" font-family="Liberation Sans,sans-serif" font-size="3.6" fill="#00f0f0" text-anchor="middle" font-weight="bold" transform="rotate(-90 385.48 769.42)">1500</text><text x="579.16" y="716.2" font-family="Liberation Sans,sans-serif" font-size="3.6" fill="#00f0f0" text-anchor="middle" font-weight="bold" transform="rotate(-90 579.16 716.2)">150</text><text x="579.16" y="751.87" font-family="Liberation Sans,sans-serif" font-size="3.6" fill="#00f0f0" text-anchor="middle" font-weight="bold" transform="rotate(-90 579.16 751.87)">150</text><text x="579.16" y="796.12" font-family="Liberation Sans,sans-serif" font-size="3.6" fill="#00f0f0" text-anchor="middle" font-weight="bold" transform="rotate(-90 579.16 796.12)">150</text><text x="568.44" y="733.35" font-family="Liberation Sans,sans-serif" font-size="3.6" fill="#00f0f0" text-anchor="middle" font-weight="bold" transform="rotate(-90 568.44 733.35)">1200</text><text x="568.44" y="773.31" font-family="Liberation Sans,sans-serif" font-size="3.6" fill="#00f0f0" text-anchor="middle" font-weight="bold" transform="rotate(-90 568.44 773.31)">1500</text><text x="587.35" y="756.74" font-family="Liberation Sans,sans-serif" font-size="3.6" fill="#00f0f0" text-anchor="middle" font-weight="bold" transform="rotate(-90 587.35 756.74)">3150</text><circle cx="396.78" cy="688.52" r="0.8" fill="#00f0f0"/><circle cx="396.78" cy="826.92" r="0.8" fill="#00f0f0"/><circle cx="400.68" cy="688.52" r="0.8" fill="#00f0f0"/><circle cx="400.68" cy="826.92" r="0.8" fill="#00f0f0"/><circle cx="448.83" cy="688.52" r="0.8" fill="#00f0f0"/><circle cx="448.83" cy="826.92" r="0.8" fill="#00f0f0"/><circle cx="452.73" cy="688.52" r="0.8" fill="#00f0f0"/><circle cx="452.73" cy="826.92" r="0.8" fill="#00f0f0"/><circle cx="476.71" cy="688.52" r="0.8" fill="#00f0f0"/><circle cx="476.71" cy="826.92" r="0.8" fill="#00f0f0"/><circle cx="480.6" cy="688.52" r="0.8" fill="#00f0f0"/><circle cx="480.6" cy="826.92" r="0.8" fill="#00f0f0"/><circle cx="476.82" cy="688.52" r="0.8" fill="#00f0f0"/><circle cx="480.72" cy="688.52" r="0.8" fill="#00f0f0"/><circle cx="507.43" cy="688.52" r="0.8" fill="#00f0f0"/><circle cx="511.33" cy="688.52" r="0.8" fill="#00f0f0"/><circle cx="556.74" cy="688.52" r="0.8" fill="#00f0f0"/><circle cx="560.64" cy="688.52" r="0.8" fill="#00f0f0"/><circle cx="528.48" cy="826.92" r="0.8" fill="#00f0f0"/><circle cx="532.38" cy="826.92" r="0.8" fill="#00f0f0"/><circle cx="556.74" cy="826.92" r="0.8" fill="#00f0f0"/><circle cx="560.64" cy="826.92" r="0.8" fill="#00f0f0"/><text x="608" y="221.300" font-family="Liberation Sans,sans-serif" font-size="8.6" fill="#00f0f0" font-weight="bold" textLength="86" lengthAdjust="spacingAndGlyphs">TOILET MARKETING OFFICE</text><text x="1082.500" y="221" font-family="Liberation Sans,sans-serif" font-size="8.6" fill="#00f0f0" font-weight="bold" textLength="47.500" lengthAdjust="spacingAndGlyphs">SCALE 1 : 50</text><text x="226.800" y="217" font-family="Liberation Sans,sans-serif" font-size="5" fill="#111" font-weight="bold" text-anchor="middle">1</text><text x="1148" y="213.400" font-family="Liberation Sans,sans-serif" font-size="5" fill="#1a1aff" font-weight="bold" textLength="45" lengthAdjust="spacing">N O T E :</text><rect x="1152.65" y="224.83" width="12.87" height="5.58" fill="#fff" stroke="#ff2222" stroke-width="1.2" /><text x="1159.09" y="229.33" font-family="Liberation Sans,sans-serif" font-size="4.2" fill="#00f0f0" text-anchor="middle" font-weight="bold">HD</text><text x="1171.1" y="229.33" font-family="Liberation Sans,sans-serif" font-size="4" fill="#00f0f0" font-weight="bold" textLength="18.9" lengthAdjust="spacingAndGlyphs">HAND DRYER</text><rect x="1152.65" y="231.26" width="12.87" height="5.58" fill="#fff" stroke="#ff2222" stroke-width="1.2" /><text x="1159.09" y="235.76" font-family="Liberation Sans,sans-serif" font-size="4.2" fill="#00f0f0" text-anchor="middle" font-weight="bold">TD</text><text x="1171.1" y="235.76" font-family="Liberation Sans,sans-serif" font-size="4" fill="#00f0f0" font-weight="bold" textLength="25.7" lengthAdjust="spacingAndGlyphs">TOWEL HOLDER</text><rect x="1152.65" y="238.12" width="12.87" height="5.58" fill="#fff" stroke="#ff2222" stroke-width="1.2" /><text x="1159.09" y="242.63" font-family="Liberation Sans,sans-serif" font-size="4.2" fill="#00f0f0" text-anchor="middle" font-weight="bold">SD</text><text x="1171.1" y="242.63" font-family="Liberation Sans,sans-serif" font-size="4" fill="#00f0f0" font-weight="bold" textLength="23.2" lengthAdjust="spacingAndGlyphs">SOAP HOLDER</text><rect x="1152.65" y="245.84" width="12.87" height="5.58" fill="#fff" stroke="#ff2222" stroke-width="1.2" /><text x="1159.09" y="250.35" font-family="Liberation Sans,sans-serif" font-size="4.2" fill="#00f0f0" text-anchor="middle" font-weight="bold">CS</text><text x="1171.1" y="250.35" font-family="Liberation Sans,sans-serif" font-size="4" fill="#00f0f0" font-weight="bold" textLength="39.7" lengthAdjust="spacingAndGlyphs">UPVC WINDOW-CASEMENT</text><rect x="1152.65" y="252.92" width="12.87" height="5.58" fill="#fff" stroke="#ff2222" stroke-width="1.2" /><text x="1159.09" y="257.43" font-family="Liberation Sans,sans-serif" font-size="4.2" fill="#00f0f0" text-anchor="middle" font-weight="bold">GL</text><text x="1171.1" y="257.43" font-family="Liberation Sans,sans-serif" font-size="4" fill="#00f0f0" font-weight="bold" textLength="24.7" lengthAdjust="spacingAndGlyphs">GLASS BLOCKS</text><rect x="1152.65" y="260.0" width="12.87" height="5.58" fill="#fff" stroke="#ff2222" stroke-width="1.2" /><text x="1159.09" y="264.5" font-family="Liberation Sans,sans-serif" font-size="4.2" fill="#00f0f0" text-anchor="middle" font-weight="bold">ST</text><text x="1171.1" y="264.5" font-family="Liberation Sans,sans-serif" font-size="4" fill="#00f0f0" font-weight="bold" textLength="38.6" lengthAdjust="spacingAndGlyphs">UPVC WINDOW-AWNING</text><rect x="1152.65" y="266.86" width="12.87" height="5.58" fill="#fff" stroke="#ff2222" stroke-width="1.2" /><text x="1159.09" y="271.37" font-family="Liberation Sans,sans-serif" font-size="4.2" fill="#00f0f0" text-anchor="middle" font-weight="bold">WCS</text><text x="1171.1" y="271.37" font-family="Liberation Sans,sans-serif" font-size="4" fill="#00f0f0" font-weight="bold" textLength="33.9" lengthAdjust="spacingAndGlyphs">WPVC WINDOW CASE</text><rect x="1152.65" y="273.3" width="12.87" height="5.58" fill="#fff" stroke="#ff2222" stroke-width="1.2" /><text x="1159.09" y="277.8" font-family="Liberation Sans,sans-serif" font-size="4.2" fill="#00f0f0" text-anchor="middle" font-weight="bold">WPC</text><text x="1171.1" y="277.8" font-family="Liberation Sans,sans-serif" font-size="4" fill="#00f0f0" font-weight="bold" textLength="38.6" lengthAdjust="spacingAndGlyphs">WHITE PAINT CEILING</text><rect x="1152.65" y="279.73" width="12.87" height="5.58" fill="#fff" stroke="#ff2222" stroke-width="1.2" /><text x="1159.09" y="284.24" font-family="Liberation Sans,sans-serif" font-size="4.2" fill="#00f0f0" text-anchor="middle" font-weight="bold">ARP</text><text x="1171.1" y="284.24" font-family="Liberation Sans,sans-serif" font-size="4" fill="#00f0f0" font-weight="bold" textLength="42.9" lengthAdjust="spacingAndGlyphs">ACRYLIC EMULSION PAINT</text><rect x="1152.65" y="286.6" width="12.87" height="5.58" fill="#fff" stroke="#ff2222" stroke-width="1.2" /><text x="1159.09" y="291.1" font-family="Liberation Sans,sans-serif" font-size="4.2" fill="#00f0f0" text-anchor="middle" font-weight="bold">C</text><text x="1171.1" y="291.1" font-family="Liberation Sans,sans-serif" font-size="4" fill="#00f0f0" font-weight="bold" textLength="11.8" lengthAdjust="spacingAndGlyphs">MIRROR</text><text x="1159.09" y="296.89" font-family="Liberation Sans,sans-serif" font-size="4.2" fill="#00f0f0" text-anchor="middle" font-weight="bold">FD</text><text x="1171.1" y="296.89" font-family="Liberation Sans,sans-serif" font-size="4" fill="#00f0f0" font-weight="bold" textLength="22" lengthAdjust="spacingAndGlyphs">FLOOR DRAIN</text><path d="M1141.15,390.24 L1274.22,390.24" fill="none" stroke="#8a4848" stroke-width="1" /><path d="M1141.15,400.47 L1274.22,400.47" fill="none" stroke="#8a4848" stroke-width="1" /><path d="M1141.15,410.44 L1274.22,410.44" fill="none" stroke="#8a4848" stroke-width="1" /><path d="M1141.15,420.54 L1274.22,420.54" fill="none" stroke="#8a4848" stroke-width="1" /><path d="M1141.15,430.5 L1274.22,430.5" fill="none" stroke="#8a4848" stroke-width="1" /><path d="M1141.15,440.46 L1274.22,440.46" fill="none" stroke="#8a4848" stroke-width="1" /><path d="M1141.15,450.56 L1274.22,450.56" fill="none" stroke="#8a4848" stroke-width="1" /><path d="M1141.15,460.52 L1274.22,460.52" fill="none" stroke="#8a4848" stroke-width="1" /><path d="M1141.15,470.49 L1274.22,470.49" fill="none" stroke="#8a4848" stroke-width="1" /><path d="M1141.15,480.59 L1274.22,480.59" fill="none" stroke="#8a4848" stroke-width="1" /><path d="M1141.15,490.55 L1274.22,490.55" fill="none" stroke="#8a4848" stroke-width="1" /><path d="M1141.15,503.93 L1274.22,503.93" fill="none" stroke="#8a7a7a" stroke-width="1.3" /><path d="M1154.39,390.24 L1154.39,503.93" fill="none" stroke="#8a4848" stroke-width="1" /><path d="M1241.47,390.24 L1241.47,503.93" fill="none" stroke="#8a4848" stroke-width="1" /><path d="M1254.43,390.24 L1254.43,503.93" fill="none" stroke="#8a4848" stroke-width="1" /><path d="M1141.23,834.39 L1274.56,834.39" fill="none" stroke="#8a4848" stroke-width="1" /><path d="M1141.23,888.07 L1274.56,888.07" fill="none" stroke="#8a4848" stroke-width="1" /><path d="M1167.54,888.07 L1167.54,928.42" fill="none" stroke="#8a4848" stroke-width="1" /><path d="M1207.54,888.07 L1207.54,966.49" fill="none" stroke="#8a4848" stroke-width="1" /><path d="M1234.74,928.42 L1234.74,966.49" fill="none" stroke="#8a4848" stroke-width="1" /><path d="M1167.54,898.6 L1274.56,898.6" fill="none" stroke="#8a4848" stroke-width="1" /><path d="M1167.54,908.6 L1274.56,908.6" fill="none" stroke="#8a4848" stroke-width="1" /><path d="M1167.54,918.6 L1274.56,918.6" fill="none" stroke="#8a4848" stroke-width="1" /><path d="M1141.23,928.42 L1274.56,928.42" fill="none" stroke="#8a4848" stroke-width="1" /><path d="M1141.23,938.42 L1274.56,938.42" fill="none" stroke="#8a4848" stroke-width="1" /><path d="M1141.23,958.6 L1207.54,958.6" fill="none" stroke="#8a4848" stroke-width="1" /><text x="1144.700" y="842" font-family="Liberation Sans,sans-serif" font-size="4.6" fill="#00f0f0" font-weight="bold" textLength="21" lengthAdjust="spacingAndGlyphs">DRAWING:</text><text x="1161" y="856.200" font-family="Liberation Sans,sans-serif" font-size="8.1" fill="#20e020" font-weight="bold" textLength="90.800" lengthAdjust="spacingAndGlyphs">MARKETING OFFICE TOILET</text><text x="1156.500" y="864.900" font-family="Liberation Sans,sans-serif" font-size="8.1" fill="#20e020" font-weight="bold" textLength="100.500" lengthAdjust="spacingAndGlyphs">PLAN &amp; INTERIOR ELEVATION</text><text x="1219.600" y="895" font-family="Liberation Sans,sans-serif" font-size="4.6" fill="#20e020" font-weight="bold">PHN</text><text x="1258" y="895" font-family="Liberation Sans,sans-serif" font-size="4.6" fill="#20e020" font-weight="bold">05/06</text><text x="1147" y="916" font-family="Liberation Sans,sans-serif" font-size="5" fill="#20e020" font-weight="bold">1 : 50</text><text x="1238" y="957.800" font-family="Liberation Sans,sans-serif" font-size="16.4" fill="#20e020" textLength="40.500" lengthAdjust="spacing">5306</text></svg><div class="a" style="left:613px;top:893px;width:697px;height:30px;background:rgba(92,92,92,0.78);border-radius:2px;"></div>
<div class="a" style="left:615px;top:894px;width:700px;font-family:'Liberation Mono',monospace;font-size:11.65px;line-height:14.5px;color:#fff;white-space:pre">Autodesk DWG.  This file is a TrustedDWG last saved by an Autodesk application or Autodesk licensed
application.</div>
<div class="a" style="left:613px;top:928.5px;width:60px;height:14.5px;background:rgba(58,58,58,0.9);border-radius:2px;"></div>
<div class="a" style="left:615px;top:928.5px;font-family:'Liberation Mono',monospace;font-size:11.65px;line-height:14.5px;color:#fff;white-space:pre">Command:</div>
<div class="a" style="left:613px;top:948.5px;width:60px;height:14.5px;background:rgba(58,58,58,0.9);border-radius:2px;"></div>
<div class="a" style="left:615px;top:948.5px;font-family:'Liberation Mono',monospace;font-size:11.65px;line-height:14.5px;color:#fff;white-space:pre">Command:</div>
<div class="a" style="left:607px;top:968px;width:755px;height:24px;background:rgba(255,255,255,0.64);border-top:1px solid rgba(120,120,140,.5);border-radius:0 2px 2px 0;"></div>
<div class="a" style="left:554px;top:967px;width:53px;height:25px;background:#4b4b4b;border-radius:2px 0 0 2px;border:1px solid #666;"></div>
<div class="a" style="left:644px;top:971.5px;font-family:'Liberation Mono',monospace;font-size:11.65px;font-style:italic;line-height:15px;color:#a0a0a0;white-space:pre">Type a command</div>
<div class="a" style="left:8px;top:992px;width:1901px;height:31px;background:#373737;"></div>
<div class="a" style="left:1424px;top:993px;width:483px;height:28.5px;background:#6b6b6b;border-radius:0 0 8px 0;"></div>
<div class="a" style="left:1424.8px;top:994.5px;width:40.8px;height:25.5px;background:#4e4e4e;border:1px solid #606060;"></div>
<div class="a" style="left:1467.6px;top:994.5px;width:102.6px;height:25.5px;background:#4e4e4e;border:1px solid #606060;"></div>
<div class="a" style="left:1571.1px;top:994.5px;width:63.4px;height:25.5px;background:#4e4e4e;border:1px solid #606060;"></div>
<div class="a" style="left:1636.4px;top:994.5px;width:72.7px;height:25.5px;background:#4e4e4e;border:1px solid #606060;"></div>
<div class="a" style="left:1711.3px;top:994.5px;width:40.3px;height:25.5px;background:#4e4e4e;border:1px solid #606060;"></div>
<div class="a" style="left:1752.1px;top:994.5px;width:24.5px;height:25.5px;background:#4e4e4e;border:1px solid #606060;"></div>
<div class="a" style="left:1778.8px;top:994.5px;width:25.0px;height:25.5px;background:#4e4e4e;border:1px solid #606060;"></div>
<div class="a" style="left:1805.7px;top:994.5px;width:49.3px;height:25.5px;background:#4e4e4e;border:1px solid #606060;"></div>
<div class="a" style="left:1857.5px;top:994.5px;width:49.0px;height:25.5px;background:#4e4e4e;border:1px solid #606060;"></div>
<div class="a" style="left:1469.0px;top:996px;width:21.8px;height:22px;background:#5b8fc7;"></div>
<div class="a" style="left:1596.1px;top:996px;width:22.1px;height:22px;background:#5b8fc7;"></div>
<div class="t" style="left:1428.7px;top:1000.45px;font-size:11.5px;line-height:13.5px;color:#f8f8f8;letter-spacing:-0.927px;">PAPER</div>
<svg width="1910" height="1026" viewBox="0 0 1910 1026"><defs><linearGradient id="lt" x1="0" y1="0" x2="0" y2="1"><stop offset="0" stop-color="#565656"/><stop offset="1" stop-color="#484848"/></linearGradient><linearGradient id="lta" x1="0" y1="0" x2="0" y2="1"><stop offset="0" stop-color="#8e8e8e"/><stop offset="1" stop-color="#747474"/></linearGradient></defs><path d="M18,994 H71 C71,1003 69,1011 62,1011 H30 C22,1011 21,1000 18,994Z" fill="url(#lt)"/><path d="M77,994 H146 C143,1000 142,1012 133,1012 H91 C81,1012 81,1000 77,994Z" fill="url(#lta)"/><path d="M152,994.500 H170 C168,1003 167,1009 161,1009 H148 C150,1005 151,999 152,994.500Z" fill="#4e4e4e"/><path d="M154.500,1001.700 H162.500 M158.500,997.700 V1005.700" stroke="#d0d0d0" stroke-width="1.5"/><path d="M24.300,889.500 V976.400 H74.800Z M24.300,968.400 H32.300 V976.400 M26.500,915 L32,921 L38,914 M32,921 V928 M52,962 L65,974 M65,962 L52,974" fill="none" stroke="#2c3cf0" stroke-width="1"/><g stroke="#f4f4f4" fill="none"><path d="M1846,198.500 H1857" stroke-width="2.4"/><rect x="1867.500" y="194.500" width="6.5" height="6.5" stroke-width="1.3"/><path d="M1869.500,194.500 V192.500 H1876.500 V199 H1874" stroke-width="1.1"/><path d="M1887,192.500 L1895,200.500 M1895,192.500 L1887,200.500" stroke-width="2"/></g><rect x="1871.500" y="441.500" width="33" height="133" rx="4" fill="#949494" stroke="#767676" stroke-width="1.2"/><path d="M1872,453.500 H1904" stroke="#868686" stroke-dasharray="1 1"/><g fill="none" stroke="#a8a8a8" stroke-width="1.2"><circle cx="1898" cy="447" r="3.2"/><path d="M1896.300,445.300 L1899.700,448.700 M1899.700,445.300 L1896.300,448.700"/><rect x="1877" y="463" width="16" height="15" rx="5"/><circle cx="1885" cy="470.500" r="3.5"/><path d="M1879,488 H1901" stroke="#888"/><path d="M1878,514 C1876,508 1879,505 1881,509 V499 C1881,496 1884,496 1884,499 V495.500 C1884,493 1887,493 1887,496 V497 C1887,494.500 1890,494.500 1890,497.500 V500 C1890,498 1893,498 1893,501 V509 C1893,514 1890,517 1886,517 C1882,517 1880,516 1878,514Z"/><path d="M1876,522 L1890,536 M1890,522 L1876,536 M1876,522 H1880 M1876,522 V526 M1890,522 H1886 M1890,522 V526 M1876,536 H1880 M1876,536 V532"/><circle cx="1892" cy="537" r="4"/><path d="M1895,540 L1899,544" stroke-width="2"/><circle cx="1898" cy="567.500" r="3.200"/><path d="M1896,567.500 H1900"/></g><path d="M1885,551 H1891 L1888,554.500Z" fill="#858585"/><text x="1888" y="483" font-family="Liberation Sans,sans-serif" font-size="7" font-weight="bold" fill="#a8a8a8">2D</text><g fill="#b0b0b0"><rect x="557.500" y="970" width="1.600" height="1.600"/><rect x="560.500" y="970" width="1.600" height="1.600"/><rect x="557.500" y="973" width="1.600" height="1.600"/><rect x="560.500" y="973" width="1.600" height="1.600"/><rect x="557.500" y="976" width="1.600" height="1.600"/><rect x="560.500" y="976" width="1.600" height="1.600"/><rect x="557.500" y="979" width="1.600" height="1.600"/><rect x="560.500" y="979" width="1.600" height="1.600"/><rect x="557.500" y="982" width="1.600" height="1.600"/><rect x="560.500" y="982" width="1.600" height="1.600"/><rect x="557.500" y="985" width="1.600" height="1.600"/><rect x="560.500" y="985" width="1.600" height="1.600"/><rect x="557.500" y="988" width="1.600" height="1.600"/><rect x="560.500" y="988" width="1.600" height="1.600"/></g><path d="M569,974.500 L577,982.500 M577,974.500 L569,982.500" stroke="#f0f0f0" stroke-width="2.2"/><path d="M590,973 A3.800,3.800 0 1 0 594.500,977.500 L601,984.500 L599,986.500 L592.500,979.500" fill="none" stroke="#f0f0f0" stroke-width="2.2" stroke-linecap="round"/><rect x="612.500" y="972.500" width="13.500" height="12.500" rx="1.500" fill="#e4e4e4" stroke="#9a9a9a"/><path d="M615.500,975.500 L619,978.500 L615.500,981.500 M620,982 H624" stroke="#707070" stroke-width="1.200" fill="none"/><path d="M630.500,977 H636 L633.200,980Z" fill="#8a8a8a"/><path d="M1351,982 H1359 L1355,977.500Z" fill="#3a3a3a"/><path d="M1473.8448135039478,1000 V1015 H1487.8448135039478 M1473.8448135039478,1010.500 H1478.3448135039478 V1015" fill="none" stroke="#f2f2f2" stroke-width="1.400"/><circle cx="1501.9866594064797" cy="1008.500" r="6.200" fill="none" stroke="#f2f2f2" stroke-width="1.300"/><path d="M1501.9866594064797,1008.500 H1510.9866594064797 M1501.9866594064797,1008.500 L1509.9866594064797,1000" stroke="#f2f2f2" stroke-width="1.200"/><path d="M1519.9059352028314,1005.500 H1526.9059352028314 L1523.4059352028314,1009.500Z" fill="#f2f2f2"/><path d="M1558.5664307105908,1005.500 H1565.5664307105908 L1562.0664307105908,1009.500Z" fill="#f2f2f2"/><path d="M1622.8190852164444,1005.500 H1629.8190852164444 L1626.3190852164444,1009.500Z" fill="#f2f2f2"/><path d="M1739.8895997821944,1005.500 H1746.8895997821944 L1743.3895997821944,1009.500Z" fill="#f2f2f2"/><path d="M1542.463925946093,999 V1016" stroke="#58c058" stroke-width="1.300"/><path d="M1535.463925946093,1000.500 L1549.463925946093,1014.500" stroke="#e04848" stroke-width="1.300"/><circle cx="1542.463925946093" cy="1007.500" r="1.300" fill="#fff"/><path d="M1574.7579635175605,1014.500 H1590.7579635175605 M1574.7579635175605,1014.500 L1588.7579635175605,1001.500" stroke="#f2f2f2" stroke-width="1.300" fill="none"/><rect x="1580.2579635175605" y="1006" width="3" height="3" fill="#f2f2f2"/><rect x="1600.9888374625646" y="1001.500" width="13.500" height="13.500" fill="none" stroke="#f2f2f2" stroke-width="1.400"/><rect x="1598.9888374625646" y="999.500" width="4.500" height="4.500" fill="#5b8fc7" stroke="#f2f2f2" stroke-width="1.200"/><rect x="1641.1441600871221" y="1000.500" width="15" height="15" fill="none" stroke="#f2f2f2" stroke-width="1.300" stroke-dasharray="3 2"/><rect x="1647.1441600871221" y="1006.500" width="6" height="6" fill="none" stroke="#f2f2f2" stroke-width="1.100"/><path d="M1641.6441600871221,1000.500 L1645.6441600871221,1004.500" stroke="#f2f2f2" stroke-width="1.100"/><path d="M1672.1472910427444,999.500 L1674.6472910427444,1009 L1680.1472910427444,1015 L1673.6472910427444,1011.500 L1672.1472910427444,1013 L1670.6472910427444,1011.500 L1664.1472910427444,1015 L1669.6472910427444,1009Z" fill="#e8e8e8"/><circle cx="1678.6472910427444" cy="1002.500" r="2.200" fill="none" stroke="#f2f2f2" stroke-width="1.100"/><path d="M1695.6504219983665,999.500 L1698.1504219983665,1009 L1703.6504219983665,1015 L1697.1504219983665,1011.500 L1695.6504219983665,1013 L1694.1504219983665,1011.500 L1687.6504219983665,1015 L1693.1504219983665,1009Z" fill="#e8e8e8"/><path d="M1703.6504219983665,999.500 L1700.6504219983665,1004 H1703.1504219983665 L1701.1504219983665,1008 L1706.1504219983665,1002.500 H1703.6504219983665 L1705.1504219983665,999.500Z" fill="#f2f2f2"/><path d="M1730.97,1009.48 L1728.17,1011.11 L1727.74,1014.32 L1724.61,1013.49 L1722.03,1015.45 L1720.40,1012.66 L1717.20,1012.22 L1718.02,1009.09 L1716.06,1006.52 L1718.86,1004.89 L1719.29,1001.68 L1722.42,1002.51 L1725.00,1000.55 L1726.63,1003.34 L1729.83,1003.78 L1729.01,1006.91Z" fill="#e4e4e4"/><circle cx="1723.5148380070787" cy="1008" r="2.600" fill="#4e4e4e"/><path d="M1755.8088755785461,1008 H1771.8088755785461 M1763.8088755785461,1000 V1016" stroke="#f2f2f2" stroke-width="1.800"/><rect x="1783.2623196297304" y="1000" width="6.500" height="6.500" fill="none" stroke="#f2f2f2" stroke-width="1.200"/><circle cx="1795.2623196297304" cy="1006" r="3.200" fill="none" stroke="#f2f2f2" stroke-width="1.200"/><path d="M1789.2623196297304,1009.500 L1792.4623196297305,1015.500 H1786.0623196297304Z" fill="none" stroke="#f2f2f2" stroke-width="1.200"/><rect x="1809.0822216172066" y="1000.500" width="11.500" height="10" fill="#58b8e8"/><rect x="1809.0822216172066" y="1010.500" width="7" height="4.500" fill="#f4d040"/><path d="M1812.3822216172066,1001 V1010 M1809.0822216172066,1005.300 H1817.0822216172066" stroke="#fff" stroke-width="1.100"/><circle cx="1812.3822216172066" cy="1005.300" r="1.600" fill="none" stroke="#fff"/><path d="M1817.5822216172066,1000.500 L1820.5822216172066,1003.500 H1817.5822216172066Z" fill="#f0f0f0"/><path d="M1815.0822216172066,1012.500 L1818.0822216172066,1015.500 L1823.5822216172066,1010" stroke="#38a048" stroke-width="2.200" fill="none"/><rect x="1833.0853525728287" y="1000.500" width="13" height="10" fill="#ececec"/><path d="M1833.5853525728287,1010 L1837.0853525728287,1002.500 L1840.5853525728287,1007 L1842.5853525728287,1005 L1845.5853525728287,1010" stroke="#555" stroke-width=".900" fill="none"/><rect x="1836.0853525728287" y="1001.500" width="2" height="2" fill="#3a78c8"/><path d="M1843.0853525728287,1004.500 L1847.5853525728287,1014.500 H1838.5853525728287Z" fill="#e85048"/><path d="M1843.0853525728287,1008 V1011.500 M1843.0853525728287,1012.500 V1013.500" stroke="#fff" stroke-width="1.100"/><rect x="1861.7168527089573" y="1001.500" width="16" height="12" fill="none" stroke="#f2f2f2" stroke-width="1.400"/><path d="M1864.7168527089573,1011 L1867.7168527089573,1008 M1864.2168527089573,1008 V1011.500 H1867.7168527089573 M1874.7168527089573,1004 L1871.7168527089573,1007 M1871.7168527089573,1003.500 H1875.2168527089573 V1007" stroke="#f2f2f2" stroke-width="1.200" fill="none"/><path d="M1886.2199836645793,1002 H1902.2199836645793 M1886.2199836645793,1008 H1902.2199836645793 M1886.2199836645793,1014 H1902.2199836645793" stroke="#f2f2f2" stroke-width="2"/></svg><div class="t" style="left:31.4px;top:995.32px;font-size:12.5px;line-height:14.5px;color:#b4b4b4;letter-spacing:-0.129px;">Model</div>
<div class="t" style="left:88px;top:995.32px;font-size:12.5px;line-height:14.5px;color:#ffffff;letter-spacing:-0.704px;font-weight:bold;">Layout1</div>
</div></div>
</body>
</html>
